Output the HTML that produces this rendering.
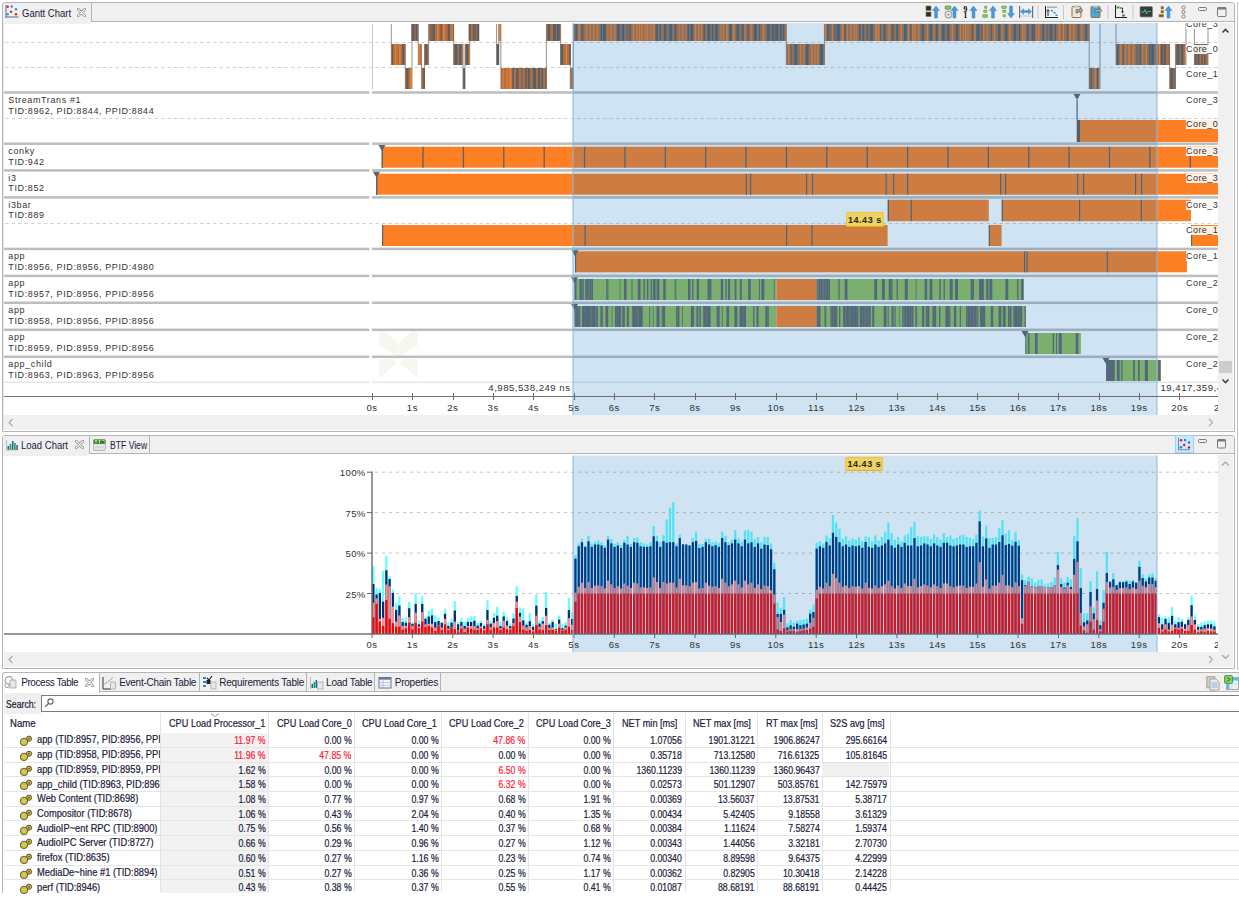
<!DOCTYPE html>
<html><head><meta charset="utf-8"><style>
html,body{margin:0;padding:0;}
body{width:1239px;height:898px;overflow:hidden;position:relative;background:#fff;font-family:"Liberation Sans", sans-serif;}
div{font-family:"Liberation Sans", sans-serif;}
</style></head><body>
<div style="position:absolute;left:2px;top:2px;width:1233px;height:430px;border:1px solid #b4b4b4;border-radius:3px 3px 0 0;background:#fff;box-sizing:border-box;"></div>
<div style="position:absolute;left:3px;top:3px;width:1231px;height:19px;background:#f0f0f0;border-radius:3px 3px 0 0;"></div>
<div style="position:absolute;left:91px;top:21px;width:1143px;height:1px;background:#b4b4b4;"></div>
<div style="position:absolute;left:91px;top:3px;width:1px;height:19px;background:#b4b4b4;"></div>
<svg style="position:absolute;left:5px;top:5px" width="14" height="14" viewBox="0 0 14 14"><rect x="0.5" y="0" width="1" height="12.5" fill="#4a6a9a"/><rect x="0.5" y="11.5" width="13" height="1" fill="#4a6a9a"/><circle cx="2.7" cy="1.8" r="1.2" fill="#e02020"/><circle cx="6.8" cy="1.5" r="1.2" fill="#3a8ad0"/><circle cx="11" cy="4.3" r="1.2" fill="#3a8ad0"/><circle cx="6.1" cy="6.8" r="1.2" fill="#e02020"/><circle cx="2.7" cy="9.2" r="1.2" fill="#3a8ad0"/><circle cx="11" cy="9.2" r="1.2" fill="#e02020"/></svg>
<div style="position:absolute;left:3px;top:21px;width:88px;height:2.5px;background:#f0f0f0;"></div>
<div style="position:absolute;top:9.14px;font-size:10px;line-height:10px;color:#20203a;white-space:nowrap;left:22px;"><span style="display:inline-block;transform:scaleX(0.95);transform-origin:left 50%;">Gantt Chart</span></div>
<svg style="position:absolute;left:77px;top:8px" width="9" height="9" viewBox="0 0 9 9"><path d="M1,1 L8,8 M8,1 L1,8" stroke="#8a8a8a" stroke-width="2.6" stroke-linecap="round"/><path d="M1,1 L8,8 M8,1 L1,8" stroke="#f8f8f8" stroke-width="1.1" stroke-linecap="round"/></svg>
<svg width="1239" height="30" style="position:absolute;left:0;top:0"><rect x="926" y="6" width="5" height="4.5" fill="#303030" stroke="#6a8a3a" stroke-width="0.6"/><rect x="926" y="12" width="5" height="4.5" fill="#303030" stroke="#6a8a3a" stroke-width="0.6"/><path d="M932.6,10.5 L936,6 L939.4,10.5 L937.4,10.5 L937.4,18 L934.6,18 L934.6,10.5 Z" fill="#4a9ad8" stroke="#2f7fc0" stroke-width="0.5"/><rect x="945" y="6" width="6" height="3.2" rx="1" fill="#8cc860" stroke="#3a7a2a" stroke-width="0.6"/><circle cx="948.5" cy="14.5" r="3.3" fill="none" stroke="#a0a0a0" stroke-width="1.2"/><circle cx="948.5" cy="14.5" r="1.2" fill="#a0a0a0"/><path d="M951.1,10.5 L954.5,6 L957.9,10.5 L955.9,10.5 L955.9,18 L953.1,18 L953.1,10.5 Z" fill="#4a9ad8" stroke="#2f7fc0" stroke-width="0.5"/><text x="963.5" y="11.5" font-family="Liberation Serif" font-weight="bold" font-size="7.5" fill="#000">9</text><text x="963.5" y="18" font-family="Liberation Serif" font-weight="bold" font-size="7.5" fill="#000">1</text><path d="M970.1,10.5 L973.5,6 L976.9,10.5 L974.9,10.5 L974.9,18 L972.1,18 L972.1,10.5 Z" fill="#4a9ad8" stroke="#2f7fc0" stroke-width="0.5"/><rect x="984.5" y="6" width="2.5" height="2.5" rx="1" fill="#8cc860" stroke="#5a9a3a" stroke-width="0.6"/><rect x="983.5" y="10" width="3.5" height="2.5" rx="1" fill="#8cc860" stroke="#5a9a3a" stroke-width="0.6"/><rect x="982.5" y="14.5" width="5" height="3" rx="1" fill="#8cc860" stroke="#5a9a3a" stroke-width="0.6"/><path d="M989.6,10.5 L993,6 L996.4,10.5 L994.4,10.5 L994.4,18 L991.6,18 L991.6,10.5 Z" fill="#4a9ad8" stroke="#2f7fc0" stroke-width="0.5"/><rect x="1001.5" y="6" width="5" height="2.5" rx="1" fill="#8cc860" stroke="#5a9a3a" stroke-width="0.6"/><rect x="1002.5" y="10" width="3.5" height="2.5" rx="1" fill="#8cc860" stroke="#5a9a3a" stroke-width="0.6"/><rect x="1003" y="14.5" width="2.5" height="2.5" rx="1" fill="#8cc860" stroke="#5a9a3a" stroke-width="0.6"/><path d="M1007.6,13.5 L1011,18 L1014.4,13.5 L1012.4,13.5 L1012.4,6 L1009.6,6 L1009.6,13.5 Z" fill="#4a9ad8" stroke="#2f7fc0" stroke-width="0.5"/><rect x="1019" y="6" width="1.2" height="12" fill="#707070"/><rect x="1032" y="6" width="1.2" height="12" fill="#707070"/><rect x="1020" y="15.5" width="12" height="1" fill="#c8c8c8"/><path d="M1020.5,11.5 L1023.5,8.5 L1023.5,10.5 L1028.5,10.5 L1028.5,8.5 L1031.5,11.5 L1028.5,14.5 L1028.5,12.5 L1023.5,12.5 L1023.5,14.5 Z" fill="#4a9ad8" stroke="#2f7fc0" stroke-width="0.4"/><rect x="1037.5" y="5" width="1" height="14" fill="#c8c8c8"/><rect x="1045" y="6" width="1" height="12" fill="#202020"/><rect x="1045" y="17" width="13" height="1" fill="#202020"/><rect x="1047" y="6.5" width="10" height="1.5" fill="#b0b0b0"/><path d="M1048,10 L1048,16" stroke="#202020" stroke-width="1"/><path d="M1046.5,11.5 L1048,9.5 L1049.5,11.5" fill="none" stroke="#202020" stroke-width="0.8"/><rect x="1051" y="10" width="2" height="1.5" fill="#3a8ac8"/><rect x="1053.5" y="12" width="2" height="1.5" fill="#3a8ac8"/><rect x="1055.5" y="14.5" width="2" height="1.5" fill="#3a8ac8"/><rect x="1063" y="5" width="1" height="14" fill="#c8c8c8"/><rect x="1072" y="6.5" width="9" height="11" rx="1" fill="#e8e8e0" stroke="#a06840" stroke-width="1"/><rect x="1074" y="5.5" width="5" height="2" fill="#c0c0c0"/><path d="M1076,13 L1076,9.5 L1080,9.5 L1080,8 L1083,10.5 L1080,13 L1080,11.5 L1078,11.5 L1078,13 Z" fill="#f0a040" stroke="#2a6aa0" stroke-width="0.7"/><rect x="1091" y="6.5" width="9" height="11" rx="1" fill="#3ab0e8" stroke="#a06840" stroke-width="1"/><rect x="1093" y="5.5" width="5" height="2" fill="#c0c0c0"/><path d="M1095,13 L1095,9.5 L1099,9.5 L1099,8 L1102,10.5 L1099,13 L1099,11.5 L1097,11.5 L1097,13 Z" fill="#f0a040" stroke="#2a6aa0" stroke-width="0.7"/><rect x="1107.5" y="5" width="1" height="14" fill="#c8c8c8"/><rect x="1115" y="5" width="1" height="13" fill="#202020"/><rect x="1115" y="17" width="12" height="1" fill="#202020"/><rect x="1116.5" y="6.5" width="3" height="2" fill="#3a9a2a"/><rect x="1122" y="14.5" width="3" height="2" fill="#3a9a2a"/><path d="M1120,8 L1122.5,8 L1122.5,13" fill="none" stroke="#202020" stroke-width="0.9"/><path d="M1121,11.5 L1122.5,13.5 L1124,11.5" fill="#202020"/><rect x="1132.5" y="5" width="1" height="14" fill="#c8c8c8"/><rect x="1140" y="6.5" width="12.5" height="10.5" rx="1" fill="#3a3a3a" stroke="#8a8a8a" stroke-width="0.8"/><path d="M1141.5,12 L1144,12 L1145,9.5 L1146.5,14 L1147.5,11.5 L1151,11.5" fill="none" stroke="#40d0a0" stroke-width="0.9"/><rect x="1161" y="6.5" width="2.5" height="2.5" fill="#d03020" stroke="#5ab040" stroke-width="0.6"/><rect x="1161" y="10.5" width="2.5" height="2.5" fill="#d03020" stroke="#5ab040" stroke-width="0.6"/><rect x="1159" y="14.5" width="4.5" height="2.5" fill="#d03020" stroke="#5ab040" stroke-width="0.6"/><path d="M1165.1,10.5 L1168.5,6 L1171.9,10.5 L1169.9,10.5 L1169.9,18 L1167.1,18 L1167.1,10.5 Z" fill="#4a9ad8" stroke="#2f7fc0" stroke-width="0.5"/><circle cx="1183.5" cy="7.5" r="1.6" fill="none" stroke="#7a7a7a" stroke-width="0.9"/><circle cx="1183.5" cy="12" r="1.6" fill="none" stroke="#7a7a7a" stroke-width="0.9"/><circle cx="1183.5" cy="16.5" r="1.6" fill="none" stroke="#7a7a7a" stroke-width="0.9"/><rect x="1198.5" y="7.5" width="8" height="3" rx="1" fill="none" stroke="#7a7a7a" stroke-width="1"/><rect x="1217.5" y="7.5" width="8.5" height="9" rx="1" fill="none" stroke="#7a7a7a" stroke-width="1"/><rect x="1217.5" y="7.5" width="8.5" height="2" fill="#7a7a7a"/></svg>
<div style="position:absolute;left:3px;top:23px;width:1px;height:407px;background:#e6e6e6;"></div>
<svg width="1239" height="898" style="position:absolute;left:0;top:0"><defs><clipPath id="gclip"><rect x="3" y="23" width="1215" height="392"/></clipPath><clipPath id="cclip"><rect x="372" y="23" width="846" height="392"/></clipPath></defs><g clip-path="url(#gclip)"><g fill="#f4f8ef"><path d="M379,331.5 L385,331.5 L398.2,343 L398.2,356.5 L379,345.5 Z"/><path d="M417.8,331.5 L411.8,331.5 L398.8,343 L398.8,356.5 L417.8,345.5 Z"/><path d="M379,359.5 L391.5,358.5 L397.5,363 L379,378 Z"/><path d="M417.8,359.5 L405.3,358.5 L399.3,363 L417.8,378 Z"/></g><rect x="4" y="91.25" width="365.3" height="2.5" fill="#bdbdbd"/><rect x="372" y="91.25" width="846" height="2.5" fill="#bdbdbd"/><rect x="4" y="142.45" width="365.3" height="2.5" fill="#bdbdbd"/><rect x="372" y="142.45" width="846" height="2.5" fill="#bdbdbd"/><rect x="4" y="169.15" width="365.3" height="2.5" fill="#bdbdbd"/><rect x="372" y="169.15" width="846" height="2.5" fill="#bdbdbd"/><rect x="4" y="196.15" width="365.3" height="2.5" fill="#bdbdbd"/><rect x="372" y="196.15" width="846" height="2.5" fill="#bdbdbd"/><rect x="4" y="247.65" width="365.3" height="2.5" fill="#bdbdbd"/><rect x="372" y="247.65" width="846" height="2.5" fill="#bdbdbd"/><rect x="4" y="274.65" width="365.3" height="2.5" fill="#bdbdbd"/><rect x="372" y="274.65" width="846" height="2.5" fill="#bdbdbd"/><rect x="4" y="301.55" width="365.3" height="2.5" fill="#bdbdbd"/><rect x="372" y="301.55" width="846" height="2.5" fill="#bdbdbd"/><rect x="4" y="328.55" width="365.3" height="2.5" fill="#bdbdbd"/><rect x="372" y="328.55" width="846" height="2.5" fill="#bdbdbd"/><rect x="4" y="355.55" width="365.3" height="2.5" fill="#bdbdbd"/><rect x="372" y="355.55" width="846" height="2.5" fill="#bdbdbd"/><rect x="4" y="381.6" width="365.3" height="1.2" fill="#e0e0e0"/><rect x="372" y="381.6" width="846" height="1.2" fill="#e0e0e0"/><line x1="5" y1="42.5" x2="1218" y2="42.5" stroke="#d2d2d2" stroke-width="1" stroke-dasharray="3.5,3"/><line x1="5" y1="67.5" x2="1218" y2="67.5" stroke="#d2d2d2" stroke-width="1" stroke-dasharray="3.5,3"/><line x1="5" y1="118.5" x2="1218" y2="118.5" stroke="#d2d2d2" stroke-width="1" stroke-dasharray="3.5,3"/><line x1="5" y1="223.5" x2="1218" y2="223.5" stroke="#d2d2d2" stroke-width="1" stroke-dasharray="3.5,3"/></g><g clip-path="url(#cclip)"><rect x="371.50" y="24" width="1" height="65" fill="#949494"/><rect x="390.80" y="24" width="1" height="41" fill="#949494"/><rect x="404.80" y="44" width="1" height="45" fill="#949494"/><rect x="411.50" y="24" width="1" height="65" fill="#949494"/><rect x="417.80" y="24" width="1" height="41" fill="#949494"/><rect x="421.00" y="44" width="1" height="45" fill="#949494"/><rect x="424.00" y="44" width="1" height="45" fill="#949494"/><rect x="428.10" y="24" width="1" height="41" fill="#949494"/><rect x="453.10" y="24" width="1" height="41" fill="#949494"/><rect x="462.50" y="44" width="1" height="45" fill="#949494"/><rect x="464.50" y="44" width="1" height="45" fill="#949494"/><rect x="469.30" y="24" width="1" height="41" fill="#949494"/><rect x="496.10" y="24" width="1" height="41" fill="#949494"/><rect x="498.30" y="24" width="1" height="41" fill="#949494"/><rect x="500.40" y="24" width="1" height="65" fill="#949494"/><rect x="545.90" y="24" width="1" height="65" fill="#949494"/><rect x="560.10" y="24" width="1" height="41" fill="#949494"/><rect x="569.80" y="44" width="1" height="45" fill="#949494"/><rect x="572.90" y="24" width="1" height="65" fill="#949494"/><rect x="785.80" y="24" width="1" height="41" fill="#949494"/><rect x="823.90" y="24" width="1" height="41" fill="#949494"/><rect x="1088.70" y="24" width="1" height="65" fill="#949494"/><rect x="1099.50" y="24" width="1" height="65" fill="#949494"/><rect x="1115.50" y="24" width="1" height="41" fill="#949494"/><rect x="1169.10" y="44" width="1" height="45" fill="#949494"/><rect x="1174.90" y="44" width="1" height="45" fill="#949494"/><rect x="1185.50" y="24" width="1" height="41" fill="#949494"/><rect x="1193.90" y="24" width="1" height="41" fill="#949494"/><rect x="1207.50" y="24" width="1" height="41" fill="#949494"/><rect x="411.50" y="24" width="6.80" height="17" fill="#b07044"/><rect x="411.77" y="24" width="2.66" height="17" fill="#56606a"/><rect x="415.64" y="24" width="1.93" height="17" fill="#56606a"/><rect x="428.60" y="24" width="25.20" height="17" fill="#b07044"/><rect x="430.51" y="24" width="1.03" height="17" fill="#56606a"/><rect x="432.35" y="24" width="2.59" height="17" fill="#56606a"/><rect x="437.15" y="24" width="1.28" height="17" fill="#fd8024"/><rect x="440.49" y="24" width="1.26" height="17" fill="#56606a"/><rect x="443.38" y="24" width="1.38" height="17" fill="#fd8024"/><rect x="447.75" y="24" width="2.15" height="17" fill="#56606a"/><rect x="451.57" y="24" width="0.83" height="17" fill="#fd8024"/><rect x="453.06" y="24" width="0.74" height="17" fill="#56606a"/><rect x="468.50" y="24" width="10.70" height="17" fill="#b07044"/><rect x="468.98" y="24" width="1.75" height="17" fill="#56606a"/><rect x="472.78" y="24" width="1.05" height="17" fill="#56606a"/><rect x="474.46" y="24" width="1.50" height="17" fill="#56606a"/><rect x="477.12" y="24" width="1.98" height="17" fill="#56606a"/><rect x="498.60" y="24" width="2.30" height="17" fill="#b07044"/><rect x="499.07" y="24" width="1.12" height="17" fill="#fd8024"/><rect x="546.20" y="24" width="14.70" height="17" fill="#b07044"/><rect x="547.45" y="24" width="2.73" height="17" fill="#56606a"/><rect x="553.04" y="24" width="3.02" height="17" fill="#56606a"/><rect x="556.73" y="24" width="3.07" height="17" fill="#56606a"/><rect x="573.70" y="24" width="212.60" height="17" fill="#b07044"/><rect x="575.29" y="24" width="2.02" height="17" fill="#56606a"/><rect x="578.53" y="24" width="1.33" height="17" fill="#fd8024"/><rect x="581.59" y="24" width="1.76" height="17" fill="#56606a"/><rect x="585.80" y="24" width="1.44" height="17" fill="#fd8024"/><rect x="589.59" y="24" width="1.23" height="17" fill="#fd8024"/><rect x="593.06" y="24" width="1.24" height="17" fill="#fd8024"/><rect x="596.83" y="24" width="1.44" height="17" fill="#fd8024"/><rect x="600.52" y="24" width="1.67" height="17" fill="#56606a"/><rect x="603.02" y="24" width="2.75" height="17" fill="#56606a"/><rect x="607.43" y="24" width="0.96" height="17" fill="#fd8024"/><rect x="610.52" y="24" width="1.56" height="17" fill="#fd8024"/><rect x="614.09" y="24" width="1.32" height="17" fill="#fd8024"/><rect x="616.88" y="24" width="2.99" height="17" fill="#56606a"/><rect x="621.71" y="24" width="2.51" height="17" fill="#56606a"/><rect x="626.74" y="24" width="0.97" height="17" fill="#56606a"/><rect x="629.18" y="24" width="1.60" height="17" fill="#56606a"/><rect x="632.79" y="24" width="1.50" height="17" fill="#fd8024"/><rect x="636.16" y="24" width="1.33" height="17" fill="#fd8024"/><rect x="638.84" y="24" width="1.19" height="17" fill="#fd8024"/><rect x="640.95" y="24" width="1.49" height="17" fill="#fd8024"/><rect x="644.72" y="24" width="1.42" height="17" fill="#fd8024"/><rect x="646.79" y="24" width="1.52" height="17" fill="#fd8024"/><rect x="650.40" y="24" width="1.10" height="17" fill="#fd8024"/><rect x="653.03" y="24" width="1.60" height="17" fill="#fd8024"/><rect x="655.36" y="24" width="2.62" height="17" fill="#56606a"/><rect x="659.53" y="24" width="1.46" height="17" fill="#56606a"/><rect x="663.95" y="24" width="2.44" height="17" fill="#56606a"/><rect x="669.12" y="24" width="2.81" height="17" fill="#56606a"/><rect x="674.45" y="24" width="1.98" height="17" fill="#56606a"/><rect x="678.72" y="24" width="0.87" height="17" fill="#fd8024"/><rect x="681.98" y="24" width="1.19" height="17" fill="#fd8024"/><rect x="685.66" y="24" width="0.82" height="17" fill="#fd8024"/><rect x="687.37" y="24" width="1.73" height="17" fill="#56606a"/><rect x="690.32" y="24" width="3.03" height="17" fill="#56606a"/><rect x="694.56" y="24" width="1.50" height="17" fill="#fd8024"/><rect x="698.13" y="24" width="1.18" height="17" fill="#fd8024"/><rect x="701.06" y="24" width="1.10" height="17" fill="#fd8024"/><rect x="703.50" y="24" width="1.64" height="17" fill="#56606a"/><rect x="707.32" y="24" width="3.02" height="17" fill="#56606a"/><rect x="711.85" y="24" width="1.64" height="17" fill="#56606a"/><rect x="715.04" y="24" width="2.72" height="17" fill="#56606a"/><rect x="720.61" y="24" width="0.80" height="17" fill="#fd8024"/><rect x="723.10" y="24" width="0.82" height="17" fill="#fd8024"/><rect x="726.38" y="24" width="1.37" height="17" fill="#fd8024"/><rect x="729.22" y="24" width="2.86" height="17" fill="#56606a"/><rect x="732.83" y="24" width="1.56" height="17" fill="#fd8024"/><rect x="736.46" y="24" width="2.70" height="17" fill="#56606a"/><rect x="741.72" y="24" width="1.98" height="17" fill="#56606a"/><rect x="744.53" y="24" width="0.92" height="17" fill="#fd8024"/><rect x="747.55" y="24" width="1.23" height="17" fill="#56606a"/><rect x="750.89" y="24" width="0.88" height="17" fill="#fd8024"/><rect x="753.92" y="24" width="2.97" height="17" fill="#56606a"/><rect x="759.00" y="24" width="1.19" height="17" fill="#56606a"/><rect x="762.79" y="24" width="1.29" height="17" fill="#fd8024"/><rect x="766.88" y="24" width="2.95" height="17" fill="#56606a"/><rect x="771.52" y="24" width="2.72" height="17" fill="#56606a"/><rect x="775.16" y="24" width="2.99" height="17" fill="#56606a"/><rect x="779.81" y="24" width="1.93" height="17" fill="#56606a"/><rect x="783.00" y="24" width="1.05" height="17" fill="#56606a"/><rect x="824.20" y="24" width="265.20" height="17" fill="#b07044"/><rect x="824.85" y="24" width="1.32" height="17" fill="#fd8024"/><rect x="826.94" y="24" width="1.74" height="17" fill="#56606a"/><rect x="829.42" y="24" width="0.99" height="17" fill="#56606a"/><rect x="832.05" y="24" width="0.87" height="17" fill="#fd8024"/><rect x="834.54" y="24" width="1.18" height="17" fill="#56606a"/><rect x="836.86" y="24" width="3.08" height="17" fill="#56606a"/><rect x="841.93" y="24" width="1.58" height="17" fill="#fd8024"/><rect x="844.22" y="24" width="1.57" height="17" fill="#56606a"/><rect x="846.73" y="24" width="1.05" height="17" fill="#fd8024"/><rect x="850.34" y="24" width="1.27" height="17" fill="#fd8024"/><rect x="853.74" y="24" width="1.24" height="17" fill="#fd8024"/><rect x="855.72" y="24" width="0.96" height="17" fill="#fd8024"/><rect x="858.92" y="24" width="1.62" height="17" fill="#56606a"/><rect x="862.55" y="24" width="1.59" height="17" fill="#56606a"/><rect x="866.65" y="24" width="1.46" height="17" fill="#56606a"/><rect x="870.09" y="24" width="2.91" height="17" fill="#56606a"/><rect x="875.35" y="24" width="1.58" height="17" fill="#fd8024"/><rect x="877.82" y="24" width="1.41" height="17" fill="#fd8024"/><rect x="880.19" y="24" width="0.99" height="17" fill="#56606a"/><rect x="883.38" y="24" width="2.22" height="17" fill="#56606a"/><rect x="888.30" y="24" width="1.36" height="17" fill="#fd8024"/><rect x="891.68" y="24" width="1.95" height="17" fill="#56606a"/><rect x="896.25" y="24" width="1.99" height="17" fill="#56606a"/><rect x="900.43" y="24" width="1.36" height="17" fill="#fd8024"/><rect x="903.95" y="24" width="2.79" height="17" fill="#56606a"/><rect x="908.02" y="24" width="1.33" height="17" fill="#fd8024"/><rect x="910.01" y="24" width="1.29" height="17" fill="#56606a"/><rect x="912.18" y="24" width="1.41" height="17" fill="#fd8024"/><rect x="914.50" y="24" width="1.11" height="17" fill="#fd8024"/><rect x="918.31" y="24" width="1.16" height="17" fill="#fd8024"/><rect x="921.38" y="24" width="2.78" height="17" fill="#56606a"/><rect x="926.84" y="24" width="1.13" height="17" fill="#fd8024"/><rect x="929.44" y="24" width="3.10" height="17" fill="#56606a"/><rect x="933.50" y="24" width="0.99" height="17" fill="#fd8024"/><rect x="935.65" y="24" width="2.25" height="17" fill="#56606a"/><rect x="939.13" y="24" width="1.14" height="17" fill="#fd8024"/><rect x="941.75" y="24" width="3.09" height="17" fill="#56606a"/><rect x="947.10" y="24" width="2.32" height="17" fill="#56606a"/><rect x="951.65" y="24" width="1.52" height="17" fill="#fd8024"/><rect x="955.64" y="24" width="2.74" height="17" fill="#56606a"/><rect x="959.91" y="24" width="0.88" height="17" fill="#fd8024"/><rect x="962.92" y="24" width="0.85" height="17" fill="#fd8024"/><rect x="964.87" y="24" width="1.07" height="17" fill="#fd8024"/><rect x="966.67" y="24" width="0.92" height="17" fill="#fd8024"/><rect x="968.44" y="24" width="0.82" height="17" fill="#fd8024"/><rect x="971.96" y="24" width="1.24" height="17" fill="#56606a"/><rect x="974.40" y="24" width="1.09" height="17" fill="#fd8024"/><rect x="976.39" y="24" width="3.18" height="17" fill="#56606a"/><rect x="981.29" y="24" width="1.10" height="17" fill="#56606a"/><rect x="983.23" y="24" width="1.01" height="17" fill="#fd8024"/><rect x="986.84" y="24" width="0.82" height="17" fill="#fd8024"/><rect x="990.54" y="24" width="1.24" height="17" fill="#56606a"/><rect x="993.68" y="24" width="1.22" height="17" fill="#fd8024"/><rect x="997.85" y="24" width="2.50" height="17" fill="#56606a"/><rect x="1001.58" y="24" width="0.93" height="17" fill="#fd8024"/><rect x="1004.96" y="24" width="2.69" height="17" fill="#56606a"/><rect x="1009.05" y="24" width="1.45" height="17" fill="#fd8024"/><rect x="1013.46" y="24" width="2.75" height="17" fill="#56606a"/><rect x="1018.78" y="24" width="1.42" height="17" fill="#56606a"/><rect x="1022.04" y="24" width="0.82" height="17" fill="#fd8024"/><rect x="1023.53" y="24" width="1.01" height="17" fill="#fd8024"/><rect x="1026.80" y="24" width="1.93" height="17" fill="#56606a"/><rect x="1031.58" y="24" width="3.10" height="17" fill="#56606a"/><rect x="1036.15" y="24" width="0.98" height="17" fill="#fd8024"/><rect x="1038.20" y="24" width="1.30" height="17" fill="#fd8024"/><rect x="1042.26" y="24" width="2.00" height="17" fill="#56606a"/><rect x="1046.43" y="24" width="1.09" height="17" fill="#56606a"/><rect x="1049.71" y="24" width="2.70" height="17" fill="#56606a"/><rect x="1054.81" y="24" width="1.31" height="17" fill="#56606a"/><rect x="1058.62" y="24" width="1.44" height="17" fill="#fd8024"/><rect x="1062.99" y="24" width="1.12" height="17" fill="#fd8024"/><rect x="1066.98" y="24" width="1.29" height="17" fill="#56606a"/><rect x="1069.18" y="24" width="1.52" height="17" fill="#fd8024"/><rect x="1073.24" y="24" width="1.46" height="17" fill="#fd8024"/><rect x="1077.65" y="24" width="1.71" height="17" fill="#56606a"/><rect x="1081.27" y="24" width="0.81" height="17" fill="#fd8024"/><rect x="1085.02" y="24" width="2.11" height="17" fill="#56606a"/><rect x="391.30" y="44" width="14.20" height="21" fill="#b07044"/><rect x="391.75" y="44" width="1.19" height="21" fill="#56606a"/><rect x="395.24" y="44" width="1.00" height="21" fill="#fd8024"/><rect x="399.23" y="44" width="1.31" height="21" fill="#fd8024"/><rect x="402.25" y="44" width="2.04" height="21" fill="#56606a"/><rect x="418.30" y="44" width="3.20" height="21" fill="#b07044"/><rect x="419.23" y="44" width="0.91" height="21" fill="#fd8024"/><rect x="424.10" y="44" width="4.50" height="21" fill="#b07044"/><rect x="425.24" y="44" width="2.23" height="21" fill="#56606a"/><rect x="453.50" y="44" width="9.20" height="21" fill="#b07044"/><rect x="454.40" y="44" width="3.03" height="21" fill="#56606a"/><rect x="459.15" y="44" width="2.25" height="21" fill="#56606a"/><rect x="462.44" y="44" width="0.26" height="21" fill="#56606a"/><rect x="465.00" y="44" width="4.80" height="21" fill="#b07044"/><rect x="465.95" y="44" width="2.43" height="21" fill="#56606a"/><rect x="469.32" y="44" width="0.48" height="21" fill="#fd8024"/><rect x="496.40" y="44" width="2.60" height="21" fill="#b07044"/><rect x="496.92" y="44" width="2.08" height="21" fill="#56606a"/><rect x="560.40" y="44" width="10.30" height="21" fill="#b07044"/><rect x="560.61" y="44" width="2.40" height="21" fill="#56606a"/><rect x="565.87" y="44" width="1.00" height="21" fill="#fd8024"/><rect x="569.24" y="44" width="1.46" height="21" fill="#56606a"/><rect x="786.30" y="44" width="38.40" height="21" fill="#b07044"/><rect x="788.23" y="44" width="1.39" height="21" fill="#fd8024"/><rect x="790.60" y="44" width="0.94" height="21" fill="#56606a"/><rect x="794.25" y="44" width="2.87" height="21" fill="#56606a"/><rect x="800.12" y="44" width="1.07" height="21" fill="#fd8024"/><rect x="803.49" y="44" width="1.01" height="21" fill="#fd8024"/><rect x="805.65" y="44" width="2.91" height="21" fill="#56606a"/><rect x="811.07" y="44" width="1.54" height="21" fill="#fd8024"/><rect x="814.44" y="44" width="1.16" height="21" fill="#fd8024"/><rect x="817.21" y="44" width="1.25" height="21" fill="#fd8024"/><rect x="819.93" y="44" width="3.04" height="21" fill="#56606a"/><rect x="1116.00" y="44" width="53.60" height="21" fill="#b07044"/><rect x="1116.72" y="44" width="1.86" height="21" fill="#56606a"/><rect x="1120.25" y="44" width="1.33" height="21" fill="#fd8024"/><rect x="1122.80" y="44" width="0.92" height="21" fill="#56606a"/><rect x="1125.05" y="44" width="0.91" height="21" fill="#fd8024"/><rect x="1128.35" y="44" width="1.43" height="21" fill="#fd8024"/><rect x="1132.67" y="44" width="1.51" height="21" fill="#fd8024"/><rect x="1136.73" y="44" width="0.96" height="21" fill="#56606a"/><rect x="1139.39" y="44" width="1.58" height="21" fill="#56606a"/><rect x="1142.11" y="44" width="1.01" height="21" fill="#fd8024"/><rect x="1145.60" y="44" width="1.14" height="21" fill="#fd8024"/><rect x="1148.89" y="44" width="1.57" height="21" fill="#56606a"/><rect x="1151.16" y="44" width="2.81" height="21" fill="#56606a"/><rect x="1156.48" y="44" width="1.44" height="21" fill="#56606a"/><rect x="1158.89" y="44" width="1.17" height="21" fill="#fd8024"/><rect x="1160.81" y="44" width="2.57" height="21" fill="#56606a"/><rect x="1164.02" y="44" width="2.03" height="21" fill="#56606a"/><rect x="1168.85" y="44" width="0.75" height="21" fill="#56606a"/><rect x="1175.40" y="44" width="10.10" height="21" fill="#b07044"/><rect x="1176.44" y="44" width="3.11" height="21" fill="#56606a"/><rect x="1180.85" y="44" width="2.52" height="21" fill="#56606a"/><rect x="1194.40" y="44" width="13.60" height="21" fill="#b07044"/><rect x="1194.76" y="44" width="1.67" height="21" fill="#56606a"/><rect x="1197.51" y="44" width="2.04" height="21" fill="#56606a"/><rect x="1201.29" y="44" width="1.51" height="21" fill="#56606a"/><rect x="1204.01" y="44" width="1.65" height="21" fill="#56606a"/><rect x="405.00" y="68" width="7.00" height="21" fill="#b07044"/><rect x="406.35" y="68" width="2.10" height="21" fill="#56606a"/><rect x="410.28" y="68" width="1.60" height="21" fill="#fd8024"/><rect x="421.50" y="68" width="3.40" height="21" fill="#b07044"/><rect x="423.31" y="68" width="1.59" height="21" fill="#56606a"/><rect x="463.00" y="68" width="2.00" height="21" fill="#b07044"/><rect x="463.33" y="68" width="1.67" height="21" fill="#56606a"/><rect x="500.90" y="68" width="45.60" height="21" fill="#b07044"/><rect x="502.82" y="68" width="0.82" height="21" fill="#fd8024"/><rect x="506.63" y="68" width="0.90" height="21" fill="#fd8024"/><rect x="509.69" y="68" width="1.51" height="21" fill="#fd8024"/><rect x="512.36" y="68" width="1.63" height="21" fill="#56606a"/><rect x="516.04" y="68" width="2.48" height="21" fill="#56606a"/><rect x="521.33" y="68" width="1.01" height="21" fill="#56606a"/><rect x="525.06" y="68" width="1.61" height="21" fill="#56606a"/><rect x="527.73" y="68" width="2.24" height="21" fill="#56606a"/><rect x="532.82" y="68" width="3.11" height="21" fill="#56606a"/><rect x="537.89" y="68" width="2.31" height="21" fill="#56606a"/><rect x="541.42" y="68" width="1.62" height="21" fill="#56606a"/><rect x="545.51" y="68" width="0.99" height="21" fill="#56606a"/><rect x="570.00" y="68" width="3.20" height="21" fill="#b07044"/><rect x="571.85" y="68" width="1.35" height="21" fill="#56606a"/><rect x="1089.00" y="68" width="10.50" height="21" fill="#b07044"/><rect x="1090.42" y="68" width="1.32" height="21" fill="#56606a"/><rect x="1094.74" y="68" width="1.34" height="21" fill="#fd8024"/><rect x="1096.90" y="68" width="1.25" height="21" fill="#56606a"/><rect x="1169.60" y="68" width="5.80" height="21" fill="#b07044"/><rect x="1170.35" y="68" width="2.84" height="21" fill="#56606a"/><rect x="1174.31" y="68" width="1.09" height="21" fill="#56606a"/><rect x="1076.5" y="100" width="1.2" height="20" fill="#5f6368"/><rect x="1076.5" y="120" width="142" height="22" fill="#fd8024"/><rect x="1077" y="120" width="3" height="22" fill="#56606a"/><rect x="382" y="146.7" width="836" height="21" fill="#fd8024"/><rect x="422.38" y="146.7" width="1.3" height="21" fill="#5f6368"/><rect x="462.76" y="146.7" width="1.3" height="21" fill="#5f6368"/><rect x="503.14" y="146.7" width="1.3" height="21" fill="#5f6368"/><rect x="543.52" y="146.7" width="1.3" height="21" fill="#5f6368"/><rect x="583.90" y="146.7" width="1.3" height="21" fill="#5f6368"/><rect x="624.28" y="146.7" width="1.3" height="21" fill="#5f6368"/><rect x="664.66" y="146.7" width="1.3" height="21" fill="#5f6368"/><rect x="705.04" y="146.7" width="1.3" height="21" fill="#5f6368"/><rect x="745.42" y="146.7" width="1.3" height="21" fill="#5f6368"/><rect x="785.80" y="146.7" width="1.3" height="21" fill="#5f6368"/><rect x="826.18" y="146.7" width="1.3" height="21" fill="#5f6368"/><rect x="866.56" y="146.7" width="1.3" height="21" fill="#5f6368"/><rect x="906.94" y="146.7" width="1.3" height="21" fill="#5f6368"/><rect x="947.32" y="146.7" width="1.3" height="21" fill="#5f6368"/><rect x="987.70" y="146.7" width="1.3" height="21" fill="#5f6368"/><rect x="1028.08" y="146.7" width="1.3" height="21" fill="#5f6368"/><rect x="1068.46" y="146.7" width="1.3" height="21" fill="#5f6368"/><rect x="1108.84" y="146.7" width="1.3" height="21" fill="#5f6368"/><rect x="1149.22" y="146.7" width="1.3" height="21" fill="#5f6368"/><rect x="1189.60" y="146.7" width="1.3" height="21" fill="#5f6368"/><rect x="381.5" y="146" width="1.5" height="22" fill="#5f6368"/><rect x="376.5" y="173.7" width="842" height="21" fill="#fd8024"/><rect x="376" y="173" width="1.5" height="22" fill="#5f6368"/><rect x="745.80" y="173.7" width="1.2" height="21" fill="#5f6368"/><rect x="750.00" y="173.7" width="1.2" height="21" fill="#5f6368"/><rect x="806.00" y="173.7" width="1.2" height="21" fill="#5f6368"/><rect x="812.00" y="173.7" width="1.2" height="21" fill="#5f6368"/><rect x="885.60" y="173.7" width="1.2" height="21" fill="#5f6368"/><rect x="893.00" y="173.7" width="1.2" height="21" fill="#5f6368"/><rect x="907.00" y="173.7" width="1.2" height="21" fill="#5f6368"/><rect x="1000.00" y="173.7" width="1.2" height="21" fill="#5f6368"/><rect x="1005.00" y="173.7" width="1.2" height="21" fill="#5f6368"/><rect x="1077.00" y="173.7" width="1.2" height="21" fill="#5f6368"/><rect x="1083.00" y="173.7" width="1.2" height="21" fill="#5f6368"/><rect x="1135.00" y="173.7" width="1.2" height="21" fill="#5f6368"/><rect x="1141.00" y="173.7" width="1.2" height="21" fill="#5f6368"/><rect x="887.6" y="199.7" width="101.2" height="21.5" fill="#fd8024"/><rect x="1001.6" y="199.7" width="189.4" height="21.5" fill="#fd8024"/><rect x="887.80" y="199.7" width="1.2" height="21.5" fill="#5f6368"/><rect x="910.70" y="199.7" width="1.2" height="21.5" fill="#5f6368"/><rect x="1001.80" y="199.7" width="1.2" height="21.5" fill="#5f6368"/><rect x="1079.00" y="199.7" width="1.2" height="21.5" fill="#5f6368"/><rect x="1140.70" y="199.7" width="1.2" height="21.5" fill="#5f6368"/><rect x="382" y="225" width="505.6" height="21" fill="#fd8024"/><rect x="988.8" y="225" width="12.8" height="21" fill="#fd8024"/><rect x="1191" y="225" width="27" height="21" fill="#fd8024"/><rect x="382.00" y="225" width="1.2" height="21" fill="#5f6368"/><rect x="584.50" y="225" width="1.2" height="21" fill="#5f6368"/><rect x="786.00" y="225" width="1.2" height="21" fill="#5f6368"/><rect x="811.50" y="225" width="1.2" height="21" fill="#5f6368"/><rect x="988.80" y="225" width="1.2" height="21" fill="#5f6368"/><rect x="1191.00" y="225" width="1.2" height="21" fill="#5f6368"/><rect x="575" y="251.3" width="612" height="21" fill="#fd8024"/><rect x="575.00" y="251.3" width="1.2" height="21" fill="#5f6368"/><rect x="1024.00" y="251.3" width="1.2" height="21" fill="#5f6368"/><rect x="1026.50" y="251.3" width="1.2" height="21" fill="#5f6368"/><rect x="1106.70" y="251.3" width="1.2" height="21" fill="#5f6368"/><rect x="574.50" y="279" width="18.50" height="21" fill="#95bf5c"/><rect x="574.50" y="279" width="2.04" height="21" fill="#66666c"/><rect x="579.46" y="279" width="1.77" height="21" fill="#66666c"/><rect x="581.23" y="279" width="1.19" height="21" fill="#66666c"/><rect x="582.42" y="279" width="1.36" height="21" fill="#66666c"/><rect x="584.98" y="279" width="0.86" height="21" fill="#66666c"/><rect x="585.84" y="279" width="0.90" height="21" fill="#66666c"/><rect x="586.74" y="279" width="1.54" height="21" fill="#66666c"/><rect x="588.29" y="279" width="1.45" height="21" fill="#66666c"/><rect x="589.74" y="279" width="1.63" height="21" fill="#66666c"/><rect x="591.36" y="279" width="1.64" height="21" fill="#66666c"/><rect x="593.00" y="279" width="183.40" height="21" fill="#95bf5c"/><rect x="606.27" y="279" width="1.05" height="21" fill="#66666c"/><rect x="607.32" y="279" width="1.12" height="21" fill="#66666c"/><rect x="619.61" y="279" width="0.71" height="21" fill="#66666c"/><rect x="623.98" y="279" width="2.63" height="21" fill="#66666c"/><rect x="631.49" y="279" width="1.02" height="21" fill="#66666c"/><rect x="637.79" y="279" width="2.75" height="21" fill="#66666c"/><rect x="643.43" y="279" width="1.48" height="21" fill="#66666c"/><rect x="646.87" y="279" width="1.51" height="21" fill="#66666c"/><rect x="650.63" y="279" width="1.28" height="21" fill="#66666c"/><rect x="652.86" y="279" width="2.77" height="21" fill="#66666c"/><rect x="656.55" y="279" width="2.74" height="21" fill="#66666c"/><rect x="663.21" y="279" width="2.55" height="21" fill="#66666c"/><rect x="674.64" y="279" width="0.82" height="21" fill="#66666c"/><rect x="675.47" y="279" width="0.85" height="21" fill="#66666c"/><rect x="688.01" y="279" width="2.39" height="21" fill="#66666c"/><rect x="692.10" y="279" width="1.38" height="21" fill="#66666c"/><rect x="696.70" y="279" width="2.23" height="21" fill="#66666c"/><rect x="707.54" y="279" width="1.74" height="21" fill="#66666c"/><rect x="709.28" y="279" width="2.12" height="21" fill="#66666c"/><rect x="720.79" y="279" width="2.38" height="21" fill="#66666c"/><rect x="725.51" y="279" width="1.31" height="21" fill="#66666c"/><rect x="728.02" y="279" width="0.92" height="21" fill="#66666c"/><rect x="728.94" y="279" width="1.14" height="21" fill="#66666c"/><rect x="734.69" y="279" width="1.73" height="21" fill="#66666c"/><rect x="739.91" y="279" width="1.88" height="21" fill="#66666c"/><rect x="748.09" y="279" width="1.81" height="21" fill="#66666c"/><rect x="749.90" y="279" width="0.95" height="21" fill="#66666c"/><rect x="758.93" y="279" width="1.01" height="21" fill="#66666c"/><rect x="761.30" y="279" width="2.97" height="21" fill="#66666c"/><rect x="773.82" y="279" width="0.77" height="21" fill="#66666c"/><rect x="816.40" y="279" width="13.60" height="21" fill="#95bf5c"/><rect x="816.40" y="279" width="1.04" height="21" fill="#66666c"/><rect x="817.44" y="279" width="1.09" height="21" fill="#66666c"/><rect x="818.53" y="279" width="2.10" height="21" fill="#66666c"/><rect x="820.63" y="279" width="2.12" height="21" fill="#66666c"/><rect x="822.75" y="279" width="0.80" height="21" fill="#66666c"/><rect x="823.55" y="279" width="2.13" height="21" fill="#66666c"/><rect x="825.67" y="279" width="2.72" height="21" fill="#66666c"/><rect x="828.40" y="279" width="1.57" height="21" fill="#66666c"/><rect x="829.96" y="279" width="0.04" height="21" fill="#66666c"/><rect x="830.00" y="279" width="193.60" height="21" fill="#95bf5c"/><rect x="838.40" y="279" width="1.27" height="21" fill="#66666c"/><rect x="844.69" y="279" width="2.79" height="21" fill="#66666c"/><rect x="874.21" y="279" width="2.87" height="21" fill="#66666c"/><rect x="881.96" y="279" width="2.86" height="21" fill="#66666c"/><rect x="888.79" y="279" width="1.23" height="21" fill="#66666c"/><rect x="890.02" y="279" width="1.60" height="21" fill="#66666c"/><rect x="891.61" y="279" width="0.97" height="21" fill="#66666c"/><rect x="896.62" y="279" width="1.26" height="21" fill="#66666c"/><rect x="904.75" y="279" width="2.18" height="21" fill="#66666c"/><rect x="906.92" y="279" width="0.91" height="21" fill="#66666c"/><rect x="915.80" y="279" width="0.72" height="21" fill="#66666c"/><rect x="924.52" y="279" width="2.62" height="21" fill="#66666c"/><rect x="929.64" y="279" width="2.69" height="21" fill="#66666c"/><rect x="939.30" y="279" width="1.49" height="21" fill="#66666c"/><rect x="943.58" y="279" width="1.27" height="21" fill="#66666c"/><rect x="949.75" y="279" width="2.89" height="21" fill="#66666c"/><rect x="955.09" y="279" width="2.91" height="21" fill="#66666c"/><rect x="970.71" y="279" width="2.19" height="21" fill="#66666c"/><rect x="972.90" y="279" width="1.05" height="21" fill="#66666c"/><rect x="979.08" y="279" width="2.92" height="21" fill="#66666c"/><rect x="982.00" y="279" width="1.81" height="21" fill="#66666c"/><rect x="986.24" y="279" width="2.29" height="21" fill="#66666c"/><rect x="989.36" y="279" width="2.99" height="21" fill="#66666c"/><rect x="1005.38" y="279" width="2.94" height="21" fill="#66666c"/><rect x="1017.09" y="279" width="1.35" height="21" fill="#66666c"/><rect x="1021.12" y="279" width="2.48" height="21" fill="#66666c"/><rect x="574.50" y="306" width="23.50" height="21" fill="#95bf5c"/><rect x="574.50" y="306" width="0.85" height="21" fill="#66666c"/><rect x="575.35" y="306" width="0.71" height="21" fill="#66666c"/><rect x="576.06" y="306" width="2.43" height="21" fill="#66666c"/><rect x="578.49" y="306" width="1.78" height="21" fill="#66666c"/><rect x="582.01" y="306" width="2.10" height="21" fill="#66666c"/><rect x="584.12" y="306" width="2.00" height="21" fill="#66666c"/><rect x="586.12" y="306" width="1.93" height="21" fill="#66666c"/><rect x="588.05" y="306" width="2.30" height="21" fill="#66666c"/><rect x="590.35" y="306" width="1.39" height="21" fill="#66666c"/><rect x="591.74" y="306" width="1.31" height="21" fill="#66666c"/><rect x="593.05" y="306" width="2.43" height="21" fill="#66666c"/><rect x="595.48" y="306" width="0.77" height="21" fill="#66666c"/><rect x="596.25" y="306" width="0.88" height="21" fill="#66666c"/><rect x="597.13" y="306" width="0.87" height="21" fill="#66666c"/><rect x="598.00" y="306" width="42.00" height="21" fill="#95bf5c"/><rect x="600.45" y="306" width="2.27" height="21" fill="#66666c"/><rect x="605.57" y="306" width="2.73" height="21" fill="#66666c"/><rect x="611.61" y="306" width="0.73" height="21" fill="#66666c"/><rect x="614.98" y="306" width="1.86" height="21" fill="#66666c"/><rect x="616.84" y="306" width="2.06" height="21" fill="#66666c"/><rect x="618.90" y="306" width="2.30" height="21" fill="#66666c"/><rect x="622.34" y="306" width="2.47" height="21" fill="#66666c"/><rect x="626.88" y="306" width="1.91" height="21" fill="#66666c"/><rect x="632.22" y="306" width="2.90" height="21" fill="#66666c"/><rect x="635.12" y="306" width="2.37" height="21" fill="#66666c"/><rect x="637.49" y="306" width="0.71" height="21" fill="#66666c"/><rect x="638.20" y="306" width="1.80" height="21" fill="#66666c"/><rect x="640.00" y="306" width="136.40" height="21" fill="#95bf5c"/><rect x="640.00" y="306" width="2.70" height="21" fill="#66666c"/><rect x="649.16" y="306" width="0.96" height="21" fill="#66666c"/><rect x="652.85" y="306" width="0.75" height="21" fill="#66666c"/><rect x="656.57" y="306" width="2.92" height="21" fill="#66666c"/><rect x="661.70" y="306" width="1.05" height="21" fill="#66666c"/><rect x="662.75" y="306" width="2.44" height="21" fill="#66666c"/><rect x="676.17" y="306" width="1.08" height="21" fill="#66666c"/><rect x="677.25" y="306" width="2.17" height="21" fill="#66666c"/><rect x="681.95" y="306" width="0.77" height="21" fill="#66666c"/><rect x="690.87" y="306" width="2.33" height="21" fill="#66666c"/><rect x="693.20" y="306" width="0.93" height="21" fill="#66666c"/><rect x="696.45" y="306" width="1.92" height="21" fill="#66666c"/><rect x="699.30" y="306" width="0.95" height="21" fill="#66666c"/><rect x="700.25" y="306" width="0.76" height="21" fill="#66666c"/><rect x="702.98" y="306" width="0.73" height="21" fill="#66666c"/><rect x="703.71" y="306" width="1.46" height="21" fill="#66666c"/><rect x="705.17" y="306" width="1.64" height="21" fill="#66666c"/><rect x="706.81" y="306" width="1.13" height="21" fill="#66666c"/><rect x="707.95" y="306" width="2.67" height="21" fill="#66666c"/><rect x="716.62" y="306" width="1.53" height="21" fill="#66666c"/><rect x="718.15" y="306" width="1.56" height="21" fill="#66666c"/><rect x="721.80" y="306" width="0.84" height="21" fill="#66666c"/><rect x="726.50" y="306" width="2.52" height="21" fill="#66666c"/><rect x="734.49" y="306" width="2.79" height="21" fill="#66666c"/><rect x="739.52" y="306" width="1.42" height="21" fill="#66666c"/><rect x="740.95" y="306" width="2.26" height="21" fill="#66666c"/><rect x="743.20" y="306" width="2.80" height="21" fill="#66666c"/><rect x="753.06" y="306" width="1.35" height="21" fill="#66666c"/><rect x="756.47" y="306" width="2.11" height="21" fill="#66666c"/><rect x="765.37" y="306" width="2.37" height="21" fill="#66666c"/><rect x="767.74" y="306" width="1.08" height="21" fill="#66666c"/><rect x="816.40" y="306" width="63.60" height="21" fill="#95bf5c"/><rect x="816.40" y="306" width="2.46" height="21" fill="#66666c"/><rect x="818.86" y="306" width="1.64" height="21" fill="#66666c"/><rect x="824.44" y="306" width="0.78" height="21" fill="#66666c"/><rect x="825.22" y="306" width="1.16" height="21" fill="#66666c"/><rect x="830.39" y="306" width="1.45" height="21" fill="#66666c"/><rect x="831.85" y="306" width="1.77" height="21" fill="#66666c"/><rect x="833.62" y="306" width="2.33" height="21" fill="#66666c"/><rect x="835.94" y="306" width="1.27" height="21" fill="#66666c"/><rect x="839.00" y="306" width="1.32" height="21" fill="#66666c"/><rect x="843.09" y="306" width="2.47" height="21" fill="#66666c"/><rect x="845.56" y="306" width="1.30" height="21" fill="#66666c"/><rect x="846.86" y="306" width="2.80" height="21" fill="#66666c"/><rect x="849.67" y="306" width="0.99" height="21" fill="#66666c"/><rect x="850.66" y="306" width="2.52" height="21" fill="#66666c"/><rect x="853.18" y="306" width="2.96" height="21" fill="#66666c"/><rect x="856.14" y="306" width="2.20" height="21" fill="#66666c"/><rect x="859.71" y="306" width="2.99" height="21" fill="#66666c"/><rect x="862.70" y="306" width="1.50" height="21" fill="#66666c"/><rect x="864.20" y="306" width="1.15" height="21" fill="#66666c"/><rect x="865.35" y="306" width="1.90" height="21" fill="#66666c"/><rect x="867.25" y="306" width="1.50" height="21" fill="#66666c"/><rect x="868.75" y="306" width="1.98" height="21" fill="#66666c"/><rect x="872.23" y="306" width="2.05" height="21" fill="#66666c"/><rect x="880.00" y="306" width="20.00" height="21" fill="#95bf5c"/><rect x="883.65" y="306" width="2.86" height="21" fill="#66666c"/><rect x="887.64" y="306" width="1.01" height="21" fill="#66666c"/><rect x="891.58" y="306" width="2.09" height="21" fill="#66666c"/><rect x="894.60" y="306" width="1.06" height="21" fill="#66666c"/><rect x="899.41" y="306" width="0.59" height="21" fill="#66666c"/><rect x="900.00" y="306" width="125.80" height="21" fill="#95bf5c"/><rect x="902.27" y="306" width="1.17" height="21" fill="#66666c"/><rect x="903.44" y="306" width="0.78" height="21" fill="#66666c"/><rect x="904.22" y="306" width="2.44" height="21" fill="#66666c"/><rect x="906.66" y="306" width="2.51" height="21" fill="#66666c"/><rect x="909.17" y="306" width="2.23" height="21" fill="#66666c"/><rect x="911.40" y="306" width="2.09" height="21" fill="#66666c"/><rect x="915.23" y="306" width="1.24" height="21" fill="#66666c"/><rect x="916.47" y="306" width="0.75" height="21" fill="#66666c"/><rect x="921.95" y="306" width="2.30" height="21" fill="#66666c"/><rect x="925.80" y="306" width="2.00" height="21" fill="#66666c"/><rect x="927.80" y="306" width="1.55" height="21" fill="#66666c"/><rect x="932.43" y="306" width="1.73" height="21" fill="#66666c"/><rect x="934.16" y="306" width="1.98" height="21" fill="#66666c"/><rect x="939.05" y="306" width="1.39" height="21" fill="#66666c"/><rect x="945.39" y="306" width="2.56" height="21" fill="#66666c"/><rect x="947.94" y="306" width="1.66" height="21" fill="#66666c"/><rect x="949.60" y="306" width="0.82" height="21" fill="#66666c"/><rect x="953.88" y="306" width="2.40" height="21" fill="#66666c"/><rect x="959.77" y="306" width="1.15" height="21" fill="#66666c"/><rect x="966.08" y="306" width="1.36" height="21" fill="#66666c"/><rect x="967.44" y="306" width="2.91" height="21" fill="#66666c"/><rect x="970.36" y="306" width="3.00" height="21" fill="#66666c"/><rect x="973.36" y="306" width="0.75" height="21" fill="#66666c"/><rect x="974.11" y="306" width="2.46" height="21" fill="#66666c"/><rect x="976.57" y="306" width="1.02" height="21" fill="#66666c"/><rect x="977.59" y="306" width="0.81" height="21" fill="#66666c"/><rect x="979.95" y="306" width="0.99" height="21" fill="#66666c"/><rect x="980.94" y="306" width="1.97" height="21" fill="#66666c"/><rect x="982.91" y="306" width="2.30" height="21" fill="#66666c"/><rect x="990.78" y="306" width="2.41" height="21" fill="#66666c"/><rect x="998.53" y="306" width="2.80" height="21" fill="#66666c"/><rect x="1002.82" y="306" width="2.83" height="21" fill="#66666c"/><rect x="1008.00" y="306" width="1.46" height="21" fill="#66666c"/><rect x="1009.46" y="306" width="2.13" height="21" fill="#66666c"/><rect x="1013.32" y="306" width="1.58" height="21" fill="#66666c"/><rect x="1014.90" y="306" width="2.92" height="21" fill="#66666c"/><rect x="1017.82" y="306" width="1.94" height="21" fill="#66666c"/><rect x="1019.76" y="306" width="2.42" height="21" fill="#66666c"/><rect x="1024.53" y="306" width="1.27" height="21" fill="#66666c"/><rect x="776.4" y="279" width="40" height="21" fill="#fd8024"/><rect x="776.4" y="306" width="40" height="21" fill="#fd8024"/><rect x="1025.3" y="333" width="55.6" height="21" fill="#95bf5c"/><rect x="1025.3" y="333" width="1.00" height="21" fill="#66666c"/><rect x="1027.9" y="333" width="1.60" height="21" fill="#66666c"/><rect x="1035" y="333" width="2.60" height="21" fill="#66666c"/><rect x="1052.7" y="333" width="1.30" height="21" fill="#66666c"/><rect x="1056" y="333" width="1.00" height="21" fill="#66666c"/><rect x="1058.7" y="333" width="3.10" height="21" fill="#66666c"/><rect x="1075.7" y="333" width="2.60" height="21" fill="#66666c"/><rect x="1106.1" y="360" width="54.6" height="21" fill="#95bf5c"/><rect x="1106.1" y="360" width="8.60" height="21" fill="#66666c"/><rect x="1117" y="360" width="2.70" height="21" fill="#66666c"/><rect x="1121.2" y="360" width="1.30" height="21" fill="#66666c"/><rect x="1133.2" y="360" width="1.70" height="21" fill="#66666c"/><rect x="1138" y="360" width="1.70" height="21" fill="#66666c"/><rect x="1144.8" y="360" width="3.20" height="21" fill="#66666c"/><rect x="1157.8" y="360" width="2.90" height="21" fill="#66666c"/><path d="M378.5,145 L385.5,145 L382.0,151 Z" fill="#5f6368"/><path d="M373.0,171.7 L380.0,171.7 L376.5,177.7 Z" fill="#5f6368"/><path d="M571.5,250.2 L578.5,250.2 L575.0,256.2 Z" fill="#5f6368"/><path d="M571.0,277.2 L578.0,277.2 L574.5,283.2 Z" fill="#5f6368"/><path d="M571.0,304.1 L578.0,304.1 L574.5,310.1 Z" fill="#5f6368"/><path d="M1021.5,331.1 L1028.5,331.1 L1025.0,337.1 Z" fill="#5f6368"/><path d="M1102.5,358.1 L1109.5,358.1 L1106.0,364.1 Z" fill="#5f6368"/><path d="M1073.5,94 L1080.5,94 L1077.0,100 Z" fill="#5f6368"/></g><rect x="573" y="23" width="584" height="392" fill="rgb(15,115,190)" fill-opacity="0.2"/><rect x="572.5" y="23" width="1" height="392" fill="#8ab8e0"/><rect x="1156.5" y="23" width="1" height="392" fill="#8ab8e0"/></svg>
<div style="position:absolute;top:96.08px;font-size:9px;line-height:9px;color:#333333;white-space:nowrap;letter-spacing:0.62px;left:8.3px;">StreamTrans #1</div>
<div style="position:absolute;top:106.58px;font-size:9px;line-height:9px;color:#333333;white-space:nowrap;letter-spacing:0.62px;left:8.3px;">TID:8962, PID:8844, PPID:8844</div>
<div style="position:absolute;top:147.28px;font-size:9px;line-height:9px;color:#333333;white-space:nowrap;letter-spacing:0.62px;left:8.3px;">conky</div>
<div style="position:absolute;top:157.78px;font-size:9px;line-height:9px;color:#333333;white-space:nowrap;letter-spacing:0.62px;left:8.3px;">TID:942</div>
<div style="position:absolute;top:173.98px;font-size:9px;line-height:9px;color:#333333;white-space:nowrap;letter-spacing:0.62px;left:8.3px;">i3</div>
<div style="position:absolute;top:184.48px;font-size:9px;line-height:9px;color:#333333;white-space:nowrap;letter-spacing:0.62px;left:8.3px;">TID:852</div>
<div style="position:absolute;top:200.98px;font-size:9px;line-height:9px;color:#333333;white-space:nowrap;letter-spacing:0.62px;left:8.3px;">i3bar</div>
<div style="position:absolute;top:211.48px;font-size:9px;line-height:9px;color:#333333;white-space:nowrap;letter-spacing:0.62px;left:8.3px;">TID:889</div>
<div style="position:absolute;top:252.48px;font-size:9px;line-height:9px;color:#333333;white-space:nowrap;letter-spacing:0.62px;left:8.3px;">app</div>
<div style="position:absolute;top:262.98px;font-size:9px;line-height:9px;color:#333333;white-space:nowrap;letter-spacing:0.62px;left:8.3px;">TID:8956, PID:8956, PPID:4980</div>
<div style="position:absolute;top:279.48px;font-size:9px;line-height:9px;color:#333333;white-space:nowrap;letter-spacing:0.62px;left:8.3px;">app</div>
<div style="position:absolute;top:289.98px;font-size:9px;line-height:9px;color:#333333;white-space:nowrap;letter-spacing:0.62px;left:8.3px;">TID:8957, PID:8956, PPID:8956</div>
<div style="position:absolute;top:306.38px;font-size:9px;line-height:9px;color:#333333;white-space:nowrap;letter-spacing:0.62px;left:8.3px;">app</div>
<div style="position:absolute;top:316.88px;font-size:9px;line-height:9px;color:#333333;white-space:nowrap;letter-spacing:0.62px;left:8.3px;">TID:8958, PID:8956, PPID:8956</div>
<div style="position:absolute;top:333.38px;font-size:9px;line-height:9px;color:#333333;white-space:nowrap;letter-spacing:0.62px;left:8.3px;">app</div>
<div style="position:absolute;top:343.88px;font-size:9px;line-height:9px;color:#333333;white-space:nowrap;letter-spacing:0.62px;left:8.3px;">TID:8959, PID:8959, PPID:8956</div>
<div style="position:absolute;top:360.38px;font-size:9px;line-height:9px;color:#333333;white-space:nowrap;letter-spacing:0.62px;left:8.3px;">app_child</div>
<div style="position:absolute;top:370.88px;font-size:9px;line-height:9px;color:#333333;white-space:nowrap;letter-spacing:0.62px;left:8.3px;">TID:8963, PID:8963, PPID:8956</div>
<div style="position:absolute;left:1185.7px;top:23px;width:32.4px;height:5.600000000000001px;background:rgba(255,255,255,0.88);overflow:hidden;"><div style="position:absolute;top:-3.32px;font-size:9px;line-height:9px;color:#333333;white-space:nowrap;letter-spacing:0.45px;left:0.3px;">Core_3</div></div>
<div style="position:absolute;left:1185.7px;top:44.8px;width:32.4px;height:9.0px;background:rgba(255,255,255,0.88);overflow:hidden;"><div style="position:absolute;top:0.08px;font-size:9px;line-height:9px;color:#333333;white-space:nowrap;letter-spacing:0.45px;left:0.3px;">Core_0</div></div>
<div style="position:absolute;left:1185.7px;top:69.6px;width:32.4px;height:9.0px;background:rgba(255,255,255,0.88);overflow:hidden;"><div style="position:absolute;top:0.08px;font-size:9px;line-height:9px;color:#333333;white-space:nowrap;letter-spacing:0.45px;left:0.3px;">Core_1</div></div>
<div style="position:absolute;left:1185.7px;top:96px;width:32.4px;height:9px;background:rgba(255,255,255,0.88);overflow:hidden;"><div style="position:absolute;top:0.08px;font-size:9px;line-height:9px;color:#333333;white-space:nowrap;letter-spacing:0.45px;left:0.3px;">Core_3</div></div>
<div style="position:absolute;left:1185.7px;top:120px;width:32.4px;height:9px;background:rgba(255,255,255,0.88);overflow:hidden;"><div style="position:absolute;top:0.08px;font-size:9px;line-height:9px;color:#333333;white-space:nowrap;letter-spacing:0.45px;left:0.3px;">Core_0</div></div>
<div style="position:absolute;left:1185.7px;top:147px;width:32.4px;height:9px;background:rgba(255,255,255,0.88);overflow:hidden;"><div style="position:absolute;top:0.08px;font-size:9px;line-height:9px;color:#333333;white-space:nowrap;letter-spacing:0.45px;left:0.3px;">Core_3</div></div>
<div style="position:absolute;left:1185.7px;top:173.7px;width:32.4px;height:9.0px;background:rgba(255,255,255,0.88);overflow:hidden;"><div style="position:absolute;top:0.08px;font-size:9px;line-height:9px;color:#333333;white-space:nowrap;letter-spacing:0.45px;left:0.3px;">Core_3</div></div>
<div style="position:absolute;left:1185.7px;top:200.7px;width:32.4px;height:9.0px;background:rgba(255,255,255,0.88);overflow:hidden;"><div style="position:absolute;top:0.08px;font-size:9px;line-height:9px;color:#333333;white-space:nowrap;letter-spacing:0.45px;left:0.3px;">Core_3</div></div>
<div style="position:absolute;left:1185.7px;top:225.8px;width:32.4px;height:9.0px;background:rgba(255,255,255,0.88);overflow:hidden;"><div style="position:absolute;top:0.08px;font-size:9px;line-height:9px;color:#333333;white-space:nowrap;letter-spacing:0.45px;left:0.3px;">Core_1</div></div>
<div style="position:absolute;left:1185.7px;top:252.2px;width:32.4px;height:9.0px;background:rgba(255,255,255,0.88);overflow:hidden;"><div style="position:absolute;top:0.08px;font-size:9px;line-height:9px;color:#333333;white-space:nowrap;letter-spacing:0.45px;left:0.3px;">Core_1</div></div>
<div style="position:absolute;left:1185.7px;top:279px;width:32.4px;height:9px;background:rgba(255,255,255,0.88);overflow:hidden;"><div style="position:absolute;top:0.08px;font-size:9px;line-height:9px;color:#333333;white-space:nowrap;letter-spacing:0.45px;left:0.3px;">Core_2</div></div>
<div style="position:absolute;left:1185.7px;top:306px;width:32.4px;height:9px;background:rgba(255,255,255,0.88);overflow:hidden;"><div style="position:absolute;top:0.08px;font-size:9px;line-height:9px;color:#333333;white-space:nowrap;letter-spacing:0.45px;left:0.3px;">Core_0</div></div>
<div style="position:absolute;left:1185.7px;top:333px;width:32.4px;height:9px;background:rgba(255,255,255,0.88);overflow:hidden;"><div style="position:absolute;top:0.08px;font-size:9px;line-height:9px;color:#333333;white-space:nowrap;letter-spacing:0.45px;left:0.3px;">Core_2</div></div>
<div style="position:absolute;left:1185.7px;top:360px;width:32.4px;height:9px;background:rgba(255,255,255,0.88);overflow:hidden;"><div style="position:absolute;top:0.08px;font-size:9px;line-height:9px;color:#333333;white-space:nowrap;letter-spacing:0.45px;left:0.3px;">Core_2</div></div>
<div style="position:absolute;top:383.47px;font-size:9.6px;line-height:9.6px;color:#333333;white-space:nowrap;letter-spacing:0.5px;left:170.5px;width:400px;text-align:right;">4,985,538,249 ns</div>
<div style="position:absolute;left:1159px;top:380px;width:59px;height:14px;overflow:hidden;"><div style="position:absolute;top:3.47px;font-size:9.6px;line-height:9.6px;color:#333333;white-space:nowrap;letter-spacing:0.5px;left:1.5px;">19,417,359,479 ns</div></div>
<div style="position:absolute;left:4px;top:396.2px;width:1214px;height:1.3px;background:#707070;"></div>
<div style="position:absolute;left:371.5px;top:393px;width:1px;height:7px;background:#6a6a6a;"></div>
<div style="position:absolute;top:403.07px;font-size:9.6px;line-height:9.6px;color:#333333;white-space:nowrap;letter-spacing:0.45px;left:172.0px;width:400px;text-align:center;">0s</div>
<div style="position:absolute;left:412.0px;top:393px;width:1px;height:7px;background:#6a6a6a;"></div>
<div style="position:absolute;top:403.07px;font-size:9.6px;line-height:9.6px;color:#333333;white-space:nowrap;letter-spacing:0.45px;left:212.38px;width:400px;text-align:center;">1s</div>
<div style="position:absolute;left:452.5px;top:393px;width:1px;height:7px;background:#6a6a6a;"></div>
<div style="position:absolute;top:403.07px;font-size:9.6px;line-height:9.6px;color:#333333;white-space:nowrap;letter-spacing:0.45px;left:252.76px;width:400px;text-align:center;">2s</div>
<div style="position:absolute;left:492.5px;top:393px;width:1px;height:7px;background:#6a6a6a;"></div>
<div style="position:absolute;top:403.07px;font-size:9.6px;line-height:9.6px;color:#333333;white-space:nowrap;letter-spacing:0.45px;left:293.14px;width:400px;text-align:center;">3s</div>
<div style="position:absolute;left:533.0px;top:393px;width:1px;height:7px;background:#6a6a6a;"></div>
<div style="position:absolute;top:403.07px;font-size:9.6px;line-height:9.6px;color:#333333;white-space:nowrap;letter-spacing:0.45px;left:333.52px;width:400px;text-align:center;">4s</div>
<div style="position:absolute;left:573.5px;top:393px;width:1px;height:7px;background:#6a6a6a;"></div>
<div style="position:absolute;top:403.07px;font-size:9.6px;line-height:9.6px;color:#333333;white-space:nowrap;letter-spacing:0.45px;left:373.9px;width:400px;text-align:center;">5s</div>
<div style="position:absolute;left:614.0px;top:393px;width:1px;height:7px;background:#6a6a6a;"></div>
<div style="position:absolute;top:403.07px;font-size:9.6px;line-height:9.6px;color:#333333;white-space:nowrap;letter-spacing:0.45px;left:414.28px;width:400px;text-align:center;">6s</div>
<div style="position:absolute;left:654.0px;top:393px;width:1px;height:7px;background:#6a6a6a;"></div>
<div style="position:absolute;top:403.07px;font-size:9.6px;line-height:9.6px;color:#333333;white-space:nowrap;letter-spacing:0.45px;left:454.6600000000001px;width:400px;text-align:center;">7s</div>
<div style="position:absolute;left:694.5px;top:393px;width:1px;height:7px;background:#6a6a6a;"></div>
<div style="position:absolute;top:403.07px;font-size:9.6px;line-height:9.6px;color:#333333;white-space:nowrap;letter-spacing:0.45px;left:495.03999999999996px;width:400px;text-align:center;">8s</div>
<div style="position:absolute;left:735.0px;top:393px;width:1px;height:7px;background:#6a6a6a;"></div>
<div style="position:absolute;top:403.07px;font-size:9.6px;line-height:9.6px;color:#333333;white-space:nowrap;letter-spacing:0.45px;left:535.4200000000001px;width:400px;text-align:center;">9s</div>
<div style="position:absolute;left:775.5px;top:393px;width:1px;height:7px;background:#6a6a6a;"></div>
<div style="position:absolute;top:403.07px;font-size:9.6px;line-height:9.6px;color:#333333;white-space:nowrap;letter-spacing:0.45px;left:575.8px;width:400px;text-align:center;">10s</div>
<div style="position:absolute;left:815.5px;top:393px;width:1px;height:7px;background:#6a6a6a;"></div>
<div style="position:absolute;top:403.07px;font-size:9.6px;line-height:9.6px;color:#333333;white-space:nowrap;letter-spacing:0.45px;left:616.1800000000001px;width:400px;text-align:center;">11s</div>
<div style="position:absolute;left:856.0px;top:393px;width:1px;height:7px;background:#6a6a6a;"></div>
<div style="position:absolute;top:403.07px;font-size:9.6px;line-height:9.6px;color:#333333;white-space:nowrap;letter-spacing:0.45px;left:656.5600000000001px;width:400px;text-align:center;">12s</div>
<div style="position:absolute;left:896.5px;top:393px;width:1px;height:7px;background:#6a6a6a;"></div>
<div style="position:absolute;top:403.07px;font-size:9.6px;line-height:9.6px;color:#333333;white-space:nowrap;letter-spacing:0.45px;left:696.94px;width:400px;text-align:center;">13s</div>
<div style="position:absolute;left:937.0px;top:393px;width:1px;height:7px;background:#6a6a6a;"></div>
<div style="position:absolute;top:403.07px;font-size:9.6px;line-height:9.6px;color:#333333;white-space:nowrap;letter-spacing:0.45px;left:737.32px;width:400px;text-align:center;">14s</div>
<div style="position:absolute;left:977.0px;top:393px;width:1px;height:7px;background:#6a6a6a;"></div>
<div style="position:absolute;top:403.07px;font-size:9.6px;line-height:9.6px;color:#333333;white-space:nowrap;letter-spacing:0.45px;left:777.7px;width:400px;text-align:center;">15s</div>
<div style="position:absolute;left:1017.5px;top:393px;width:1px;height:7px;background:#6a6a6a;"></div>
<div style="position:absolute;top:403.07px;font-size:9.6px;line-height:9.6px;color:#333333;white-space:nowrap;letter-spacing:0.45px;left:818.08px;width:400px;text-align:center;">16s</div>
<div style="position:absolute;left:1058.0px;top:393px;width:1px;height:7px;background:#6a6a6a;"></div>
<div style="position:absolute;top:403.07px;font-size:9.6px;line-height:9.6px;color:#333333;white-space:nowrap;letter-spacing:0.45px;left:858.46px;width:400px;text-align:center;">17s</div>
<div style="position:absolute;left:1098.5px;top:393px;width:1px;height:7px;background:#6a6a6a;"></div>
<div style="position:absolute;top:403.07px;font-size:9.6px;line-height:9.6px;color:#333333;white-space:nowrap;letter-spacing:0.45px;left:898.8400000000001px;width:400px;text-align:center;">18s</div>
<div style="position:absolute;left:1138.5px;top:393px;width:1px;height:7px;background:#6a6a6a;"></div>
<div style="position:absolute;top:403.07px;font-size:9.6px;line-height:9.6px;color:#333333;white-space:nowrap;letter-spacing:0.45px;left:939.22px;width:400px;text-align:center;">19s</div>
<div style="position:absolute;left:1179.0px;top:393px;width:1px;height:7px;background:#6a6a6a;"></div>
<div style="position:absolute;top:403.07px;font-size:9.6px;line-height:9.6px;color:#333333;white-space:nowrap;letter-spacing:0.45px;left:979.5999999999999px;width:400px;text-align:center;">20s</div>
<div style="position:absolute;left:1219.5px;top:393px;width:1px;height:7px;background:#6a6a6a;"></div>
<div style="position:absolute;left:1200px;top:400px;width:18px;height:14px;overflow:hidden;"><div style="position:absolute;top:3.07px;font-size:9.6px;line-height:9.6px;color:#333333;white-space:nowrap;letter-spacing:0.45px;left:14px;">21s</div></div>
<div style="position:absolute;left:4px;top:415px;width:1214px;height:15px;background:#f0f0f0;"></div>
<svg style="position:absolute;left:6px;top:417px" width="10" height="11" viewBox="0 0 10 11"><path d="M6.5,2 L3,5.5 L6.5,9" fill="none" stroke="#a8a8a8" stroke-width="1.1"/></svg>
<svg style="position:absolute;left:1206px;top:417px" width="10" height="11" viewBox="0 0 10 11"><path d="M3,2 L6.5,5.5 L3,9" fill="none" stroke="#a8a8a8" stroke-width="1.1"/></svg>
<div style="position:absolute;left:1218px;top:23px;width:15px;height:407px;background:#f0f0f0;"></div>
<div style="position:absolute;left:1219px;top:361px;width:13px;height:12px;background:#cdcdcd;"></div>
<svg style="position:absolute;left:1219px;top:26px" width="13" height="10" viewBox="0 0 13 10"><path d="M3.5,6.5 L6.5,3.5 L9.5,6.5" fill="none" stroke="#404040" stroke-width="1.6"/></svg>
<svg style="position:absolute;left:1219px;top:376px" width="13" height="10" viewBox="0 0 13 10"><path d="M3.5,3.5 L6.5,6.5 L9.5,3.5" fill="none" stroke="#404040" stroke-width="1.6"/></svg>
<div style="position:absolute;left:2px;top:435px;width:1233px;height:234px;border:1px solid #b4b4b4;border-radius:3px 3px 0 0;background:#fff;box-sizing:border-box;"></div>
<div style="position:absolute;left:3px;top:436px;width:1231px;height:18px;background:#f0f0f0;border-radius:3px 3px 0 0;"></div>
<div style="position:absolute;left:149px;top:453px;width:1085px;height:1px;background:#b4b4b4;"></div>
<div style="position:absolute;left:89px;top:453px;width:60px;height:1px;background:#b4b4b4;"></div>
<div style="position:absolute;left:89px;top:436px;width:1px;height:18px;background:#b4b4b4;"></div>
<div style="position:absolute;left:149px;top:436px;width:1px;height:18px;background:#b4b4b4;"></div>
<div style="position:absolute;left:3px;top:453px;width:86px;height:2.5px;background:#f0f0f0;"></div>
<div style="position:absolute;top:440.94px;font-size:10px;line-height:10px;color:#20203a;white-space:nowrap;left:21.4px;"><span style="display:inline-block;transform:scaleX(0.95);transform-origin:left 50%;">Load Chart</span></div>
<div style="position:absolute;top:440.94px;font-size:10px;line-height:10px;color:#20203a;white-space:nowrap;left:109.7px;"><span style="display:inline-block;transform:scaleX(0.86);transform-origin:left 50%;">BTF View</span></div>
<svg width="1239" height="898" style="position:absolute;left:0;top:0"><line x1="375" y1="472.2" x2="1218" y2="472.2" stroke="#c4c4c4" stroke-width="1" stroke-dasharray="3,4"/><rect x="367" y="471.7" width="5" height="1" fill="#6a6a6a"/><line x1="375" y1="512.6" x2="1218" y2="512.6" stroke="#c4c4c4" stroke-width="1" stroke-dasharray="3,4"/><rect x="367" y="512.1" width="5" height="1" fill="#6a6a6a"/><line x1="375" y1="553.1" x2="1218" y2="553.1" stroke="#c4c4c4" stroke-width="1" stroke-dasharray="3,4"/><rect x="367" y="552.6" width="5" height="1" fill="#6a6a6a"/><line x1="375" y1="593.5" x2="1218" y2="593.5" stroke="#c4c4c4" stroke-width="1" stroke-dasharray="3,4"/><rect x="367" y="593.0" width="5" height="1" fill="#6a6a6a"/><rect x="372.20" y="566.37" width="2.26" height="67.63" fill="#62ffff"/><rect x="372.20" y="584.00" width="2.26" height="50.00" fill="#002c78"/><rect x="372.20" y="602.77" width="2.26" height="31.23" fill="#ff8a8a"/><rect x="372.20" y="617.17" width="2.26" height="16.83" fill="#ff0000"/><rect x="375.46" y="587.89" width="2.26" height="46.11" fill="#62ffff"/><rect x="375.46" y="594.52" width="2.26" height="39.48" fill="#002c78"/><rect x="375.46" y="598.40" width="2.26" height="35.60" fill="#ff8a8a"/><rect x="375.46" y="603.91" width="2.26" height="30.09" fill="#ff0000"/><rect x="378.72" y="589.02" width="2.26" height="44.98" fill="#62ffff"/><rect x="378.72" y="592.90" width="2.26" height="41.10" fill="#002c78"/><rect x="378.72" y="618.79" width="2.26" height="15.21" fill="#ff8a8a"/><rect x="378.72" y="621.54" width="2.26" height="12.46" fill="#ff0000"/><rect x="381.98" y="571.06" width="2.26" height="62.94" fill="#62ffff"/><rect x="381.98" y="601.64" width="2.26" height="32.36" fill="#002c78"/><rect x="381.98" y="617.82" width="2.26" height="16.18" fill="#ff8a8a"/><rect x="381.98" y="625.91" width="2.26" height="8.09" fill="#ff0000"/><rect x="385.24" y="555.85" width="2.26" height="78.15" fill="#62ffff"/><rect x="385.24" y="570.25" width="2.26" height="63.75" fill="#002c78"/><rect x="385.24" y="584.49" width="2.26" height="49.51" fill="#ff8a8a"/><rect x="385.24" y="600.02" width="2.26" height="33.98" fill="#ff0000"/><rect x="388.50" y="576.24" width="2.26" height="57.76" fill="#62ffff"/><rect x="388.50" y="578.99" width="2.26" height="55.01" fill="#002c78"/><rect x="388.50" y="586.27" width="2.26" height="47.73" fill="#ff8a8a"/><rect x="388.50" y="618.79" width="2.26" height="15.21" fill="#ff0000"/><rect x="391.76" y="589.50" width="2.26" height="44.50" fill="#62ffff"/><rect x="391.76" y="592.90" width="2.26" height="41.10" fill="#002c78"/><rect x="391.76" y="606.66" width="2.26" height="27.34" fill="#ff8a8a"/><rect x="391.76" y="623.16" width="2.26" height="10.84" fill="#ff0000"/><rect x="395.02" y="602.77" width="2.26" height="31.23" fill="#62ffff"/><rect x="395.02" y="609.89" width="2.26" height="24.11" fill="#002c78"/><rect x="395.02" y="621.54" width="2.26" height="12.46" fill="#ff8a8a"/><rect x="395.02" y="626.56" width="2.26" height="7.44" fill="#ff0000"/><rect x="398.28" y="596.14" width="2.26" height="37.86" fill="#62ffff"/><rect x="398.28" y="605.52" width="2.26" height="28.48" fill="#002c78"/><rect x="398.28" y="615.39" width="2.26" height="18.61" fill="#ff8a8a"/><rect x="398.28" y="626.56" width="2.26" height="7.44" fill="#ff0000"/><rect x="401.54" y="617.66" width="2.26" height="16.34" fill="#62ffff"/><rect x="401.54" y="622.03" width="2.26" height="11.97" fill="#002c78"/><rect x="401.54" y="625.91" width="2.26" height="8.09" fill="#ff8a8a"/><rect x="401.54" y="629.79" width="2.26" height="4.21" fill="#ff0000"/><rect x="404.80" y="617.66" width="2.26" height="16.34" fill="#62ffff"/><rect x="404.80" y="622.67" width="2.26" height="11.33" fill="#002c78"/><rect x="404.80" y="625.91" width="2.26" height="8.09" fill="#ff8a8a"/><rect x="404.80" y="628.18" width="2.26" height="5.82" fill="#ff0000"/><rect x="408.06" y="601.64" width="2.26" height="32.36" fill="#62ffff"/><rect x="408.06" y="608.27" width="2.26" height="25.73" fill="#002c78"/><rect x="408.06" y="617.17" width="2.26" height="16.83" fill="#ff8a8a"/><rect x="408.06" y="622.67" width="2.26" height="11.33" fill="#ff0000"/><rect x="411.32" y="622.03" width="2.26" height="11.97" fill="#62ffff"/><rect x="411.32" y="623.81" width="2.26" height="10.19" fill="#002c78"/><rect x="411.32" y="625.91" width="2.26" height="8.09" fill="#ff8a8a"/><rect x="411.32" y="629.31" width="2.26" height="4.69" fill="#ff0000"/><rect x="414.58" y="593.39" width="2.26" height="40.61" fill="#62ffff"/><rect x="414.58" y="603.91" width="2.26" height="30.09" fill="#002c78"/><rect x="414.58" y="612.64" width="2.26" height="21.36" fill="#ff8a8a"/><rect x="414.58" y="622.67" width="2.26" height="11.33" fill="#ff0000"/><rect x="417.84" y="620.41" width="2.26" height="13.59" fill="#62ffff"/><rect x="417.84" y="624.29" width="2.26" height="9.71" fill="#002c78"/><rect x="417.84" y="626.56" width="2.26" height="7.44" fill="#ff8a8a"/><rect x="417.84" y="628.18" width="2.26" height="5.82" fill="#ff0000"/><rect x="421.10" y="596.14" width="2.26" height="37.86" fill="#62ffff"/><rect x="421.10" y="603.91" width="2.26" height="30.09" fill="#002c78"/><rect x="421.10" y="612.16" width="2.26" height="21.84" fill="#ff8a8a"/><rect x="421.10" y="621.54" width="2.26" height="12.46" fill="#ff0000"/><rect x="424.36" y="616.53" width="2.26" height="17.47" fill="#62ffff"/><rect x="424.36" y="618.79" width="2.26" height="15.21" fill="#002c78"/><rect x="424.36" y="624.29" width="2.26" height="9.71" fill="#ff8a8a"/><rect x="424.36" y="627.04" width="2.26" height="6.96" fill="#ff0000"/><rect x="427.62" y="610.54" width="2.26" height="23.46" fill="#62ffff"/><rect x="427.62" y="616.53" width="2.26" height="17.47" fill="#002c78"/><rect x="427.62" y="623.81" width="2.26" height="10.19" fill="#ff8a8a"/><rect x="427.62" y="625.91" width="2.26" height="8.09" fill="#ff0000"/><rect x="430.88" y="608.76" width="2.26" height="25.24" fill="#62ffff"/><rect x="430.88" y="615.39" width="2.26" height="18.61" fill="#002c78"/><rect x="430.88" y="623.81" width="2.26" height="10.19" fill="#ff8a8a"/><rect x="430.88" y="627.53" width="2.26" height="6.47" fill="#ff0000"/><rect x="434.14" y="615.39" width="2.26" height="18.61" fill="#62ffff"/><rect x="434.14" y="622.03" width="2.26" height="11.97" fill="#002c78"/><rect x="434.14" y="627.53" width="2.26" height="6.47" fill="#ff8a8a"/><rect x="434.14" y="630.93" width="2.26" height="3.07" fill="#ff0000"/><rect x="437.40" y="617.17" width="2.26" height="16.83" fill="#62ffff"/><rect x="437.40" y="621.06" width="2.26" height="12.94" fill="#002c78"/><rect x="437.40" y="625.42" width="2.26" height="8.58" fill="#ff8a8a"/><rect x="437.40" y="625.91" width="2.26" height="8.09" fill="#ff0000"/><rect x="440.66" y="622.67" width="2.26" height="11.33" fill="#62ffff"/><rect x="440.66" y="622.67" width="2.26" height="11.33" fill="#002c78"/><rect x="440.66" y="627.53" width="2.26" height="6.47" fill="#ff8a8a"/><rect x="440.66" y="629.79" width="2.26" height="4.21" fill="#ff0000"/><rect x="443.92" y="608.76" width="2.26" height="25.24" fill="#62ffff"/><rect x="443.92" y="613.77" width="2.26" height="20.23" fill="#002c78"/><rect x="443.92" y="618.79" width="2.26" height="15.21" fill="#ff8a8a"/><rect x="443.92" y="624.29" width="2.26" height="9.71" fill="#ff0000"/><rect x="447.18" y="622.03" width="2.26" height="11.97" fill="#62ffff"/><rect x="447.18" y="625.91" width="2.26" height="8.09" fill="#002c78"/><rect x="447.18" y="628.66" width="2.26" height="5.34" fill="#ff8a8a"/><rect x="447.18" y="630.28" width="2.26" height="3.72" fill="#ff0000"/><rect x="450.44" y="618.79" width="2.26" height="15.21" fill="#62ffff"/><rect x="450.44" y="622.67" width="2.26" height="11.33" fill="#002c78"/><rect x="450.44" y="627.04" width="2.26" height="6.96" fill="#ff8a8a"/><rect x="450.44" y="627.53" width="2.26" height="6.47" fill="#ff0000"/><rect x="453.70" y="601.15" width="2.26" height="32.85" fill="#62ffff"/><rect x="453.70" y="610.54" width="2.26" height="23.46" fill="#002c78"/><rect x="453.70" y="621.54" width="2.26" height="12.46" fill="#ff8a8a"/><rect x="453.70" y="629.31" width="2.26" height="4.69" fill="#ff0000"/><rect x="456.96" y="622.03" width="2.26" height="11.97" fill="#62ffff"/><rect x="456.96" y="624.29" width="2.26" height="9.71" fill="#002c78"/><rect x="456.96" y="630.28" width="2.26" height="3.72" fill="#ff8a8a"/><rect x="456.96" y="631.41" width="2.26" height="2.59" fill="#ff0000"/><rect x="460.22" y="618.14" width="2.26" height="15.86" fill="#62ffff"/><rect x="460.22" y="622.03" width="2.26" height="11.97" fill="#002c78"/><rect x="460.22" y="625.91" width="2.26" height="8.09" fill="#ff8a8a"/><rect x="460.22" y="628.66" width="2.26" height="5.34" fill="#ff0000"/><rect x="463.48" y="621.54" width="2.26" height="12.46" fill="#62ffff"/><rect x="463.48" y="625.91" width="2.26" height="8.09" fill="#002c78"/><rect x="463.48" y="628.66" width="2.26" height="5.34" fill="#ff8a8a"/><rect x="463.48" y="632.06" width="2.26" height="1.94" fill="#ff0000"/><rect x="466.74" y="618.14" width="2.26" height="15.86" fill="#62ffff"/><rect x="466.74" y="622.03" width="2.26" height="11.97" fill="#002c78"/><rect x="466.74" y="625.91" width="2.26" height="8.09" fill="#ff8a8a"/><rect x="466.74" y="627.53" width="2.26" height="6.47" fill="#ff0000"/><rect x="470.00" y="616.36" width="2.26" height="17.64" fill="#62ffff"/><rect x="470.00" y="622.03" width="2.26" height="11.97" fill="#002c78"/><rect x="470.00" y="626.07" width="2.26" height="7.93" fill="#ff8a8a"/><rect x="470.00" y="628.66" width="2.26" height="5.34" fill="#ff0000"/><rect x="473.26" y="615.72" width="2.26" height="18.28" fill="#62ffff"/><rect x="473.26" y="620.73" width="2.26" height="13.27" fill="#002c78"/><rect x="473.26" y="626.07" width="2.26" height="7.93" fill="#ff8a8a"/><rect x="473.26" y="629.96" width="2.26" height="4.04" fill="#ff0000"/><rect x="476.52" y="623.00" width="2.26" height="11.00" fill="#62ffff"/><rect x="476.52" y="625.59" width="2.26" height="8.41" fill="#002c78"/><rect x="476.52" y="628.18" width="2.26" height="5.82" fill="#ff8a8a"/><rect x="476.52" y="629.96" width="2.26" height="4.04" fill="#ff0000"/><rect x="479.78" y="620.73" width="2.26" height="13.27" fill="#62ffff"/><rect x="479.78" y="623.00" width="2.26" height="11.00" fill="#002c78"/><rect x="479.78" y="626.40" width="2.26" height="7.60" fill="#ff8a8a"/><rect x="479.78" y="628.34" width="2.26" height="5.66" fill="#ff0000"/><rect x="483.04" y="623.64" width="2.26" height="10.36" fill="#62ffff"/><rect x="483.04" y="626.07" width="2.26" height="7.93" fill="#002c78"/><rect x="483.04" y="628.66" width="2.26" height="5.34" fill="#ff8a8a"/><rect x="483.04" y="630.44" width="2.26" height="3.56" fill="#ff0000"/><rect x="486.30" y="600.18" width="2.26" height="33.82" fill="#62ffff"/><rect x="486.30" y="610.05" width="2.26" height="23.95" fill="#002c78"/><rect x="486.30" y="619.76" width="2.26" height="14.24" fill="#ff8a8a"/><rect x="486.30" y="624.29" width="2.26" height="9.71" fill="#ff0000"/><rect x="489.56" y="620.73" width="2.26" height="13.27" fill="#62ffff"/><rect x="489.56" y="623.64" width="2.26" height="10.36" fill="#002c78"/><rect x="489.56" y="627.20" width="2.26" height="6.80" fill="#ff8a8a"/><rect x="489.56" y="629.96" width="2.26" height="4.04" fill="#ff0000"/><rect x="492.82" y="612.97" width="2.26" height="21.03" fill="#62ffff"/><rect x="492.82" y="617.82" width="2.26" height="16.18" fill="#002c78"/><rect x="492.82" y="623.00" width="2.26" height="11.00" fill="#ff8a8a"/><rect x="492.82" y="627.53" width="2.26" height="6.47" fill="#ff0000"/><rect x="496.08" y="606.82" width="2.26" height="27.18" fill="#62ffff"/><rect x="496.08" y="615.72" width="2.26" height="18.28" fill="#002c78"/><rect x="496.08" y="621.22" width="2.26" height="12.78" fill="#ff8a8a"/><rect x="496.08" y="627.53" width="2.26" height="6.47" fill="#ff0000"/><rect x="499.34" y="621.87" width="2.26" height="12.13" fill="#62ffff"/><rect x="499.34" y="626.07" width="2.26" height="7.93" fill="#002c78"/><rect x="499.34" y="628.18" width="2.26" height="5.82" fill="#ff8a8a"/><rect x="499.34" y="629.96" width="2.26" height="4.04" fill="#ff0000"/><rect x="502.60" y="611.51" width="2.26" height="22.49" fill="#62ffff"/><rect x="502.60" y="616.53" width="2.26" height="17.47" fill="#002c78"/><rect x="502.60" y="620.73" width="2.26" height="13.27" fill="#ff8a8a"/><rect x="502.60" y="627.53" width="2.26" height="6.47" fill="#ff0000"/><rect x="505.86" y="617.17" width="2.26" height="16.83" fill="#62ffff"/><rect x="505.86" y="621.06" width="2.26" height="12.94" fill="#002c78"/><rect x="505.86" y="625.59" width="2.26" height="8.41" fill="#ff8a8a"/><rect x="505.86" y="629.15" width="2.26" height="4.85" fill="#ff0000"/><rect x="509.12" y="623.00" width="2.26" height="11.00" fill="#62ffff"/><rect x="509.12" y="626.07" width="2.26" height="7.93" fill="#002c78"/><rect x="509.12" y="628.18" width="2.26" height="5.82" fill="#ff8a8a"/><rect x="509.12" y="629.63" width="2.26" height="4.37" fill="#ff0000"/><rect x="512.38" y="613.61" width="2.26" height="20.39" fill="#62ffff"/><rect x="512.38" y="618.63" width="2.26" height="15.37" fill="#002c78"/><rect x="512.38" y="623.00" width="2.26" height="11.00" fill="#ff8a8a"/><rect x="512.38" y="626.07" width="2.26" height="7.93" fill="#ff0000"/><rect x="515.64" y="586.27" width="2.26" height="47.73" fill="#62ffff"/><rect x="515.64" y="595.98" width="2.26" height="38.02" fill="#002c78"/><rect x="515.64" y="601.64" width="2.26" height="32.36" fill="#ff8a8a"/><rect x="515.64" y="607.95" width="2.26" height="26.05" fill="#ff0000"/><rect x="518.90" y="607.46" width="2.26" height="26.54" fill="#62ffff"/><rect x="518.90" y="612.97" width="2.26" height="21.03" fill="#002c78"/><rect x="518.90" y="616.69" width="2.26" height="17.31" fill="#ff8a8a"/><rect x="518.90" y="622.03" width="2.26" height="11.97" fill="#ff0000"/><rect x="522.16" y="608.27" width="2.26" height="25.73" fill="#62ffff"/><rect x="522.16" y="620.41" width="2.26" height="13.59" fill="#002c78"/><rect x="522.16" y="625.59" width="2.26" height="8.41" fill="#ff8a8a"/><rect x="522.16" y="629.63" width="2.26" height="4.37" fill="#ff0000"/><rect x="525.42" y="622.03" width="2.26" height="11.97" fill="#62ffff"/><rect x="525.42" y="624.78" width="2.26" height="9.22" fill="#002c78"/><rect x="525.42" y="627.37" width="2.26" height="6.63" fill="#ff8a8a"/><rect x="525.42" y="630.93" width="2.26" height="3.07" fill="#ff0000"/><rect x="528.68" y="613.13" width="2.26" height="20.87" fill="#62ffff"/><rect x="528.68" y="621.22" width="2.26" height="12.78" fill="#002c78"/><rect x="528.68" y="626.07" width="2.26" height="7.93" fill="#ff8a8a"/><rect x="528.68" y="629.96" width="2.26" height="4.04" fill="#ff0000"/><rect x="531.94" y="623.64" width="2.26" height="10.36" fill="#62ffff"/><rect x="531.94" y="626.88" width="2.26" height="7.12" fill="#002c78"/><rect x="531.94" y="629.96" width="2.26" height="4.04" fill="#ff8a8a"/><rect x="531.94" y="631.41" width="2.26" height="2.59" fill="#ff0000"/><rect x="535.20" y="594.68" width="2.26" height="39.32" fill="#62ffff"/><rect x="535.20" y="605.68" width="2.26" height="28.32" fill="#002c78"/><rect x="535.20" y="615.72" width="2.26" height="18.28" fill="#ff8a8a"/><rect x="535.20" y="625.10" width="2.26" height="8.90" fill="#ff0000"/><rect x="538.46" y="620.73" width="2.26" height="13.27" fill="#62ffff"/><rect x="538.46" y="623.64" width="2.26" height="10.36" fill="#002c78"/><rect x="538.46" y="626.88" width="2.26" height="7.12" fill="#ff8a8a"/><rect x="538.46" y="629.63" width="2.26" height="4.37" fill="#ff0000"/><rect x="541.72" y="617.17" width="2.26" height="16.83" fill="#62ffff"/><rect x="541.72" y="621.22" width="2.26" height="12.78" fill="#002c78"/><rect x="541.72" y="623.64" width="2.26" height="10.36" fill="#ff8a8a"/><rect x="541.72" y="629.96" width="2.26" height="4.04" fill="#ff0000"/><rect x="544.98" y="591.93" width="2.26" height="42.07" fill="#62ffff"/><rect x="544.98" y="607.95" width="2.26" height="26.05" fill="#002c78"/><rect x="544.98" y="615.72" width="2.26" height="18.28" fill="#ff8a8a"/><rect x="544.98" y="625.10" width="2.26" height="8.90" fill="#ff0000"/><rect x="548.24" y="623.00" width="2.26" height="11.00" fill="#62ffff"/><rect x="548.24" y="624.78" width="2.26" height="9.22" fill="#002c78"/><rect x="548.24" y="627.85" width="2.26" height="6.15" fill="#ff8a8a"/><rect x="548.24" y="629.96" width="2.26" height="4.04" fill="#ff0000"/><rect x="551.50" y="619.76" width="2.26" height="14.24" fill="#62ffff"/><rect x="551.50" y="622.03" width="2.26" height="11.97" fill="#002c78"/><rect x="551.50" y="627.37" width="2.26" height="6.63" fill="#ff8a8a"/><rect x="551.50" y="629.96" width="2.26" height="4.04" fill="#ff0000"/><rect x="554.76" y="623.64" width="2.26" height="10.36" fill="#62ffff"/><rect x="554.76" y="629.15" width="2.26" height="4.85" fill="#002c78"/><rect x="554.76" y="629.96" width="2.26" height="4.04" fill="#ff8a8a"/><rect x="554.76" y="630.93" width="2.26" height="3.07" fill="#ff0000"/><rect x="558.02" y="615.72" width="2.26" height="18.28" fill="#62ffff"/><rect x="558.02" y="619.60" width="2.26" height="14.40" fill="#002c78"/><rect x="558.02" y="623.64" width="2.26" height="10.36" fill="#ff8a8a"/><rect x="558.02" y="627.53" width="2.26" height="6.47" fill="#ff0000"/><rect x="561.28" y="623.64" width="2.26" height="10.36" fill="#62ffff"/><rect x="561.28" y="628.34" width="2.26" height="5.66" fill="#002c78"/><rect x="561.28" y="629.96" width="2.26" height="4.04" fill="#ff8a8a"/><rect x="561.28" y="630.93" width="2.26" height="3.07" fill="#ff0000"/><rect x="564.54" y="622.03" width="2.26" height="11.97" fill="#62ffff"/><rect x="564.54" y="625.59" width="2.26" height="8.41" fill="#002c78"/><rect x="564.54" y="627.20" width="2.26" height="6.80" fill="#ff8a8a"/><rect x="564.54" y="629.96" width="2.26" height="4.04" fill="#ff0000"/><rect x="567.80" y="597.92" width="2.26" height="36.08" fill="#62ffff"/><rect x="567.80" y="610.05" width="2.26" height="23.95" fill="#002c78"/><rect x="567.80" y="618.14" width="2.26" height="15.86" fill="#ff8a8a"/><rect x="567.80" y="626.72" width="2.26" height="7.28" fill="#ff0000"/><rect x="571.06" y="612.32" width="2.26" height="21.68" fill="#62ffff"/><rect x="571.06" y="618.95" width="2.26" height="15.05" fill="#002c78"/><rect x="571.06" y="624.78" width="2.26" height="9.22" fill="#ff8a8a"/><rect x="571.06" y="629.96" width="2.26" height="4.04" fill="#ff0000"/><rect x="574.32" y="555.09" width="2.26" height="78.91" fill="#62ffff"/><rect x="574.32" y="558.61" width="2.26" height="75.39" fill="#002c78"/><rect x="574.32" y="592.58" width="2.26" height="41.42" fill="#ff8a8a"/><rect x="574.32" y="601.64" width="2.26" height="32.36" fill="#ff0000"/><rect x="577.58" y="543.37" width="2.26" height="90.63" fill="#62ffff"/><rect x="577.58" y="546.30" width="2.26" height="87.70" fill="#002c78"/><rect x="577.58" y="586.75" width="2.26" height="47.25" fill="#ff8a8a"/><rect x="577.58" y="593.55" width="2.26" height="40.45" fill="#ff0000"/><rect x="580.84" y="538.91" width="2.26" height="95.09" fill="#62ffff"/><rect x="580.84" y="542.20" width="2.26" height="91.80" fill="#002c78"/><rect x="580.84" y="582.65" width="2.26" height="51.35" fill="#ff8a8a"/><rect x="580.84" y="593.55" width="2.26" height="40.45" fill="#ff0000"/><rect x="584.10" y="545.71" width="2.26" height="88.29" fill="#62ffff"/><rect x="584.10" y="546.89" width="2.26" height="87.11" fill="#002c78"/><rect x="584.10" y="587.92" width="2.26" height="46.08" fill="#ff8a8a"/><rect x="584.10" y="593.55" width="2.26" height="40.45" fill="#ff0000"/><rect x="587.36" y="535.75" width="2.26" height="98.25" fill="#62ffff"/><rect x="587.36" y="541.26" width="2.26" height="92.74" fill="#002c78"/><rect x="587.36" y="582.06" width="2.26" height="51.94" fill="#ff8a8a"/><rect x="587.36" y="593.55" width="2.26" height="40.45" fill="#ff0000"/><rect x="590.62" y="543.60" width="2.26" height="90.40" fill="#62ffff"/><rect x="590.62" y="546.89" width="2.26" height="87.11" fill="#002c78"/><rect x="590.62" y="587.92" width="2.26" height="46.08" fill="#ff8a8a"/><rect x="590.62" y="593.55" width="2.26" height="40.45" fill="#ff0000"/><rect x="593.88" y="541.61" width="2.26" height="92.39" fill="#62ffff"/><rect x="593.88" y="544.54" width="2.26" height="89.46" fill="#002c78"/><rect x="593.88" y="585.58" width="2.26" height="48.42" fill="#ff8a8a"/><rect x="593.88" y="593.55" width="2.26" height="40.45" fill="#ff0000"/><rect x="597.14" y="540.44" width="2.26" height="93.56" fill="#62ffff"/><rect x="597.14" y="544.54" width="2.26" height="89.46" fill="#002c78"/><rect x="597.14" y="585.58" width="2.26" height="48.42" fill="#ff8a8a"/><rect x="597.14" y="593.55" width="2.26" height="40.45" fill="#ff0000"/><rect x="600.40" y="542.20" width="2.26" height="91.80" fill="#62ffff"/><rect x="600.40" y="545.48" width="2.26" height="88.52" fill="#002c78"/><rect x="600.40" y="586.16" width="2.26" height="47.84" fill="#ff8a8a"/><rect x="600.40" y="593.55" width="2.26" height="40.45" fill="#ff0000"/><rect x="603.66" y="545.13" width="2.26" height="88.87" fill="#62ffff"/><rect x="603.66" y="547.82" width="2.26" height="86.18" fill="#002c78"/><rect x="603.66" y="588.51" width="2.26" height="45.49" fill="#ff8a8a"/><rect x="603.66" y="593.55" width="2.26" height="40.45" fill="#ff0000"/><rect x="606.92" y="535.75" width="2.26" height="98.25" fill="#62ffff"/><rect x="606.92" y="539.62" width="2.26" height="94.38" fill="#002c78"/><rect x="606.92" y="580.65" width="2.26" height="53.35" fill="#ff8a8a"/><rect x="606.92" y="593.55" width="2.26" height="40.45" fill="#ff0000"/><rect x="610.18" y="538.91" width="2.26" height="95.09" fill="#62ffff"/><rect x="610.18" y="543.37" width="2.26" height="90.63" fill="#002c78"/><rect x="610.18" y="584.40" width="2.26" height="49.60" fill="#ff8a8a"/><rect x="610.18" y="593.55" width="2.26" height="40.45" fill="#ff0000"/><rect x="613.44" y="543.95" width="2.26" height="90.05" fill="#62ffff"/><rect x="613.44" y="546.89" width="2.26" height="87.11" fill="#002c78"/><rect x="613.44" y="587.92" width="2.26" height="46.08" fill="#ff8a8a"/><rect x="613.44" y="593.55" width="2.26" height="40.45" fill="#ff0000"/><rect x="616.70" y="542.20" width="2.26" height="91.80" fill="#62ffff"/><rect x="616.70" y="545.48" width="2.26" height="88.52" fill="#002c78"/><rect x="616.70" y="586.16" width="2.26" height="47.84" fill="#ff8a8a"/><rect x="616.70" y="593.55" width="2.26" height="40.45" fill="#ff0000"/><rect x="619.96" y="545.13" width="2.26" height="88.87" fill="#62ffff"/><rect x="619.96" y="548.06" width="2.26" height="85.94" fill="#002c78"/><rect x="619.96" y="588.51" width="2.26" height="45.49" fill="#ff8a8a"/><rect x="619.96" y="593.55" width="2.26" height="40.45" fill="#ff0000"/><rect x="623.22" y="539.85" width="2.26" height="94.15" fill="#62ffff"/><rect x="623.22" y="542.78" width="2.26" height="91.22" fill="#002c78"/><rect x="623.22" y="583.47" width="2.26" height="50.53" fill="#ff8a8a"/><rect x="623.22" y="593.55" width="2.26" height="40.45" fill="#ff0000"/><rect x="626.48" y="535.75" width="2.26" height="98.25" fill="#62ffff"/><rect x="626.48" y="544.54" width="2.26" height="89.46" fill="#002c78"/><rect x="626.48" y="585.58" width="2.26" height="48.42" fill="#ff8a8a"/><rect x="626.48" y="593.55" width="2.26" height="40.45" fill="#ff0000"/><rect x="629.74" y="543.95" width="2.26" height="90.05" fill="#62ffff"/><rect x="629.74" y="546.89" width="2.26" height="87.11" fill="#002c78"/><rect x="629.74" y="587.92" width="2.26" height="46.08" fill="#ff8a8a"/><rect x="629.74" y="593.55" width="2.26" height="40.45" fill="#ff0000"/><rect x="633.00" y="538.09" width="2.26" height="95.91" fill="#62ffff"/><rect x="633.00" y="542.20" width="2.26" height="91.80" fill="#002c78"/><rect x="633.00" y="582.65" width="2.26" height="51.35" fill="#ff8a8a"/><rect x="633.00" y="593.55" width="2.26" height="40.45" fill="#ff0000"/><rect x="636.26" y="537.51" width="2.26" height="96.49" fill="#62ffff"/><rect x="636.26" y="542.78" width="2.26" height="91.22" fill="#002c78"/><rect x="636.26" y="583.47" width="2.26" height="50.53" fill="#ff8a8a"/><rect x="636.26" y="593.55" width="2.26" height="40.45" fill="#ff0000"/><rect x="639.52" y="542.20" width="2.26" height="91.80" fill="#62ffff"/><rect x="639.52" y="546.30" width="2.26" height="87.70" fill="#002c78"/><rect x="639.52" y="587.34" width="2.26" height="46.66" fill="#ff8a8a"/><rect x="639.52" y="593.55" width="2.26" height="40.45" fill="#ff0000"/><rect x="642.78" y="543.37" width="2.26" height="90.63" fill="#62ffff"/><rect x="642.78" y="546.89" width="2.26" height="87.11" fill="#002c78"/><rect x="642.78" y="587.34" width="2.26" height="46.66" fill="#ff8a8a"/><rect x="642.78" y="593.55" width="2.26" height="40.45" fill="#ff0000"/><rect x="646.04" y="544.54" width="2.26" height="89.46" fill="#62ffff"/><rect x="646.04" y="546.89" width="2.26" height="87.11" fill="#002c78"/><rect x="646.04" y="587.92" width="2.26" height="46.08" fill="#ff8a8a"/><rect x="646.04" y="593.55" width="2.26" height="40.45" fill="#ff0000"/><rect x="649.30" y="542.20" width="2.26" height="91.80" fill="#62ffff"/><rect x="649.30" y="546.30" width="2.26" height="87.70" fill="#002c78"/><rect x="649.30" y="587.34" width="2.26" height="46.66" fill="#ff8a8a"/><rect x="649.30" y="593.55" width="2.26" height="40.45" fill="#ff0000"/><rect x="652.56" y="526.02" width="2.26" height="107.98" fill="#62ffff"/><rect x="652.56" y="536.33" width="2.26" height="97.67" fill="#002c78"/><rect x="652.56" y="577.37" width="2.26" height="56.63" fill="#ff8a8a"/><rect x="652.56" y="593.55" width="2.26" height="40.45" fill="#ff0000"/><rect x="655.82" y="535.75" width="2.26" height="98.25" fill="#62ffff"/><rect x="655.82" y="541.26" width="2.26" height="92.74" fill="#002c78"/><rect x="655.82" y="582.06" width="2.26" height="51.94" fill="#ff8a8a"/><rect x="655.82" y="593.55" width="2.26" height="40.45" fill="#ff0000"/><rect x="659.08" y="542.20" width="2.26" height="91.80" fill="#62ffff"/><rect x="659.08" y="546.89" width="2.26" height="87.11" fill="#002c78"/><rect x="659.08" y="587.92" width="2.26" height="46.08" fill="#ff8a8a"/><rect x="659.08" y="593.55" width="2.26" height="40.45" fill="#ff0000"/><rect x="662.34" y="535.16" width="2.26" height="98.84" fill="#62ffff"/><rect x="662.34" y="541.26" width="2.26" height="92.74" fill="#002c78"/><rect x="662.34" y="582.06" width="2.26" height="51.94" fill="#ff8a8a"/><rect x="662.34" y="593.55" width="2.26" height="40.45" fill="#ff0000"/><rect x="665.60" y="519.33" width="2.26" height="114.67" fill="#62ffff"/><rect x="665.60" y="542.78" width="2.26" height="91.22" fill="#002c78"/><rect x="665.60" y="583.47" width="2.26" height="50.53" fill="#ff8a8a"/><rect x="665.60" y="593.55" width="2.26" height="40.45" fill="#ff0000"/><rect x="668.86" y="507.61" width="2.26" height="126.39" fill="#62ffff"/><rect x="668.86" y="542.20" width="2.26" height="91.80" fill="#002c78"/><rect x="668.86" y="582.65" width="2.26" height="51.35" fill="#ff8a8a"/><rect x="668.86" y="593.55" width="2.26" height="40.45" fill="#ff0000"/><rect x="672.12" y="502.10" width="2.26" height="131.90" fill="#62ffff"/><rect x="672.12" y="542.20" width="2.26" height="91.80" fill="#002c78"/><rect x="672.12" y="582.65" width="2.26" height="51.35" fill="#ff8a8a"/><rect x="672.12" y="593.55" width="2.26" height="40.45" fill="#ff0000"/><rect x="675.38" y="543.37" width="2.26" height="90.63" fill="#62ffff"/><rect x="675.38" y="546.30" width="2.26" height="87.70" fill="#002c78"/><rect x="675.38" y="587.34" width="2.26" height="46.66" fill="#ff8a8a"/><rect x="675.38" y="593.55" width="2.26" height="40.45" fill="#ff0000"/><rect x="678.64" y="534.58" width="2.26" height="99.42" fill="#62ffff"/><rect x="678.64" y="538.09" width="2.26" height="95.91" fill="#002c78"/><rect x="678.64" y="578.78" width="2.26" height="55.22" fill="#ff8a8a"/><rect x="678.64" y="593.55" width="2.26" height="40.45" fill="#ff0000"/><rect x="681.90" y="544.31" width="2.26" height="89.69" fill="#62ffff"/><rect x="681.90" y="544.31" width="2.26" height="89.69" fill="#002c78"/><rect x="681.90" y="585.34" width="2.26" height="48.66" fill="#ff8a8a"/><rect x="681.90" y="593.55" width="2.26" height="40.45" fill="#ff0000"/><rect x="685.16" y="544.31" width="2.26" height="89.69" fill="#62ffff"/><rect x="685.16" y="544.54" width="2.26" height="89.46" fill="#002c78"/><rect x="685.16" y="585.34" width="2.26" height="48.66" fill="#ff8a8a"/><rect x="685.16" y="593.55" width="2.26" height="40.45" fill="#ff0000"/><rect x="688.42" y="545.13" width="2.26" height="88.87" fill="#62ffff"/><rect x="688.42" y="545.48" width="2.26" height="88.52" fill="#002c78"/><rect x="688.42" y="586.16" width="2.26" height="47.84" fill="#ff8a8a"/><rect x="688.42" y="593.55" width="2.26" height="40.45" fill="#ff0000"/><rect x="691.68" y="538.09" width="2.26" height="95.91" fill="#62ffff"/><rect x="691.68" y="542.20" width="2.26" height="91.80" fill="#002c78"/><rect x="691.68" y="582.65" width="2.26" height="51.35" fill="#ff8a8a"/><rect x="691.68" y="593.55" width="2.26" height="40.45" fill="#ff0000"/><rect x="694.94" y="531.64" width="2.26" height="102.36" fill="#62ffff"/><rect x="694.94" y="541.02" width="2.26" height="92.98" fill="#002c78"/><rect x="694.94" y="582.06" width="2.26" height="51.94" fill="#ff8a8a"/><rect x="694.94" y="593.55" width="2.26" height="40.45" fill="#ff0000"/><rect x="698.20" y="543.95" width="2.26" height="90.05" fill="#62ffff"/><rect x="698.20" y="548.06" width="2.26" height="85.94" fill="#002c78"/><rect x="698.20" y="588.51" width="2.26" height="45.49" fill="#ff8a8a"/><rect x="698.20" y="593.55" width="2.26" height="40.45" fill="#ff0000"/><rect x="701.46" y="543.95" width="2.26" height="90.05" fill="#62ffff"/><rect x="701.46" y="546.89" width="2.26" height="87.11" fill="#002c78"/><rect x="701.46" y="587.92" width="2.26" height="46.08" fill="#ff8a8a"/><rect x="701.46" y="593.55" width="2.26" height="40.45" fill="#ff0000"/><rect x="704.72" y="538.68" width="2.26" height="95.32" fill="#62ffff"/><rect x="704.72" y="542.20" width="2.26" height="91.80" fill="#002c78"/><rect x="704.72" y="582.65" width="2.26" height="51.35" fill="#ff8a8a"/><rect x="704.72" y="593.55" width="2.26" height="40.45" fill="#ff0000"/><rect x="707.98" y="538.68" width="2.26" height="95.32" fill="#62ffff"/><rect x="707.98" y="544.54" width="2.26" height="89.46" fill="#002c78"/><rect x="707.98" y="585.58" width="2.26" height="48.42" fill="#ff8a8a"/><rect x="707.98" y="593.55" width="2.26" height="40.45" fill="#ff0000"/><rect x="711.24" y="542.20" width="2.26" height="91.80" fill="#62ffff"/><rect x="711.24" y="546.30" width="2.26" height="87.70" fill="#002c78"/><rect x="711.24" y="586.75" width="2.26" height="47.25" fill="#ff8a8a"/><rect x="711.24" y="593.55" width="2.26" height="40.45" fill="#ff0000"/><rect x="714.50" y="541.61" width="2.26" height="92.39" fill="#62ffff"/><rect x="714.50" y="545.13" width="2.26" height="88.87" fill="#002c78"/><rect x="714.50" y="586.16" width="2.26" height="47.84" fill="#ff8a8a"/><rect x="714.50" y="593.55" width="2.26" height="40.45" fill="#ff0000"/><rect x="717.76" y="542.78" width="2.26" height="91.22" fill="#62ffff"/><rect x="717.76" y="546.89" width="2.26" height="87.11" fill="#002c78"/><rect x="717.76" y="587.92" width="2.26" height="46.08" fill="#ff8a8a"/><rect x="717.76" y="593.55" width="2.26" height="40.45" fill="#ff0000"/><rect x="721.02" y="531.64" width="2.26" height="102.36" fill="#62ffff"/><rect x="721.02" y="538.09" width="2.26" height="95.91" fill="#002c78"/><rect x="721.02" y="578.78" width="2.26" height="55.22" fill="#ff8a8a"/><rect x="721.02" y="593.55" width="2.26" height="40.45" fill="#ff0000"/><rect x="724.28" y="535.75" width="2.26" height="98.25" fill="#62ffff"/><rect x="724.28" y="542.20" width="2.26" height="91.80" fill="#002c78"/><rect x="724.28" y="582.65" width="2.26" height="51.35" fill="#ff8a8a"/><rect x="724.28" y="593.55" width="2.26" height="40.45" fill="#ff0000"/><rect x="727.54" y="542.20" width="2.26" height="91.80" fill="#62ffff"/><rect x="727.54" y="545.13" width="2.26" height="88.87" fill="#002c78"/><rect x="727.54" y="586.16" width="2.26" height="47.84" fill="#ff8a8a"/><rect x="727.54" y="593.55" width="2.26" height="40.45" fill="#ff0000"/><rect x="730.80" y="539.85" width="2.26" height="94.15" fill="#62ffff"/><rect x="730.80" y="543.37" width="2.26" height="90.63" fill="#002c78"/><rect x="730.80" y="584.40" width="2.26" height="49.60" fill="#ff8a8a"/><rect x="730.80" y="593.55" width="2.26" height="40.45" fill="#ff0000"/><rect x="734.06" y="529.89" width="2.26" height="104.11" fill="#62ffff"/><rect x="734.06" y="539.62" width="2.26" height="94.38" fill="#002c78"/><rect x="734.06" y="580.65" width="2.26" height="53.35" fill="#ff8a8a"/><rect x="734.06" y="593.55" width="2.26" height="40.45" fill="#ff0000"/><rect x="737.32" y="538.09" width="2.26" height="95.91" fill="#62ffff"/><rect x="737.32" y="543.37" width="2.26" height="90.63" fill="#002c78"/><rect x="737.32" y="584.40" width="2.26" height="49.60" fill="#ff8a8a"/><rect x="737.32" y="593.55" width="2.26" height="40.45" fill="#ff0000"/><rect x="740.58" y="541.61" width="2.26" height="92.39" fill="#62ffff"/><rect x="740.58" y="546.30" width="2.26" height="87.70" fill="#002c78"/><rect x="740.58" y="587.34" width="2.26" height="46.66" fill="#ff8a8a"/><rect x="740.58" y="593.55" width="2.26" height="40.45" fill="#ff0000"/><rect x="743.84" y="530.47" width="2.26" height="103.53" fill="#62ffff"/><rect x="743.84" y="539.62" width="2.26" height="94.38" fill="#002c78"/><rect x="743.84" y="580.65" width="2.26" height="53.35" fill="#ff8a8a"/><rect x="743.84" y="593.55" width="2.26" height="40.45" fill="#ff0000"/><rect x="747.10" y="529.89" width="2.26" height="104.11" fill="#62ffff"/><rect x="747.10" y="543.37" width="2.26" height="90.63" fill="#002c78"/><rect x="747.10" y="584.40" width="2.26" height="49.60" fill="#ff8a8a"/><rect x="747.10" y="593.55" width="2.26" height="40.45" fill="#ff0000"/><rect x="750.36" y="531.64" width="2.26" height="102.36" fill="#62ffff"/><rect x="750.36" y="542.20" width="2.26" height="91.80" fill="#002c78"/><rect x="750.36" y="582.65" width="2.26" height="51.35" fill="#ff8a8a"/><rect x="750.36" y="593.55" width="2.26" height="40.45" fill="#ff0000"/><rect x="753.62" y="538.68" width="2.26" height="95.32" fill="#62ffff"/><rect x="753.62" y="546.89" width="2.26" height="87.11" fill="#002c78"/><rect x="753.62" y="587.92" width="2.26" height="46.08" fill="#ff8a8a"/><rect x="753.62" y="593.55" width="2.26" height="40.45" fill="#ff0000"/><rect x="756.88" y="536.92" width="2.26" height="97.08" fill="#62ffff"/><rect x="756.88" y="543.37" width="2.26" height="90.63" fill="#002c78"/><rect x="756.88" y="584.40" width="2.26" height="49.60" fill="#ff8a8a"/><rect x="756.88" y="593.55" width="2.26" height="40.45" fill="#ff0000"/><rect x="760.14" y="542.20" width="2.26" height="91.80" fill="#62ffff"/><rect x="760.14" y="548.64" width="2.26" height="85.36" fill="#002c78"/><rect x="760.14" y="589.09" width="2.26" height="44.91" fill="#ff8a8a"/><rect x="760.14" y="593.55" width="2.26" height="40.45" fill="#ff0000"/><rect x="763.40" y="536.92" width="2.26" height="97.08" fill="#62ffff"/><rect x="763.40" y="544.54" width="2.26" height="89.46" fill="#002c78"/><rect x="763.40" y="585.58" width="2.26" height="48.42" fill="#ff8a8a"/><rect x="763.40" y="593.55" width="2.26" height="40.45" fill="#ff0000"/><rect x="766.66" y="536.92" width="2.26" height="97.08" fill="#62ffff"/><rect x="766.66" y="545.13" width="2.26" height="88.87" fill="#002c78"/><rect x="766.66" y="586.16" width="2.26" height="47.84" fill="#ff8a8a"/><rect x="766.66" y="593.55" width="2.26" height="40.45" fill="#ff0000"/><rect x="769.92" y="543.37" width="2.26" height="90.63" fill="#62ffff"/><rect x="769.92" y="549.23" width="2.26" height="84.77" fill="#002c78"/><rect x="769.92" y="590.27" width="2.26" height="43.73" fill="#ff8a8a"/><rect x="769.92" y="593.55" width="2.26" height="40.45" fill="#ff0000"/><rect x="773.18" y="562.81" width="2.26" height="71.19" fill="#62ffff"/><rect x="773.18" y="569.28" width="2.26" height="64.72" fill="#002c78"/><rect x="773.18" y="594.52" width="2.26" height="39.48" fill="#ff8a8a"/><rect x="773.18" y="603.58" width="2.26" height="30.42" fill="#ff0000"/><rect x="776.44" y="602.77" width="2.26" height="31.23" fill="#62ffff"/><rect x="776.44" y="613.94" width="2.26" height="20.06" fill="#002c78"/><rect x="776.44" y="617.01" width="2.26" height="16.99" fill="#ff8a8a"/><rect x="776.44" y="629.47" width="2.26" height="4.53" fill="#ff0000"/><rect x="779.70" y="607.79" width="2.26" height="26.21" fill="#62ffff"/><rect x="779.70" y="613.94" width="2.26" height="20.06" fill="#002c78"/><rect x="779.70" y="622.03" width="2.26" height="11.97" fill="#ff8a8a"/><rect x="779.70" y="631.09" width="2.26" height="2.91" fill="#ff0000"/><rect x="782.96" y="597.27" width="2.26" height="36.73" fill="#62ffff"/><rect x="782.96" y="609.89" width="2.26" height="24.11" fill="#002c78"/><rect x="782.96" y="614.58" width="2.26" height="19.42" fill="#ff8a8a"/><rect x="782.96" y="628.34" width="2.26" height="5.66" fill="#ff0000"/><rect x="786.22" y="623.32" width="2.26" height="10.68" fill="#62ffff"/><rect x="786.22" y="627.37" width="2.26" height="6.63" fill="#002c78"/><rect x="786.22" y="630.28" width="2.26" height="3.72" fill="#ff8a8a"/><rect x="786.22" y="631.73" width="2.26" height="2.27" fill="#ff0000"/><rect x="789.48" y="619.92" width="2.26" height="14.08" fill="#62ffff"/><rect x="789.48" y="625.26" width="2.26" height="8.74" fill="#002c78"/><rect x="789.48" y="629.15" width="2.26" height="4.85" fill="#ff8a8a"/><rect x="789.48" y="631.09" width="2.26" height="2.91" fill="#ff0000"/><rect x="792.74" y="622.35" width="2.26" height="11.65" fill="#62ffff"/><rect x="792.74" y="626.72" width="2.26" height="7.28" fill="#002c78"/><rect x="792.74" y="629.15" width="2.26" height="4.85" fill="#ff8a8a"/><rect x="792.74" y="630.76" width="2.26" height="3.24" fill="#ff0000"/><rect x="796.00" y="620.73" width="2.26" height="13.27" fill="#62ffff"/><rect x="796.00" y="623.64" width="2.26" height="10.36" fill="#002c78"/><rect x="796.00" y="629.15" width="2.26" height="4.85" fill="#ff8a8a"/><rect x="796.00" y="631.73" width="2.26" height="2.27" fill="#ff0000"/><rect x="799.26" y="619.92" width="2.26" height="14.08" fill="#62ffff"/><rect x="799.26" y="625.26" width="2.26" height="8.74" fill="#002c78"/><rect x="799.26" y="628.82" width="2.26" height="5.18" fill="#ff8a8a"/><rect x="799.26" y="631.09" width="2.26" height="2.91" fill="#ff0000"/><rect x="802.52" y="619.44" width="2.26" height="14.56" fill="#62ffff"/><rect x="802.52" y="624.45" width="2.26" height="9.55" fill="#002c78"/><rect x="802.52" y="628.66" width="2.26" height="5.34" fill="#ff8a8a"/><rect x="802.52" y="630.28" width="2.26" height="3.72" fill="#ff0000"/><rect x="805.78" y="618.63" width="2.26" height="15.37" fill="#62ffff"/><rect x="805.78" y="623.64" width="2.26" height="10.36" fill="#002c78"/><rect x="805.78" y="627.37" width="2.26" height="6.63" fill="#ff8a8a"/><rect x="805.78" y="629.96" width="2.26" height="4.04" fill="#ff0000"/><rect x="809.04" y="609.57" width="2.26" height="24.43" fill="#62ffff"/><rect x="809.04" y="613.61" width="2.26" height="20.39" fill="#002c78"/><rect x="809.04" y="622.84" width="2.26" height="11.16" fill="#ff8a8a"/><rect x="809.04" y="628.66" width="2.26" height="5.34" fill="#ff0000"/><rect x="812.30" y="604.55" width="2.26" height="29.45" fill="#62ffff"/><rect x="812.30" y="612.00" width="2.26" height="22.00" fill="#002c78"/><rect x="812.30" y="617.82" width="2.26" height="16.18" fill="#ff8a8a"/><rect x="812.30" y="626.88" width="2.26" height="7.12" fill="#ff0000"/><rect x="815.56" y="542.74" width="2.26" height="91.26" fill="#62ffff"/><rect x="815.56" y="548.57" width="2.26" height="85.43" fill="#002c78"/><rect x="815.56" y="589.67" width="2.26" height="44.33" fill="#ff8a8a"/><rect x="815.56" y="598.57" width="2.26" height="35.43" fill="#ff0000"/><rect x="818.82" y="541.26" width="2.26" height="92.74" fill="#62ffff"/><rect x="818.82" y="546.30" width="2.26" height="87.70" fill="#002c78"/><rect x="818.82" y="586.75" width="2.26" height="47.25" fill="#ff8a8a"/><rect x="818.82" y="593.55" width="2.26" height="40.45" fill="#ff0000"/><rect x="822.08" y="543.37" width="2.26" height="90.63" fill="#62ffff"/><rect x="822.08" y="547.82" width="2.26" height="86.18" fill="#002c78"/><rect x="822.08" y="588.51" width="2.26" height="45.49" fill="#ff8a8a"/><rect x="822.08" y="593.55" width="2.26" height="40.45" fill="#ff0000"/><rect x="825.34" y="535.40" width="2.26" height="98.60" fill="#62ffff"/><rect x="825.34" y="541.96" width="2.26" height="92.04" fill="#002c78"/><rect x="825.34" y="582.65" width="2.26" height="51.35" fill="#ff8a8a"/><rect x="825.34" y="593.55" width="2.26" height="40.45" fill="#ff0000"/><rect x="828.60" y="538.09" width="2.26" height="95.91" fill="#62ffff"/><rect x="828.60" y="545.48" width="2.26" height="88.52" fill="#002c78"/><rect x="828.60" y="586.16" width="2.26" height="47.84" fill="#ff8a8a"/><rect x="828.60" y="593.55" width="2.26" height="40.45" fill="#ff0000"/><rect x="831.86" y="514.99" width="2.26" height="119.01" fill="#62ffff"/><rect x="831.86" y="532.82" width="2.26" height="101.18" fill="#002c78"/><rect x="831.86" y="573.85" width="2.26" height="60.15" fill="#ff8a8a"/><rect x="831.86" y="593.55" width="2.26" height="40.45" fill="#ff0000"/><rect x="835.12" y="522.26" width="2.26" height="111.74" fill="#62ffff"/><rect x="835.12" y="536.92" width="2.26" height="97.08" fill="#002c78"/><rect x="835.12" y="577.96" width="2.26" height="56.04" fill="#ff8a8a"/><rect x="835.12" y="593.55" width="2.26" height="40.45" fill="#ff0000"/><rect x="838.38" y="528.71" width="2.26" height="105.29" fill="#62ffff"/><rect x="838.38" y="542.20" width="2.26" height="91.80" fill="#002c78"/><rect x="838.38" y="582.65" width="2.26" height="51.35" fill="#ff8a8a"/><rect x="838.38" y="593.55" width="2.26" height="40.45" fill="#ff0000"/><rect x="841.64" y="538.68" width="2.26" height="95.32" fill="#62ffff"/><rect x="841.64" y="546.30" width="2.26" height="87.70" fill="#002c78"/><rect x="841.64" y="586.75" width="2.26" height="47.25" fill="#ff8a8a"/><rect x="841.64" y="593.55" width="2.26" height="40.45" fill="#ff0000"/><rect x="844.90" y="536.33" width="2.26" height="97.67" fill="#62ffff"/><rect x="844.90" y="544.54" width="2.26" height="89.46" fill="#002c78"/><rect x="844.90" y="585.58" width="2.26" height="48.42" fill="#ff8a8a"/><rect x="844.90" y="593.55" width="2.26" height="40.45" fill="#ff0000"/><rect x="848.16" y="540.44" width="2.26" height="93.56" fill="#62ffff"/><rect x="848.16" y="546.89" width="2.26" height="87.11" fill="#002c78"/><rect x="848.16" y="587.92" width="2.26" height="46.08" fill="#ff8a8a"/><rect x="848.16" y="593.55" width="2.26" height="40.45" fill="#ff0000"/><rect x="851.42" y="538.68" width="2.26" height="95.32" fill="#62ffff"/><rect x="851.42" y="545.48" width="2.26" height="88.52" fill="#002c78"/><rect x="851.42" y="586.16" width="2.26" height="47.84" fill="#ff8a8a"/><rect x="851.42" y="593.55" width="2.26" height="40.45" fill="#ff0000"/><rect x="854.68" y="539.62" width="2.26" height="94.38" fill="#62ffff"/><rect x="854.68" y="546.30" width="2.26" height="87.70" fill="#002c78"/><rect x="854.68" y="586.75" width="2.26" height="47.25" fill="#ff8a8a"/><rect x="854.68" y="593.55" width="2.26" height="40.45" fill="#ff0000"/><rect x="857.94" y="536.92" width="2.26" height="97.08" fill="#62ffff"/><rect x="857.94" y="545.48" width="2.26" height="88.52" fill="#002c78"/><rect x="857.94" y="586.16" width="2.26" height="47.84" fill="#ff8a8a"/><rect x="857.94" y="593.55" width="2.26" height="40.45" fill="#ff0000"/><rect x="861.20" y="541.26" width="2.26" height="92.74" fill="#62ffff"/><rect x="861.20" y="547.82" width="2.26" height="86.18" fill="#002c78"/><rect x="861.20" y="588.51" width="2.26" height="45.49" fill="#ff8a8a"/><rect x="861.20" y="593.55" width="2.26" height="40.45" fill="#ff0000"/><rect x="864.46" y="536.33" width="2.26" height="97.67" fill="#62ffff"/><rect x="864.46" y="541.96" width="2.26" height="92.04" fill="#002c78"/><rect x="864.46" y="582.65" width="2.26" height="51.35" fill="#ff8a8a"/><rect x="864.46" y="593.55" width="2.26" height="40.45" fill="#ff0000"/><rect x="867.72" y="536.92" width="2.26" height="97.08" fill="#62ffff"/><rect x="867.72" y="546.89" width="2.26" height="87.11" fill="#002c78"/><rect x="867.72" y="587.92" width="2.26" height="46.08" fill="#ff8a8a"/><rect x="867.72" y="593.55" width="2.26" height="40.45" fill="#ff0000"/><rect x="870.98" y="541.26" width="2.26" height="92.74" fill="#62ffff"/><rect x="870.98" y="547.82" width="2.26" height="86.18" fill="#002c78"/><rect x="870.98" y="588.51" width="2.26" height="45.49" fill="#ff8a8a"/><rect x="870.98" y="593.55" width="2.26" height="40.45" fill="#ff0000"/><rect x="874.24" y="535.40" width="2.26" height="98.60" fill="#62ffff"/><rect x="874.24" y="544.54" width="2.26" height="89.46" fill="#002c78"/><rect x="874.24" y="585.58" width="2.26" height="48.42" fill="#ff8a8a"/><rect x="874.24" y="593.55" width="2.26" height="40.45" fill="#ff0000"/><rect x="877.50" y="540.44" width="2.26" height="93.56" fill="#62ffff"/><rect x="877.50" y="546.89" width="2.26" height="87.11" fill="#002c78"/><rect x="877.50" y="587.92" width="2.26" height="46.08" fill="#ff8a8a"/><rect x="877.50" y="593.55" width="2.26" height="40.45" fill="#ff0000"/><rect x="880.76" y="536.92" width="2.26" height="97.08" fill="#62ffff"/><rect x="880.76" y="545.48" width="2.26" height="88.52" fill="#002c78"/><rect x="880.76" y="586.16" width="2.26" height="47.84" fill="#ff8a8a"/><rect x="880.76" y="593.55" width="2.26" height="40.45" fill="#ff0000"/><rect x="884.02" y="531.64" width="2.26" height="102.36" fill="#62ffff"/><rect x="884.02" y="543.37" width="2.26" height="90.63" fill="#002c78"/><rect x="884.02" y="584.40" width="2.26" height="49.60" fill="#ff8a8a"/><rect x="884.02" y="593.55" width="2.26" height="40.45" fill="#ff0000"/><rect x="887.28" y="522.50" width="2.26" height="111.50" fill="#62ffff"/><rect x="887.28" y="539.62" width="2.26" height="94.38" fill="#002c78"/><rect x="887.28" y="580.65" width="2.26" height="53.35" fill="#ff8a8a"/><rect x="887.28" y="593.55" width="2.26" height="40.45" fill="#ff0000"/><rect x="890.54" y="533.05" width="2.26" height="100.95" fill="#62ffff"/><rect x="890.54" y="545.48" width="2.26" height="88.52" fill="#002c78"/><rect x="890.54" y="586.16" width="2.26" height="47.84" fill="#ff8a8a"/><rect x="890.54" y="593.55" width="2.26" height="40.45" fill="#ff0000"/><rect x="893.80" y="539.62" width="2.26" height="94.38" fill="#62ffff"/><rect x="893.80" y="547.82" width="2.26" height="86.18" fill="#002c78"/><rect x="893.80" y="588.51" width="2.26" height="45.49" fill="#ff8a8a"/><rect x="893.80" y="593.55" width="2.26" height="40.45" fill="#ff0000"/><rect x="897.06" y="536.92" width="2.26" height="97.08" fill="#62ffff"/><rect x="897.06" y="544.54" width="2.26" height="89.46" fill="#002c78"/><rect x="897.06" y="585.58" width="2.26" height="48.42" fill="#ff8a8a"/><rect x="897.06" y="593.55" width="2.26" height="40.45" fill="#ff0000"/><rect x="900.32" y="541.26" width="2.26" height="92.74" fill="#62ffff"/><rect x="900.32" y="546.89" width="2.26" height="87.11" fill="#002c78"/><rect x="900.32" y="587.92" width="2.26" height="46.08" fill="#ff8a8a"/><rect x="900.32" y="593.55" width="2.26" height="40.45" fill="#ff0000"/><rect x="903.58" y="535.40" width="2.26" height="98.60" fill="#62ffff"/><rect x="903.58" y="542.78" width="2.26" height="91.22" fill="#002c78"/><rect x="903.58" y="583.47" width="2.26" height="50.53" fill="#ff8a8a"/><rect x="903.58" y="593.55" width="2.26" height="40.45" fill="#ff0000"/><rect x="906.84" y="533.75" width="2.26" height="100.25" fill="#62ffff"/><rect x="906.84" y="545.48" width="2.26" height="88.52" fill="#002c78"/><rect x="906.84" y="586.16" width="2.26" height="47.84" fill="#ff8a8a"/><rect x="906.84" y="593.55" width="2.26" height="40.45" fill="#ff0000"/><rect x="910.10" y="527.19" width="2.26" height="106.81" fill="#62ffff"/><rect x="910.10" y="545.48" width="2.26" height="88.52" fill="#002c78"/><rect x="910.10" y="586.16" width="2.26" height="47.84" fill="#ff8a8a"/><rect x="910.10" y="593.55" width="2.26" height="40.45" fill="#ff0000"/><rect x="913.36" y="521.68" width="2.26" height="112.32" fill="#62ffff"/><rect x="913.36" y="538.09" width="2.26" height="95.91" fill="#002c78"/><rect x="913.36" y="578.78" width="2.26" height="55.22" fill="#ff8a8a"/><rect x="913.36" y="593.55" width="2.26" height="40.45" fill="#ff0000"/><rect x="916.62" y="535.75" width="2.26" height="98.25" fill="#62ffff"/><rect x="916.62" y="546.30" width="2.26" height="87.70" fill="#002c78"/><rect x="916.62" y="587.34" width="2.26" height="46.66" fill="#ff8a8a"/><rect x="916.62" y="593.55" width="2.26" height="40.45" fill="#ff0000"/><rect x="919.88" y="536.92" width="2.26" height="97.08" fill="#62ffff"/><rect x="919.88" y="545.48" width="2.26" height="88.52" fill="#002c78"/><rect x="919.88" y="586.16" width="2.26" height="47.84" fill="#ff8a8a"/><rect x="919.88" y="593.55" width="2.26" height="40.45" fill="#ff0000"/><rect x="923.14" y="536.33" width="2.26" height="97.67" fill="#62ffff"/><rect x="923.14" y="543.37" width="2.26" height="90.63" fill="#002c78"/><rect x="923.14" y="584.40" width="2.26" height="49.60" fill="#ff8a8a"/><rect x="923.14" y="593.55" width="2.26" height="40.45" fill="#ff0000"/><rect x="926.40" y="536.33" width="2.26" height="97.67" fill="#62ffff"/><rect x="926.40" y="544.54" width="2.26" height="89.46" fill="#002c78"/><rect x="926.40" y="585.58" width="2.26" height="48.42" fill="#ff8a8a"/><rect x="926.40" y="593.55" width="2.26" height="40.45" fill="#ff0000"/><rect x="929.66" y="538.91" width="2.26" height="95.09" fill="#62ffff"/><rect x="929.66" y="546.30" width="2.26" height="87.70" fill="#002c78"/><rect x="929.66" y="587.34" width="2.26" height="46.66" fill="#ff8a8a"/><rect x="929.66" y="593.55" width="2.26" height="40.45" fill="#ff0000"/><rect x="932.92" y="534.58" width="2.26" height="99.42" fill="#62ffff"/><rect x="932.92" y="543.37" width="2.26" height="90.63" fill="#002c78"/><rect x="932.92" y="584.40" width="2.26" height="49.60" fill="#ff8a8a"/><rect x="932.92" y="593.55" width="2.26" height="40.45" fill="#ff0000"/><rect x="936.18" y="536.92" width="2.26" height="97.08" fill="#62ffff"/><rect x="936.18" y="545.48" width="2.26" height="88.52" fill="#002c78"/><rect x="936.18" y="586.16" width="2.26" height="47.84" fill="#ff8a8a"/><rect x="936.18" y="593.55" width="2.26" height="40.45" fill="#ff0000"/><rect x="939.44" y="539.62" width="2.26" height="94.38" fill="#62ffff"/><rect x="939.44" y="546.89" width="2.26" height="87.11" fill="#002c78"/><rect x="939.44" y="587.92" width="2.26" height="46.08" fill="#ff8a8a"/><rect x="939.44" y="593.55" width="2.26" height="40.45" fill="#ff0000"/><rect x="942.70" y="533.05" width="2.26" height="100.95" fill="#62ffff"/><rect x="942.70" y="542.78" width="2.26" height="91.22" fill="#002c78"/><rect x="942.70" y="583.47" width="2.26" height="50.53" fill="#ff8a8a"/><rect x="942.70" y="593.55" width="2.26" height="40.45" fill="#ff0000"/><rect x="945.96" y="536.92" width="2.26" height="97.08" fill="#62ffff"/><rect x="945.96" y="542.78" width="2.26" height="91.22" fill="#002c78"/><rect x="945.96" y="583.47" width="2.26" height="50.53" fill="#ff8a8a"/><rect x="945.96" y="593.55" width="2.26" height="40.45" fill="#ff0000"/><rect x="949.22" y="535.40" width="2.26" height="98.60" fill="#62ffff"/><rect x="949.22" y="545.48" width="2.26" height="88.52" fill="#002c78"/><rect x="949.22" y="586.16" width="2.26" height="47.84" fill="#ff8a8a"/><rect x="949.22" y="593.55" width="2.26" height="40.45" fill="#ff0000"/><rect x="952.48" y="538.91" width="2.26" height="95.09" fill="#62ffff"/><rect x="952.48" y="546.30" width="2.26" height="87.70" fill="#002c78"/><rect x="952.48" y="587.34" width="2.26" height="46.66" fill="#ff8a8a"/><rect x="952.48" y="593.55" width="2.26" height="40.45" fill="#ff0000"/><rect x="955.74" y="537.74" width="2.26" height="96.26" fill="#62ffff"/><rect x="955.74" y="545.48" width="2.26" height="88.52" fill="#002c78"/><rect x="955.74" y="586.16" width="2.26" height="47.84" fill="#ff8a8a"/><rect x="955.74" y="593.55" width="2.26" height="40.45" fill="#ff0000"/><rect x="959.00" y="535.40" width="2.26" height="98.60" fill="#62ffff"/><rect x="959.00" y="544.54" width="2.26" height="89.46" fill="#002c78"/><rect x="959.00" y="585.58" width="2.26" height="48.42" fill="#ff8a8a"/><rect x="959.00" y="593.55" width="2.26" height="40.45" fill="#ff0000"/><rect x="962.26" y="534.58" width="2.26" height="99.42" fill="#62ffff"/><rect x="962.26" y="544.54" width="2.26" height="89.46" fill="#002c78"/><rect x="962.26" y="585.58" width="2.26" height="48.42" fill="#ff8a8a"/><rect x="962.26" y="593.55" width="2.26" height="40.45" fill="#ff0000"/><rect x="965.52" y="536.92" width="2.26" height="97.08" fill="#62ffff"/><rect x="965.52" y="546.89" width="2.26" height="87.11" fill="#002c78"/><rect x="965.52" y="587.92" width="2.26" height="46.08" fill="#ff8a8a"/><rect x="965.52" y="593.55" width="2.26" height="40.45" fill="#ff0000"/><rect x="968.78" y="537.74" width="2.26" height="96.26" fill="#62ffff"/><rect x="968.78" y="546.30" width="2.26" height="87.70" fill="#002c78"/><rect x="968.78" y="586.75" width="2.26" height="47.25" fill="#ff8a8a"/><rect x="968.78" y="593.55" width="2.26" height="40.45" fill="#ff0000"/><rect x="972.04" y="538.91" width="2.26" height="95.09" fill="#62ffff"/><rect x="972.04" y="546.30" width="2.26" height="87.70" fill="#002c78"/><rect x="972.04" y="586.75" width="2.26" height="47.25" fill="#ff8a8a"/><rect x="972.04" y="593.55" width="2.26" height="40.45" fill="#ff0000"/><rect x="975.30" y="534.58" width="2.26" height="99.42" fill="#62ffff"/><rect x="975.30" y="542.78" width="2.26" height="91.22" fill="#002c78"/><rect x="975.30" y="583.47" width="2.26" height="50.53" fill="#ff8a8a"/><rect x="975.30" y="593.55" width="2.26" height="40.45" fill="#ff0000"/><rect x="978.56" y="510.54" width="2.26" height="123.46" fill="#62ffff"/><rect x="978.56" y="521.33" width="2.26" height="112.67" fill="#002c78"/><rect x="978.56" y="562.36" width="2.26" height="71.64" fill="#ff8a8a"/><rect x="978.56" y="593.55" width="2.26" height="40.45" fill="#ff0000"/><rect x="981.82" y="536.33" width="2.26" height="97.67" fill="#62ffff"/><rect x="981.82" y="546.30" width="2.26" height="87.70" fill="#002c78"/><rect x="981.82" y="586.75" width="2.26" height="47.25" fill="#ff8a8a"/><rect x="981.82" y="593.55" width="2.26" height="40.45" fill="#ff0000"/><rect x="985.08" y="525.55" width="2.26" height="108.45" fill="#62ffff"/><rect x="985.08" y="538.44" width="2.26" height="95.56" fill="#002c78"/><rect x="985.08" y="579.48" width="2.26" height="54.52" fill="#ff8a8a"/><rect x="985.08" y="593.55" width="2.26" height="40.45" fill="#ff0000"/><rect x="988.34" y="538.09" width="2.26" height="95.91" fill="#62ffff"/><rect x="988.34" y="547.82" width="2.26" height="86.18" fill="#002c78"/><rect x="988.34" y="588.51" width="2.26" height="45.49" fill="#ff8a8a"/><rect x="988.34" y="593.55" width="2.26" height="40.45" fill="#ff0000"/><rect x="991.60" y="538.09" width="2.26" height="95.91" fill="#62ffff"/><rect x="991.60" y="544.54" width="2.26" height="89.46" fill="#002c78"/><rect x="991.60" y="585.58" width="2.26" height="48.42" fill="#ff8a8a"/><rect x="991.60" y="593.55" width="2.26" height="40.45" fill="#ff0000"/><rect x="994.86" y="536.92" width="2.26" height="97.08" fill="#62ffff"/><rect x="994.86" y="544.54" width="2.26" height="89.46" fill="#002c78"/><rect x="994.86" y="585.58" width="2.26" height="48.42" fill="#ff8a8a"/><rect x="994.86" y="593.55" width="2.26" height="40.45" fill="#ff0000"/><rect x="998.12" y="528.13" width="2.26" height="105.87" fill="#62ffff"/><rect x="998.12" y="541.96" width="2.26" height="92.04" fill="#002c78"/><rect x="998.12" y="582.65" width="2.26" height="51.35" fill="#ff8a8a"/><rect x="998.12" y="593.55" width="2.26" height="40.45" fill="#ff0000"/><rect x="1001.38" y="520.09" width="2.26" height="113.91" fill="#62ffff"/><rect x="1001.38" y="535.30" width="2.26" height="98.70" fill="#002c78"/><rect x="1001.38" y="574.78" width="2.26" height="59.22" fill="#ff8a8a"/><rect x="1001.38" y="593.55" width="2.26" height="40.45" fill="#ff0000"/><rect x="1004.64" y="533.68" width="2.26" height="100.32" fill="#62ffff"/><rect x="1004.64" y="545.01" width="2.26" height="88.99" fill="#002c78"/><rect x="1004.64" y="585.46" width="2.26" height="48.54" fill="#ff8a8a"/><rect x="1004.64" y="593.55" width="2.26" height="40.45" fill="#ff0000"/><rect x="1007.90" y="530.45" width="2.26" height="103.55" fill="#62ffff"/><rect x="1007.90" y="543.88" width="2.26" height="90.12" fill="#002c78"/><rect x="1007.90" y="585.46" width="2.26" height="48.54" fill="#ff8a8a"/><rect x="1007.90" y="593.55" width="2.26" height="40.45" fill="#ff0000"/><rect x="1011.16" y="540.16" width="2.26" height="93.84" fill="#62ffff"/><rect x="1011.16" y="545.66" width="2.26" height="88.34" fill="#002c78"/><rect x="1011.16" y="587.08" width="2.26" height="46.92" fill="#ff8a8a"/><rect x="1011.16" y="593.55" width="2.26" height="40.45" fill="#ff0000"/><rect x="1014.42" y="532.07" width="2.26" height="101.93" fill="#62ffff"/><rect x="1014.42" y="541.77" width="2.26" height="92.23" fill="#002c78"/><rect x="1014.42" y="582.22" width="2.26" height="51.78" fill="#ff8a8a"/><rect x="1014.42" y="593.55" width="2.26" height="40.45" fill="#ff0000"/><rect x="1017.68" y="540.16" width="2.26" height="93.84" fill="#62ffff"/><rect x="1017.68" y="545.66" width="2.26" height="88.34" fill="#002c78"/><rect x="1017.68" y="586.27" width="2.26" height="47.73" fill="#ff8a8a"/><rect x="1017.68" y="593.55" width="2.26" height="40.45" fill="#ff0000"/><rect x="1020.94" y="574.46" width="2.26" height="59.54" fill="#62ffff"/><rect x="1020.94" y="580.12" width="2.26" height="53.88" fill="#002c78"/><rect x="1020.94" y="618.14" width="2.26" height="15.86" fill="#ff8a8a"/><rect x="1020.94" y="623.81" width="2.26" height="10.19" fill="#ff0000"/><rect x="1024.20" y="580.12" width="2.26" height="53.88" fill="#62ffff"/><rect x="1024.20" y="585.14" width="2.26" height="48.86" fill="#002c78"/><rect x="1024.20" y="585.95" width="2.26" height="48.05" fill="#ff8a8a"/><rect x="1024.20" y="593.55" width="2.26" height="40.45" fill="#ff0000"/><rect x="1027.46" y="576.56" width="2.26" height="57.44" fill="#62ffff"/><rect x="1027.46" y="581.90" width="2.26" height="52.10" fill="#002c78"/><rect x="1027.46" y="582.22" width="2.26" height="51.78" fill="#ff8a8a"/><rect x="1027.46" y="593.55" width="2.26" height="40.45" fill="#ff0000"/><rect x="1030.72" y="578.34" width="2.26" height="55.66" fill="#62ffff"/><rect x="1030.72" y="586.43" width="2.26" height="47.57" fill="#002c78"/><rect x="1030.72" y="586.92" width="2.26" height="47.08" fill="#ff8a8a"/><rect x="1030.72" y="593.55" width="2.26" height="40.45" fill="#ff0000"/><rect x="1033.98" y="582.71" width="2.26" height="51.29" fill="#62ffff"/><rect x="1033.98" y="587.24" width="2.26" height="46.76" fill="#002c78"/><rect x="1033.98" y="587.56" width="2.26" height="46.44" fill="#ff8a8a"/><rect x="1033.98" y="593.55" width="2.26" height="40.45" fill="#ff0000"/><rect x="1037.24" y="580.12" width="2.26" height="53.88" fill="#62ffff"/><rect x="1037.24" y="586.27" width="2.26" height="47.73" fill="#002c78"/><rect x="1037.24" y="586.27" width="2.26" height="47.73" fill="#ff8a8a"/><rect x="1037.24" y="593.55" width="2.26" height="40.45" fill="#ff0000"/><rect x="1040.50" y="579.31" width="2.26" height="54.69" fill="#62ffff"/><rect x="1040.50" y="586.27" width="2.26" height="47.73" fill="#002c78"/><rect x="1040.50" y="586.27" width="2.26" height="47.73" fill="#ff8a8a"/><rect x="1040.50" y="593.55" width="2.26" height="40.45" fill="#ff0000"/><rect x="1043.76" y="584.49" width="2.26" height="49.51" fill="#62ffff"/><rect x="1043.76" y="587.24" width="2.26" height="46.76" fill="#002c78"/><rect x="1043.76" y="587.24" width="2.26" height="46.76" fill="#ff8a8a"/><rect x="1043.76" y="593.55" width="2.26" height="40.45" fill="#ff0000"/><rect x="1047.02" y="583.36" width="2.26" height="50.64" fill="#62ffff"/><rect x="1047.02" y="587.24" width="2.26" height="46.76" fill="#002c78"/><rect x="1047.02" y="587.24" width="2.26" height="46.76" fill="#ff8a8a"/><rect x="1047.02" y="593.55" width="2.26" height="40.45" fill="#ff0000"/><rect x="1050.28" y="581.90" width="2.26" height="52.10" fill="#62ffff"/><rect x="1050.28" y="587.24" width="2.26" height="46.76" fill="#002c78"/><rect x="1050.28" y="587.24" width="2.26" height="46.76" fill="#ff8a8a"/><rect x="1050.28" y="593.55" width="2.26" height="40.45" fill="#ff0000"/><rect x="1053.54" y="577.53" width="2.26" height="56.47" fill="#62ffff"/><rect x="1053.54" y="585.14" width="2.26" height="48.86" fill="#002c78"/><rect x="1053.54" y="585.14" width="2.26" height="48.86" fill="#ff8a8a"/><rect x="1053.54" y="593.55" width="2.26" height="40.45" fill="#ff0000"/><rect x="1056.80" y="551.81" width="2.26" height="82.19" fill="#62ffff"/><rect x="1056.80" y="565.07" width="2.26" height="68.93" fill="#002c78"/><rect x="1056.80" y="569.60" width="2.26" height="64.40" fill="#ff8a8a"/><rect x="1056.80" y="593.55" width="2.26" height="40.45" fill="#ff0000"/><rect x="1060.06" y="578.34" width="2.26" height="55.66" fill="#62ffff"/><rect x="1060.06" y="584.00" width="2.26" height="50.00" fill="#002c78"/><rect x="1060.06" y="586.92" width="2.26" height="47.08" fill="#ff8a8a"/><rect x="1060.06" y="593.55" width="2.26" height="40.45" fill="#ff0000"/><rect x="1063.32" y="582.22" width="2.26" height="51.78" fill="#62ffff"/><rect x="1063.32" y="587.56" width="2.26" height="46.44" fill="#002c78"/><rect x="1063.32" y="588.70" width="2.26" height="45.30" fill="#ff8a8a"/><rect x="1063.32" y="593.55" width="2.26" height="40.45" fill="#ff0000"/><rect x="1066.58" y="576.88" width="2.26" height="57.12" fill="#62ffff"/><rect x="1066.58" y="582.71" width="2.26" height="51.29" fill="#002c78"/><rect x="1066.58" y="585.14" width="2.26" height="48.86" fill="#ff8a8a"/><rect x="1066.58" y="593.55" width="2.26" height="40.45" fill="#ff0000"/><rect x="1069.84" y="579.31" width="2.26" height="54.69" fill="#62ffff"/><rect x="1069.84" y="586.92" width="2.26" height="47.08" fill="#002c78"/><rect x="1069.84" y="589.02" width="2.26" height="44.98" fill="#ff8a8a"/><rect x="1069.84" y="593.55" width="2.26" height="40.45" fill="#ff0000"/><rect x="1073.10" y="535.95" width="2.26" height="98.05" fill="#62ffff"/><rect x="1073.10" y="558.92" width="2.26" height="75.08" fill="#002c78"/><rect x="1073.10" y="574.78" width="2.26" height="59.22" fill="#ff8a8a"/><rect x="1073.10" y="593.55" width="2.26" height="40.45" fill="#ff0000"/><rect x="1076.36" y="518.31" width="2.26" height="115.69" fill="#62ffff"/><rect x="1076.36" y="541.29" width="2.26" height="92.71" fill="#002c78"/><rect x="1076.36" y="562.16" width="2.26" height="71.84" fill="#ff8a8a"/><rect x="1076.36" y="593.55" width="2.26" height="40.45" fill="#ff0000"/><rect x="1079.62" y="567.82" width="2.26" height="66.18" fill="#62ffff"/><rect x="1079.62" y="588.05" width="2.26" height="45.95" fill="#002c78"/><rect x="1079.62" y="612.80" width="2.26" height="21.20" fill="#ff8a8a"/><rect x="1079.62" y="625.59" width="2.26" height="8.41" fill="#ff0000"/><rect x="1082.88" y="613.61" width="2.26" height="20.39" fill="#62ffff"/><rect x="1082.88" y="622.19" width="2.26" height="11.81" fill="#002c78"/><rect x="1082.88" y="626.40" width="2.26" height="7.60" fill="#ff8a8a"/><rect x="1082.88" y="630.44" width="2.26" height="3.56" fill="#ff0000"/><rect x="1086.14" y="613.29" width="2.26" height="20.71" fill="#62ffff"/><rect x="1086.14" y="620.41" width="2.26" height="13.59" fill="#002c78"/><rect x="1086.14" y="624.29" width="2.26" height="9.71" fill="#ff8a8a"/><rect x="1086.14" y="632.71" width="2.26" height="1.29" fill="#ff0000"/><rect x="1089.40" y="580.93" width="2.26" height="53.07" fill="#62ffff"/><rect x="1089.40" y="592.09" width="2.26" height="41.91" fill="#002c78"/><rect x="1089.40" y="606.33" width="2.26" height="27.67" fill="#ff8a8a"/><rect x="1089.40" y="621.70" width="2.26" height="12.30" fill="#ff0000"/><rect x="1092.66" y="607.46" width="2.26" height="26.54" fill="#62ffff"/><rect x="1092.66" y="613.29" width="2.26" height="20.71" fill="#002c78"/><rect x="1092.66" y="618.95" width="2.26" height="15.05" fill="#ff8a8a"/><rect x="1092.66" y="629.63" width="2.26" height="4.37" fill="#ff0000"/><rect x="1095.92" y="571.22" width="2.26" height="62.78" fill="#62ffff"/><rect x="1095.92" y="589.02" width="2.26" height="44.98" fill="#002c78"/><rect x="1095.92" y="600.51" width="2.26" height="33.49" fill="#ff8a8a"/><rect x="1095.92" y="619.92" width="2.26" height="14.08" fill="#ff0000"/><rect x="1099.18" y="620.73" width="2.26" height="13.27" fill="#62ffff"/><rect x="1099.18" y="625.10" width="2.26" height="8.90" fill="#002c78"/><rect x="1099.18" y="629.15" width="2.26" height="4.85" fill="#ff8a8a"/><rect x="1099.18" y="631.41" width="2.26" height="2.59" fill="#ff0000"/><rect x="1102.44" y="589.83" width="2.26" height="44.17" fill="#62ffff"/><rect x="1102.44" y="602.77" width="2.26" height="31.23" fill="#002c78"/><rect x="1102.44" y="608.76" width="2.26" height="25.24" fill="#ff8a8a"/><rect x="1102.44" y="621.70" width="2.26" height="12.30" fill="#ff0000"/><rect x="1105.70" y="551.81" width="2.26" height="82.19" fill="#62ffff"/><rect x="1105.70" y="573.00" width="2.26" height="61.00" fill="#002c78"/><rect x="1105.70" y="581.90" width="2.26" height="52.10" fill="#ff8a8a"/><rect x="1105.70" y="593.55" width="2.26" height="40.45" fill="#ff0000"/><rect x="1108.96" y="580.93" width="2.26" height="53.07" fill="#62ffff"/><rect x="1108.96" y="581.90" width="2.26" height="52.10" fill="#002c78"/><rect x="1108.96" y="587.56" width="2.26" height="46.44" fill="#ff8a8a"/><rect x="1108.96" y="593.55" width="2.26" height="40.45" fill="#ff0000"/><rect x="1112.22" y="573.00" width="2.26" height="61.00" fill="#62ffff"/><rect x="1112.22" y="579.31" width="2.26" height="54.69" fill="#002c78"/><rect x="1112.22" y="586.92" width="2.26" height="47.08" fill="#ff8a8a"/><rect x="1112.22" y="593.55" width="2.26" height="40.45" fill="#ff0000"/><rect x="1115.48" y="584.49" width="2.26" height="49.51" fill="#62ffff"/><rect x="1115.48" y="585.14" width="2.26" height="48.86" fill="#002c78"/><rect x="1115.48" y="589.83" width="2.26" height="44.17" fill="#ff8a8a"/><rect x="1115.48" y="593.55" width="2.26" height="40.45" fill="#ff0000"/><rect x="1118.74" y="580.93" width="2.26" height="53.07" fill="#62ffff"/><rect x="1118.74" y="582.22" width="2.26" height="51.78" fill="#002c78"/><rect x="1118.74" y="588.05" width="2.26" height="45.95" fill="#ff8a8a"/><rect x="1118.74" y="593.55" width="2.26" height="40.45" fill="#ff0000"/><rect x="1122.00" y="580.93" width="2.26" height="53.07" fill="#62ffff"/><rect x="1122.00" y="582.22" width="2.26" height="51.78" fill="#002c78"/><rect x="1122.00" y="588.05" width="2.26" height="45.95" fill="#ff8a8a"/><rect x="1122.00" y="593.55" width="2.26" height="40.45" fill="#ff0000"/><rect x="1125.26" y="579.80" width="2.26" height="54.20" fill="#62ffff"/><rect x="1125.26" y="581.58" width="2.26" height="52.42" fill="#002c78"/><rect x="1125.26" y="587.24" width="2.26" height="46.76" fill="#ff8a8a"/><rect x="1125.26" y="593.55" width="2.26" height="40.45" fill="#ff0000"/><rect x="1128.52" y="580.93" width="2.26" height="53.07" fill="#62ffff"/><rect x="1128.52" y="584.00" width="2.26" height="50.00" fill="#002c78"/><rect x="1128.52" y="589.02" width="2.26" height="44.98" fill="#ff8a8a"/><rect x="1128.52" y="593.55" width="2.26" height="40.45" fill="#ff0000"/><rect x="1131.78" y="579.80" width="2.26" height="54.20" fill="#62ffff"/><rect x="1131.78" y="581.58" width="2.26" height="52.42" fill="#002c78"/><rect x="1131.78" y="587.56" width="2.26" height="46.44" fill="#ff8a8a"/><rect x="1131.78" y="593.55" width="2.26" height="40.45" fill="#ff0000"/><rect x="1135.04" y="582.22" width="2.26" height="51.78" fill="#62ffff"/><rect x="1135.04" y="582.71" width="2.26" height="51.29" fill="#002c78"/><rect x="1135.04" y="589.02" width="2.26" height="44.98" fill="#ff8a8a"/><rect x="1135.04" y="593.55" width="2.26" height="40.45" fill="#ff0000"/><rect x="1138.30" y="560.70" width="2.26" height="73.30" fill="#62ffff"/><rect x="1138.30" y="566.85" width="2.26" height="67.15" fill="#002c78"/><rect x="1138.30" y="580.93" width="2.26" height="53.07" fill="#ff8a8a"/><rect x="1138.30" y="593.55" width="2.26" height="40.45" fill="#ff0000"/><rect x="1141.56" y="574.46" width="2.26" height="59.54" fill="#62ffff"/><rect x="1141.56" y="578.02" width="2.26" height="55.98" fill="#002c78"/><rect x="1141.56" y="585.78" width="2.26" height="48.22" fill="#ff8a8a"/><rect x="1141.56" y="593.55" width="2.26" height="40.45" fill="#ff0000"/><rect x="1144.82" y="578.34" width="2.26" height="55.66" fill="#62ffff"/><rect x="1144.82" y="581.58" width="2.26" height="52.42" fill="#002c78"/><rect x="1144.82" y="587.24" width="2.26" height="46.76" fill="#ff8a8a"/><rect x="1144.82" y="593.55" width="2.26" height="40.45" fill="#ff0000"/><rect x="1148.08" y="574.46" width="2.26" height="59.54" fill="#62ffff"/><rect x="1148.08" y="577.53" width="2.26" height="56.47" fill="#002c78"/><rect x="1148.08" y="584.00" width="2.26" height="50.00" fill="#ff8a8a"/><rect x="1148.08" y="593.55" width="2.26" height="40.45" fill="#ff0000"/><rect x="1151.34" y="573.33" width="2.26" height="60.67" fill="#62ffff"/><rect x="1151.34" y="577.53" width="2.26" height="56.47" fill="#002c78"/><rect x="1151.34" y="584.00" width="2.26" height="50.00" fill="#ff8a8a"/><rect x="1151.34" y="593.55" width="2.26" height="40.45" fill="#ff0000"/><rect x="1154.60" y="578.34" width="2.26" height="55.66" fill="#62ffff"/><rect x="1154.60" y="580.93" width="2.26" height="53.07" fill="#002c78"/><rect x="1154.60" y="587.08" width="2.26" height="46.92" fill="#ff8a8a"/><rect x="1154.60" y="593.55" width="2.26" height="40.45" fill="#ff0000"/><rect x="1157.86" y="614.10" width="2.26" height="19.90" fill="#62ffff"/><rect x="1157.86" y="617.17" width="2.26" height="16.83" fill="#002c78"/><rect x="1157.86" y="623.32" width="2.26" height="10.68" fill="#ff8a8a"/><rect x="1157.86" y="627.85" width="2.26" height="6.15" fill="#ff0000"/><rect x="1161.12" y="618.14" width="2.26" height="15.86" fill="#62ffff"/><rect x="1161.12" y="624.29" width="2.26" height="9.71" fill="#002c78"/><rect x="1161.12" y="629.63" width="2.26" height="4.37" fill="#ff8a8a"/><rect x="1161.12" y="631.41" width="2.26" height="2.59" fill="#ff0000"/><rect x="1164.38" y="616.36" width="2.26" height="17.64" fill="#62ffff"/><rect x="1164.38" y="618.95" width="2.26" height="15.05" fill="#002c78"/><rect x="1164.38" y="624.29" width="2.26" height="9.71" fill="#ff8a8a"/><rect x="1164.38" y="629.63" width="2.26" height="4.37" fill="#ff0000"/><rect x="1167.64" y="617.17" width="2.26" height="16.83" fill="#62ffff"/><rect x="1167.64" y="622.84" width="2.26" height="11.16" fill="#002c78"/><rect x="1167.64" y="629.63" width="2.26" height="4.37" fill="#ff8a8a"/><rect x="1167.64" y="631.41" width="2.26" height="2.59" fill="#ff0000"/><rect x="1170.90" y="606.98" width="2.26" height="27.02" fill="#62ffff"/><rect x="1170.90" y="615.88" width="2.26" height="18.12" fill="#002c78"/><rect x="1170.90" y="624.62" width="2.26" height="9.38" fill="#ff8a8a"/><rect x="1170.90" y="630.93" width="2.26" height="3.07" fill="#ff0000"/><rect x="1174.16" y="620.73" width="2.26" height="13.27" fill="#62ffff"/><rect x="1174.16" y="624.29" width="2.26" height="9.71" fill="#002c78"/><rect x="1174.16" y="627.53" width="2.26" height="6.47" fill="#ff8a8a"/><rect x="1174.16" y="628.66" width="2.26" height="5.34" fill="#ff0000"/><rect x="1177.42" y="617.17" width="2.26" height="16.83" fill="#62ffff"/><rect x="1177.42" y="622.19" width="2.26" height="11.81" fill="#002c78"/><rect x="1177.42" y="627.85" width="2.26" height="6.15" fill="#ff8a8a"/><rect x="1177.42" y="629.63" width="2.26" height="4.37" fill="#ff0000"/><rect x="1180.68" y="618.95" width="2.26" height="15.05" fill="#62ffff"/><rect x="1180.68" y="621.70" width="2.26" height="12.30" fill="#002c78"/><rect x="1180.68" y="626.88" width="2.26" height="7.12" fill="#ff8a8a"/><rect x="1180.68" y="628.66" width="2.26" height="5.34" fill="#ff0000"/><rect x="1183.94" y="623.32" width="2.26" height="10.68" fill="#62ffff"/><rect x="1183.94" y="624.29" width="2.26" height="9.71" fill="#002c78"/><rect x="1183.94" y="628.66" width="2.26" height="5.34" fill="#ff8a8a"/><rect x="1183.94" y="630.93" width="2.26" height="3.07" fill="#ff0000"/><rect x="1187.20" y="617.17" width="2.26" height="16.83" fill="#62ffff"/><rect x="1187.20" y="619.92" width="2.26" height="14.08" fill="#002c78"/><rect x="1187.20" y="625.10" width="2.26" height="8.90" fill="#ff8a8a"/><rect x="1187.20" y="630.93" width="2.26" height="3.07" fill="#ff0000"/><rect x="1190.46" y="595.65" width="2.26" height="38.35" fill="#62ffff"/><rect x="1190.46" y="605.20" width="2.26" height="28.80" fill="#002c78"/><rect x="1190.46" y="616.36" width="2.26" height="17.64" fill="#ff8a8a"/><rect x="1190.46" y="625.10" width="2.26" height="8.90" fill="#ff0000"/><rect x="1193.72" y="615.39" width="2.26" height="18.61" fill="#62ffff"/><rect x="1193.72" y="619.92" width="2.26" height="14.08" fill="#002c78"/><rect x="1193.72" y="624.29" width="2.26" height="9.71" fill="#ff8a8a"/><rect x="1193.72" y="629.63" width="2.26" height="4.37" fill="#ff0000"/><rect x="1196.98" y="624.29" width="2.26" height="9.71" fill="#62ffff"/><rect x="1196.98" y="626.88" width="2.26" height="7.12" fill="#002c78"/><rect x="1196.98" y="629.63" width="2.26" height="4.37" fill="#ff8a8a"/><rect x="1196.98" y="632.22" width="2.26" height="1.78" fill="#ff0000"/><rect x="1200.24" y="622.51" width="2.26" height="11.49" fill="#62ffff"/><rect x="1200.24" y="626.88" width="2.26" height="7.12" fill="#002c78"/><rect x="1200.24" y="629.31" width="2.26" height="4.69" fill="#ff8a8a"/><rect x="1200.24" y="631.41" width="2.26" height="2.59" fill="#ff0000"/><rect x="1203.50" y="621.70" width="2.26" height="12.30" fill="#62ffff"/><rect x="1203.50" y="625.10" width="2.26" height="8.90" fill="#002c78"/><rect x="1203.50" y="628.66" width="2.26" height="5.34" fill="#ff8a8a"/><rect x="1203.50" y="632.22" width="2.26" height="1.78" fill="#ff0000"/><rect x="1206.76" y="620.73" width="2.26" height="13.27" fill="#62ffff"/><rect x="1206.76" y="624.29" width="2.26" height="9.71" fill="#002c78"/><rect x="1206.76" y="628.18" width="2.26" height="5.82" fill="#ff8a8a"/><rect x="1206.76" y="630.93" width="2.26" height="3.07" fill="#ff0000"/><rect x="1210.02" y="620.73" width="2.26" height="13.27" fill="#62ffff"/><rect x="1210.02" y="624.29" width="2.26" height="9.71" fill="#002c78"/><rect x="1210.02" y="628.66" width="2.26" height="5.34" fill="#ff8a8a"/><rect x="1210.02" y="631.41" width="2.26" height="2.59" fill="#ff0000"/><rect x="1213.28" y="621.70" width="2.26" height="12.30" fill="#62ffff"/><rect x="1213.28" y="626.40" width="2.26" height="7.60" fill="#002c78"/><rect x="1213.28" y="629.63" width="2.26" height="4.37" fill="#ff8a8a"/><rect x="1213.28" y="631.73" width="2.26" height="2.27" fill="#ff0000"/><rect x="371.3" y="471.5" width="1.4" height="163" fill="#6a6a6a"/><rect x="4" y="633.3" width="1214" height="1.4" fill="#6a6a6a"/><rect x="371.50" y="634" width="1" height="4" fill="#6a6a6a"/><rect x="411.88" y="634" width="1" height="4" fill="#6a6a6a"/><rect x="452.26" y="634" width="1" height="4" fill="#6a6a6a"/><rect x="492.64" y="634" width="1" height="4" fill="#6a6a6a"/><rect x="533.02" y="634" width="1" height="4" fill="#6a6a6a"/><rect x="573.40" y="634" width="1" height="4" fill="#6a6a6a"/><rect x="613.78" y="634" width="1" height="4" fill="#6a6a6a"/><rect x="654.16" y="634" width="1" height="4" fill="#6a6a6a"/><rect x="694.54" y="634" width="1" height="4" fill="#6a6a6a"/><rect x="734.92" y="634" width="1" height="4" fill="#6a6a6a"/><rect x="775.30" y="634" width="1" height="4" fill="#6a6a6a"/><rect x="815.68" y="634" width="1" height="4" fill="#6a6a6a"/><rect x="856.06" y="634" width="1" height="4" fill="#6a6a6a"/><rect x="896.44" y="634" width="1" height="4" fill="#6a6a6a"/><rect x="936.82" y="634" width="1" height="4" fill="#6a6a6a"/><rect x="977.20" y="634" width="1" height="4" fill="#6a6a6a"/><rect x="1017.58" y="634" width="1" height="4" fill="#6a6a6a"/><rect x="1057.96" y="634" width="1" height="4" fill="#6a6a6a"/><rect x="1098.34" y="634" width="1" height="4" fill="#6a6a6a"/><rect x="1138.72" y="634" width="1" height="4" fill="#6a6a6a"/><rect x="1179.10" y="634" width="1" height="4" fill="#6a6a6a"/><rect x="1219.48" y="634" width="1" height="4" fill="#6a6a6a"/><rect x="573" y="455.5" width="584" height="196.5" fill="rgb(15,115,190)" fill-opacity="0.2"/><rect x="572.5" y="455.5" width="1" height="196.5" fill="#8ab8e0"/><rect x="1156.5" y="455.5" width="1" height="196.5" fill="#8ab8e0"/></svg>
<svg style="position:absolute;left:6px;top:440px" width="13" height="11" viewBox="0 0 13 11"><rect x="0" y="0" width="0.8" height="10" fill="#b0b0b0"/><rect x="1.5" y="6" width="1.6" height="4" fill="#1a6ab0"/><rect x="3.7" y="4" width="1.6" height="6" fill="#2a9a4a"/><rect x="5.9" y="1" width="1.6" height="9" fill="#1a6ab0"/><rect x="8.100000000000001" y="3" width="1.6" height="7" fill="#2a9a4a"/><rect x="10.3" y="5" width="1.6" height="5" fill="#1a6ab0"/><rect x="0" y="9.6" width="12" height="0.8" fill="#b0b0b0"/></svg>
<svg style="position:absolute;left:75px;top:440px" width="9" height="9" viewBox="0 0 9 9"><path d="M1,1 L8,8 M8,1 L1,8" stroke="#8a8a8a" stroke-width="2.6" stroke-linecap="round"/><path d="M1,1 L8,8 M8,1 L1,8" stroke="#f8f8f8" stroke-width="1.1" stroke-linecap="round"/></svg>
<svg style="position:absolute;left:93px;top:438.5px" width="13" height="12" viewBox="0 0 13 12"><rect x="0.5" y="0.5" width="12" height="11" rx="1.5" fill="#e4e4e4" stroke="#a8a8a8" stroke-width="0.8"/><rect x="0.5" y="0.5" width="12" height="4.5" rx="1" fill="#3a8a2a"/><path d="M2,1.5 h2 M3,1.5 v3 M5.5,1.5 h2 M6.5,1.5 v3 M9,1.5 h2 v3" stroke="#e8ffe0" stroke-width="0.7"/><path d="M2,8 h9" stroke="#c8c8c8" stroke-width="0.8"/></svg>
<svg width="1239" height="898" style="position:absolute;left:0;top:0"><rect x="1175.5" y="435.5" width="18" height="17" fill="#cce8ff" stroke="#99d1ff" stroke-width="1"/><rect x="1178" y="438" width="0.9" height="12" fill="#6080a0"/><rect x="1178" y="449.3" width="12" height="0.9" fill="#6080a0"/><circle cx="1181" cy="440.3" r="1.2" fill="#e81010"/><circle cx="1185" cy="440" r="1.2" fill="#2a7ac8"/><circle cx="1189" cy="442.5" r="1.2" fill="#2a7ac8"/><circle cx="1184.2" cy="445" r="1.2" fill="#e81010"/><circle cx="1181" cy="447.3" r="1.2" fill="#2a7ac8"/><circle cx="1189" cy="447.5" r="1.2" fill="#e81010"/><rect x="1198.5" y="439.5" width="8" height="3" rx="1" fill="none" stroke="#7a7a7a" stroke-width="1"/><rect x="1217.5" y="439.5" width="8" height="8.5" rx="1" fill="none" stroke="#7a7a7a" stroke-width="1"/><rect x="1217.5" y="439.5" width="8" height="2" fill="#7a7a7a"/></svg>
<div style="position:absolute;top:468.47px;font-size:9.6px;line-height:9.6px;color:#333333;white-space:nowrap;letter-spacing:0.3px;left:-34.39999999999998px;width:400px;text-align:right;">100%</div>
<div style="position:absolute;top:508.92px;font-size:9.6px;line-height:9.6px;color:#333333;white-space:nowrap;letter-spacing:0.3px;left:-34.39999999999998px;width:400px;text-align:right;">75%</div>
<div style="position:absolute;top:549.37px;font-size:9.6px;line-height:9.6px;color:#333333;white-space:nowrap;letter-spacing:0.3px;left:-34.39999999999998px;width:400px;text-align:right;">50%</div>
<div style="position:absolute;top:589.82px;font-size:9.6px;line-height:9.6px;color:#333333;white-space:nowrap;letter-spacing:0.3px;left:-34.39999999999998px;width:400px;text-align:right;">25%</div>
<div style="position:absolute;top:639.77px;font-size:9.6px;line-height:9.6px;color:#333333;white-space:nowrap;letter-spacing:0.45px;left:172.0px;width:400px;text-align:center;">0s</div>
<div style="position:absolute;top:639.77px;font-size:9.6px;line-height:9.6px;color:#333333;white-space:nowrap;letter-spacing:0.45px;left:212.38px;width:400px;text-align:center;">1s</div>
<div style="position:absolute;top:639.77px;font-size:9.6px;line-height:9.6px;color:#333333;white-space:nowrap;letter-spacing:0.45px;left:252.76px;width:400px;text-align:center;">2s</div>
<div style="position:absolute;top:639.77px;font-size:9.6px;line-height:9.6px;color:#333333;white-space:nowrap;letter-spacing:0.45px;left:293.14px;width:400px;text-align:center;">3s</div>
<div style="position:absolute;top:639.77px;font-size:9.6px;line-height:9.6px;color:#333333;white-space:nowrap;letter-spacing:0.45px;left:333.52px;width:400px;text-align:center;">4s</div>
<div style="position:absolute;top:639.77px;font-size:9.6px;line-height:9.6px;color:#333333;white-space:nowrap;letter-spacing:0.45px;left:373.9px;width:400px;text-align:center;">5s</div>
<div style="position:absolute;top:639.77px;font-size:9.6px;line-height:9.6px;color:#333333;white-space:nowrap;letter-spacing:0.45px;left:414.28px;width:400px;text-align:center;">6s</div>
<div style="position:absolute;top:639.77px;font-size:9.6px;line-height:9.6px;color:#333333;white-space:nowrap;letter-spacing:0.45px;left:454.6600000000001px;width:400px;text-align:center;">7s</div>
<div style="position:absolute;top:639.77px;font-size:9.6px;line-height:9.6px;color:#333333;white-space:nowrap;letter-spacing:0.45px;left:495.03999999999996px;width:400px;text-align:center;">8s</div>
<div style="position:absolute;top:639.77px;font-size:9.6px;line-height:9.6px;color:#333333;white-space:nowrap;letter-spacing:0.45px;left:535.4200000000001px;width:400px;text-align:center;">9s</div>
<div style="position:absolute;top:639.77px;font-size:9.6px;line-height:9.6px;color:#333333;white-space:nowrap;letter-spacing:0.45px;left:575.8px;width:400px;text-align:center;">10s</div>
<div style="position:absolute;top:639.77px;font-size:9.6px;line-height:9.6px;color:#333333;white-space:nowrap;letter-spacing:0.45px;left:616.1800000000001px;width:400px;text-align:center;">11s</div>
<div style="position:absolute;top:639.77px;font-size:9.6px;line-height:9.6px;color:#333333;white-space:nowrap;letter-spacing:0.45px;left:656.5600000000001px;width:400px;text-align:center;">12s</div>
<div style="position:absolute;top:639.77px;font-size:9.6px;line-height:9.6px;color:#333333;white-space:nowrap;letter-spacing:0.45px;left:696.94px;width:400px;text-align:center;">13s</div>
<div style="position:absolute;top:639.77px;font-size:9.6px;line-height:9.6px;color:#333333;white-space:nowrap;letter-spacing:0.45px;left:737.32px;width:400px;text-align:center;">14s</div>
<div style="position:absolute;top:639.77px;font-size:9.6px;line-height:9.6px;color:#333333;white-space:nowrap;letter-spacing:0.45px;left:777.7px;width:400px;text-align:center;">15s</div>
<div style="position:absolute;top:639.77px;font-size:9.6px;line-height:9.6px;color:#333333;white-space:nowrap;letter-spacing:0.45px;left:818.08px;width:400px;text-align:center;">16s</div>
<div style="position:absolute;top:639.77px;font-size:9.6px;line-height:9.6px;color:#333333;white-space:nowrap;letter-spacing:0.45px;left:858.46px;width:400px;text-align:center;">17s</div>
<div style="position:absolute;top:639.77px;font-size:9.6px;line-height:9.6px;color:#333333;white-space:nowrap;letter-spacing:0.45px;left:898.8400000000001px;width:400px;text-align:center;">18s</div>
<div style="position:absolute;top:639.77px;font-size:9.6px;line-height:9.6px;color:#333333;white-space:nowrap;letter-spacing:0.45px;left:939.22px;width:400px;text-align:center;">19s</div>
<div style="position:absolute;top:639.77px;font-size:9.6px;line-height:9.6px;color:#333333;white-space:nowrap;letter-spacing:0.45px;left:979.5999999999999px;width:400px;text-align:center;">20s</div>
<div style="position:absolute;left:1200px;top:630px;width:18px;height:20px;overflow:hidden;"><div style="position:absolute;top:9.77px;font-size:9.6px;line-height:9.6px;color:#333333;white-space:nowrap;letter-spacing:0.45px;left:14px;">21s</div></div>
<div style="position:absolute;left:4px;top:652px;width:1214px;height:15px;background:#f0f0f0;"></div>
<div style="position:absolute;left:1218px;top:455px;width:15px;height:212px;background:#f0f0f0;"></div>
<svg style="position:absolute;left:6px;top:654px" width="10" height="11" viewBox="0 0 10 11"><path d="M6.5,2 L3,5.5 L6.5,9" fill="none" stroke="#a8a8a8" stroke-width="1.1"/></svg>
<svg style="position:absolute;left:1206px;top:654px" width="10" height="11" viewBox="0 0 10 11"><path d="M3,2 L6.5,5.5 L3,9" fill="none" stroke="#a8a8a8" stroke-width="1.1"/></svg>
<svg style="position:absolute;left:1219px;top:459px" width="13" height="10" viewBox="0 0 13 10"><path d="M3,6.5 L6.5,3 L10,6.5" fill="none" stroke="#a0a0a0" stroke-width="1.1"/></svg>
<svg style="position:absolute;left:1219px;top:652px" width="13" height="10" viewBox="0 0 13 10"><path d="M3,3 L6.5,6.5 L10,3" fill="none" stroke="#a0a0a0" stroke-width="1.1"/></svg>
<div style="position:absolute;left:845.8px;top:212.4px;width:38.2px;height:14.8px;background:#eed262;border:1px solid #f4c232;border-bottom:1.5px solid #f0a818;border-radius:2px;box-sizing:border-box;"></div>
<div style="position:absolute;top:215.88px;font-size:9px;line-height:9px;color:#262614;white-space:nowrap;font-weight:bold;letter-spacing:0.55px;left:664.9px;width:400px;text-align:center;">14.43 s</div>
<div style="position:absolute;left:845.3px;top:456.6px;width:38.2px;height:14.8px;background:#eed262;border:1px solid #f4c232;border-bottom:1.5px solid #f0a818;border-radius:2px;box-sizing:border-box;"></div>
<div style="position:absolute;top:460.08px;font-size:9px;line-height:9px;color:#262614;white-space:nowrap;font-weight:bold;letter-spacing:0.55px;left:664.4px;width:400px;text-align:center;">14.43 s</div>
<div style="position:absolute;left:1237px;top:2px;width:1.2px;height:668px;background:#c4c4c4;"></div>
<div style="position:absolute;left:2px;top:672px;width:1240px;height:221px;border:1px solid #b4b4b4;border-bottom:none;border-radius:3px 0 0 0;background:#fff;box-sizing:border-box;"></div>
<div style="position:absolute;left:99px;top:673px;width:1140px;height:18px;background:#f0f0f0;"></div>
<div style="position:absolute;left:99px;top:690.5px;width:1140px;height:1px;background:#b4b4b4;"></div>
<div style="position:absolute;left:199.0px;top:673px;width:1px;height:18px;background:#b4b4b4;"></div>
<div style="position:absolute;left:305.5px;top:673px;width:1px;height:18px;background:#b4b4b4;"></div>
<div style="position:absolute;left:374.0px;top:673px;width:1px;height:18px;background:#b4b4b4;"></div>
<div style="position:absolute;left:439.5px;top:673px;width:1px;height:18px;background:#b4b4b4;"></div>
<div style="position:absolute;left:98.5px;top:673px;width:1px;height:20px;background:#b4b4b4;"></div>
<div style="position:absolute;top:678.03px;font-size:10px;line-height:10px;color:#20203a;white-space:nowrap;letter-spacing:-0.43px;left:21.2px;">Process Table</div>
<div style="position:absolute;top:678.03px;font-size:10px;line-height:10px;color:#20203a;white-space:nowrap;letter-spacing:-0.27px;left:119.2px;">Event-Chain Table</div>
<div style="position:absolute;top:678.03px;font-size:10px;line-height:10px;color:#20203a;white-space:nowrap;letter-spacing:-0.21px;left:219.2px;">Requirements Table</div>
<div style="position:absolute;top:678.03px;font-size:10px;line-height:10px;color:#20203a;white-space:nowrap;letter-spacing:-0.24px;left:326.1px;">Load Table</div>
<div style="position:absolute;top:678.03px;font-size:10px;line-height:10px;color:#20203a;white-space:nowrap;letter-spacing:-0.23px;left:394.7px;">Properties</div>
<svg style="position:absolute;left:84.5px;top:677.5px" width="9" height="9" viewBox="0 0 9 9"><path d="M1,1 L8,8 M8,1 L1,8" stroke="#8a8a8a" stroke-width="2.6" stroke-linecap="round"/><path d="M1,1 L8,8 M8,1 L1,8" stroke="#f8f8f8" stroke-width="1.1" stroke-linecap="round"/></svg>
<svg width="1239" height="898" style="position:absolute;left:0;top:0"><circle cx="9" cy="680.5" r="3.8" fill="none" stroke="#9a9a9a" stroke-width="1.2"/><rect x="10" y="680" width="6" height="8" fill="#e8e8e8" stroke="#a0a0a0" stroke-width="0.8"/><circle cx="7" cy="685.5" r="2.2" fill="#f0f0f0" stroke="#909090" stroke-width="0.8"/><path d="M103,677 V689 H111" fill="none" stroke="#303030" stroke-width="1"/><path d="M104.5,684 L107,682.5 L110,680 L113,677.5" fill="none" stroke="#2a8a6a" stroke-width="0.9" stroke-dasharray="1.2,0.8"/><rect x="110.5" y="682" width="5" height="7" fill="#e8e8e8" stroke="#a0a0a0" stroke-width="0.7"/><rect x="203" y="677" width="3" height="2" fill="#2a8ac8"/><rect x="203" y="681" width="3" height="2" fill="#2a8ac8"/><rect x="203" y="685" width="3" height="2" fill="#2a8ac8"/><rect x="206.5" y="680" width="4" height="4" fill="#202020"/><path d="M207,678 L209,680 L212,676" fill="none" stroke="#202020" stroke-width="1.1"/><rect x="211" y="682" width="5" height="7" fill="#e8e8e8" stroke="#a0a0a0" stroke-width="0.7"/><rect x="310" y="677" width="0.8" height="12" fill="#b0b0b0"/><rect x="311.5" y="684" width="1.5" height="4" fill="#1a6ab0"/><rect x="313.5" y="682" width="1.5" height="6" fill="#2a9a4a"/><rect x="315.5" y="680" width="1.5" height="8" fill="#1a6ab0"/><rect x="317.5" y="682" width="5.5" height="7" fill="#e8e8e8" stroke="#a0a0a0" stroke-width="0.7"/><rect x="379" y="677.5" width="12" height="10.5" fill="#f4f6fa" stroke="#5a6a8a" stroke-width="0.9"/><rect x="379" y="677.5" width="12" height="2.2" fill="#6a7aa0"/><path d="M383,680 V688 M379,682.5 H391 M379,685.2 H391" stroke="#a0a8c0" stroke-width="0.6"/></svg>
<div style="position:absolute;left:4px;top:693px;width:37px;height:20.5px;background:#efefef;"></div>
<div style="position:absolute;top:699.74px;font-size:10px;line-height:10px;color:#20203a;white-space:nowrap;-webkit-text-stroke:0.2px currentColor;left:5.8px;"><span style="display:inline-block;transform:scaleX(0.87);transform-origin:left 50%;">Search:</span></div>
<div style="position:absolute;left:41px;top:695px;width:1198px;height:17px;border:1px solid #7a7a7a;border-right:none;box-sizing:border-box;background:#fff;"></div>
<svg style="position:absolute;left:44px;top:698px" width="10" height="11" viewBox="0 0 10 11"><circle cx="6.5" cy="3.5" r="2.6" fill="none" stroke="#606060" stroke-width="1.1"/><path d="M4.6,5.4 L1.2,8.8" stroke="#606060" stroke-width="1.3"/></svg>
<div style="position:absolute;left:160.5px;top:733px;width:108.2px;height:160px;background:#f2f2f2;"></div>
<div style="position:absolute;top:719.37px;font-size:10.2px;line-height:10.2px;color:#20203a;white-space:nowrap;-webkit-text-stroke:0.2px currentColor;left:9.5px;"><span style="display:inline-block;transform:scaleX(0.937);transform-origin:left 50%;">Name</span></div>
<div style="position:absolute;top:719.37px;font-size:10.2px;line-height:10.2px;color:#20203a;white-space:nowrap;-webkit-text-stroke:0.2px currentColor;left:168.5px;"><span style="display:inline-block;transform:scaleX(0.9);transform-origin:left 50%;">CPU Load Processor_1</span></div>
<div style="position:absolute;top:719.37px;font-size:10.2px;line-height:10.2px;color:#20203a;white-space:nowrap;-webkit-text-stroke:0.2px currentColor;left:276.7px;"><span style="display:inline-block;transform:scaleX(0.9);transform-origin:left 50%;">CPU Load Core_0</span></div>
<div style="position:absolute;top:719.37px;font-size:10.2px;line-height:10.2px;color:#20203a;white-space:nowrap;-webkit-text-stroke:0.2px currentColor;left:362.3px;"><span style="display:inline-block;transform:scaleX(0.9);transform-origin:left 50%;">CPU Load Core_1</span></div>
<div style="position:absolute;top:719.37px;font-size:10.2px;line-height:10.2px;color:#20203a;white-space:nowrap;-webkit-text-stroke:0.2px currentColor;left:449.4px;"><span style="display:inline-block;transform:scaleX(0.9);transform-origin:left 50%;">CPU Load Core_2</span></div>
<div style="position:absolute;top:719.37px;font-size:10.2px;line-height:10.2px;color:#20203a;white-space:nowrap;-webkit-text-stroke:0.2px currentColor;left:536.4px;"><span style="display:inline-block;transform:scaleX(0.9);transform-origin:left 50%;">CPU Load Core_3</span></div>
<div style="position:absolute;top:719.37px;font-size:10.2px;line-height:10.2px;color:#20203a;white-space:nowrap;-webkit-text-stroke:0.2px currentColor;left:621.8px;"><span style="display:inline-block;transform:scaleX(0.9);transform-origin:left 50%;">NET min [ms]</span></div>
<div style="position:absolute;top:719.37px;font-size:10.2px;line-height:10.2px;color:#20203a;white-space:nowrap;-webkit-text-stroke:0.2px currentColor;left:693px;"><span style="display:inline-block;transform:scaleX(0.9);transform-origin:left 50%;">NET max [ms]</span></div>
<div style="position:absolute;top:719.37px;font-size:10.2px;line-height:10.2px;color:#20203a;white-space:nowrap;-webkit-text-stroke:0.2px currentColor;left:765.5px;"><span style="display:inline-block;transform:scaleX(0.9);transform-origin:left 50%;">RT max [ms]</span></div>
<div style="position:absolute;top:719.37px;font-size:10.2px;line-height:10.2px;color:#20203a;white-space:nowrap;-webkit-text-stroke:0.2px currentColor;left:830.4px;"><span style="display:inline-block;transform:scaleX(0.9);transform-origin:left 50%;">S2S avg [ms]</span></div>
<svg style="position:absolute;left:210px;top:713px" width="10" height="5" viewBox="0 0 10 5"><path d="M1,0.5 L5,3.5 L9,0.5" fill="none" stroke="#8a8a8a" stroke-width="0.9"/></svg>
<div style="position:absolute;left:160.0px;top:713px;width:1px;height:179px;background:#e4e4e4;"></div>
<div style="position:absolute;left:268.2px;top:713px;width:1px;height:179px;background:#e4e4e4;"></div>
<div style="position:absolute;left:353.8px;top:713px;width:1px;height:179px;background:#e4e4e4;"></div>
<div style="position:absolute;left:440.9px;top:713px;width:1px;height:179px;background:#e4e4e4;"></div>
<div style="position:absolute;left:527.9px;top:713px;width:1px;height:179px;background:#e4e4e4;"></div>
<div style="position:absolute;left:613.3px;top:713px;width:1px;height:179px;background:#e4e4e4;"></div>
<div style="position:absolute;left:684.5px;top:713px;width:1px;height:179px;background:#e4e4e4;"></div>
<div style="position:absolute;left:757.0px;top:713px;width:1px;height:179px;background:#e4e4e4;"></div>
<div style="position:absolute;left:821.9px;top:713px;width:1px;height:179px;background:#e4e4e4;"></div>
<div style="position:absolute;left:889.5px;top:713px;width:1px;height:179px;background:#e4e4e4;"></div>
<div style="position:absolute;left:4px;top:746.8px;width:1235px;height:1px;background:#e6e6e6;"></div>
<div style="position:absolute;left:36.5px;top:733.3px;width:123.5px;height:14px;overflow:hidden;"><div style="position:absolute;top:2.07px;font-size:10.2px;line-height:10.2px;color:#20203a;white-space:nowrap;-webkit-text-stroke:0.2px currentColor;left:0px;"><span style="display:inline-block;transform:scaleX(0.915);transform-origin:left 50%;">app (TID:8957, PID:8956, PPID:8956)</span></div></div>
<svg style="position:absolute;left:19px;top:734.3px" width="14" height="13" viewBox="0 0 14 13"><circle cx="10" cy="4.7" r="2.6" fill="#d8c000" stroke="#44446a" stroke-width="0.9"/><circle cx="10" cy="4.7" r="0.9" fill="#5050a0"/><circle cx="5" cy="7.9" r="3.7" fill="#e4d000" stroke="#44446a" stroke-width="0.9"/><circle cx="5" cy="7.9" r="1.35" fill="#dcdcff" stroke="#8a8060" stroke-width="0.4"/></svg>
<div style="position:absolute;top:736.07px;font-size:10.2px;line-height:10.2px;color:#ff2035;white-space:nowrap;-webkit-text-stroke:0.2px currentColor;left:-134.10000000000002px;width:400px;text-align:right;"><span style="display:inline-block;transform:scaleX(0.86);transform-origin:right 50%;">11.97 %</span></div>
<div style="position:absolute;top:736.07px;font-size:10.2px;line-height:10.2px;color:#20203a;white-space:nowrap;-webkit-text-stroke:0.2px currentColor;left:-48.5px;width:400px;text-align:right;"><span style="display:inline-block;transform:scaleX(0.86);transform-origin:right 50%;">0.00 %</span></div>
<div style="position:absolute;top:736.07px;font-size:10.2px;line-height:10.2px;color:#20203a;white-space:nowrap;-webkit-text-stroke:0.2px currentColor;left:38.599999999999966px;width:400px;text-align:right;"><span style="display:inline-block;transform:scaleX(0.86);transform-origin:right 50%;">0.00 %</span></div>
<div style="position:absolute;top:736.07px;font-size:10.2px;line-height:10.2px;color:#ff2035;white-space:nowrap;-webkit-text-stroke:0.2px currentColor;left:125.60000000000002px;width:400px;text-align:right;"><span style="display:inline-block;transform:scaleX(0.86);transform-origin:right 50%;">47.86 %</span></div>
<div style="position:absolute;top:736.07px;font-size:10.2px;line-height:10.2px;color:#20203a;white-space:nowrap;-webkit-text-stroke:0.2px currentColor;left:211.0px;width:400px;text-align:right;"><span style="display:inline-block;transform:scaleX(0.86);transform-origin:right 50%;">0.00 %</span></div>
<div style="position:absolute;top:736.07px;font-size:10.2px;line-height:10.2px;color:#20203a;white-space:nowrap;-webkit-text-stroke:0.2px currentColor;left:282.20000000000005px;width:400px;text-align:right;"><span style="display:inline-block;transform:scaleX(0.86);transform-origin:right 50%;">1.07056</span></div>
<div style="position:absolute;top:736.07px;font-size:10.2px;line-height:10.2px;color:#20203a;white-space:nowrap;-webkit-text-stroke:0.2px currentColor;left:354.70000000000005px;width:400px;text-align:right;"><span style="display:inline-block;transform:scaleX(0.86);transform-origin:right 50%;">1901.31221</span></div>
<div style="position:absolute;top:736.07px;font-size:10.2px;line-height:10.2px;color:#20203a;white-space:nowrap;-webkit-text-stroke:0.2px currentColor;left:419.6px;width:400px;text-align:right;"><span style="display:inline-block;transform:scaleX(0.86);transform-origin:right 50%;">1906.86247</span></div>
<div style="position:absolute;top:736.07px;font-size:10.2px;line-height:10.2px;color:#20203a;white-space:nowrap;-webkit-text-stroke:0.2px currentColor;left:487.20000000000005px;width:400px;text-align:right;"><span style="display:inline-block;transform:scaleX(0.86);transform-origin:right 50%;">295.66164</span></div>
<div style="position:absolute;left:4px;top:761.52px;width:1235px;height:1px;background:#e6e6e6;"></div>
<div style="position:absolute;left:36.5px;top:748.02px;width:123.5px;height:14px;overflow:hidden;"><div style="position:absolute;top:2.07px;font-size:10.2px;line-height:10.2px;color:#20203a;white-space:nowrap;-webkit-text-stroke:0.2px currentColor;left:0px;"><span style="display:inline-block;transform:scaleX(0.915);transform-origin:left 50%;">app (TID:8958, PID:8956, PPID:8956)</span></div></div>
<svg style="position:absolute;left:19px;top:749.02px" width="14" height="13" viewBox="0 0 14 13"><circle cx="10" cy="4.7" r="2.6" fill="#d8c000" stroke="#44446a" stroke-width="0.9"/><circle cx="10" cy="4.7" r="0.9" fill="#5050a0"/><circle cx="5" cy="7.9" r="3.7" fill="#e4d000" stroke="#44446a" stroke-width="0.9"/><circle cx="5" cy="7.9" r="1.35" fill="#dcdcff" stroke="#8a8060" stroke-width="0.4"/></svg>
<div style="position:absolute;top:750.79px;font-size:10.2px;line-height:10.2px;color:#ff2035;white-space:nowrap;-webkit-text-stroke:0.2px currentColor;left:-134.10000000000002px;width:400px;text-align:right;"><span style="display:inline-block;transform:scaleX(0.86);transform-origin:right 50%;">11.96 %</span></div>
<div style="position:absolute;top:750.79px;font-size:10.2px;line-height:10.2px;color:#ff2035;white-space:nowrap;-webkit-text-stroke:0.2px currentColor;left:-48.5px;width:400px;text-align:right;"><span style="display:inline-block;transform:scaleX(0.86);transform-origin:right 50%;">47.85 %</span></div>
<div style="position:absolute;top:750.79px;font-size:10.2px;line-height:10.2px;color:#20203a;white-space:nowrap;-webkit-text-stroke:0.2px currentColor;left:38.599999999999966px;width:400px;text-align:right;"><span style="display:inline-block;transform:scaleX(0.86);transform-origin:right 50%;">0.00 %</span></div>
<div style="position:absolute;top:750.79px;font-size:10.2px;line-height:10.2px;color:#20203a;white-space:nowrap;-webkit-text-stroke:0.2px currentColor;left:125.60000000000002px;width:400px;text-align:right;"><span style="display:inline-block;transform:scaleX(0.86);transform-origin:right 50%;">0.00 %</span></div>
<div style="position:absolute;top:750.79px;font-size:10.2px;line-height:10.2px;color:#20203a;white-space:nowrap;-webkit-text-stroke:0.2px currentColor;left:211.0px;width:400px;text-align:right;"><span style="display:inline-block;transform:scaleX(0.86);transform-origin:right 50%;">0.00 %</span></div>
<div style="position:absolute;top:750.79px;font-size:10.2px;line-height:10.2px;color:#20203a;white-space:nowrap;-webkit-text-stroke:0.2px currentColor;left:282.20000000000005px;width:400px;text-align:right;"><span style="display:inline-block;transform:scaleX(0.86);transform-origin:right 50%;">0.35718</span></div>
<div style="position:absolute;top:750.79px;font-size:10.2px;line-height:10.2px;color:#20203a;white-space:nowrap;-webkit-text-stroke:0.2px currentColor;left:354.70000000000005px;width:400px;text-align:right;"><span style="display:inline-block;transform:scaleX(0.86);transform-origin:right 50%;">713.12580</span></div>
<div style="position:absolute;top:750.79px;font-size:10.2px;line-height:10.2px;color:#20203a;white-space:nowrap;-webkit-text-stroke:0.2px currentColor;left:419.6px;width:400px;text-align:right;"><span style="display:inline-block;transform:scaleX(0.86);transform-origin:right 50%;">716.61325</span></div>
<div style="position:absolute;top:750.79px;font-size:10.2px;line-height:10.2px;color:#20203a;white-space:nowrap;-webkit-text-stroke:0.2px currentColor;left:487.20000000000005px;width:400px;text-align:right;"><span style="display:inline-block;transform:scaleX(0.86);transform-origin:right 50%;">105.81645</span></div>
<div style="position:absolute;left:4px;top:776.24px;width:1235px;height:1px;background:#e6e6e6;"></div>
<div style="position:absolute;left:36.5px;top:762.74px;width:123.5px;height:14px;overflow:hidden;"><div style="position:absolute;top:2.07px;font-size:10.2px;line-height:10.2px;color:#20203a;white-space:nowrap;-webkit-text-stroke:0.2px currentColor;left:0px;"><span style="display:inline-block;transform:scaleX(0.915);transform-origin:left 50%;">app (TID:8959, PID:8959, PPID:8956)</span></div></div>
<svg style="position:absolute;left:19px;top:763.74px" width="14" height="13" viewBox="0 0 14 13"><circle cx="10" cy="4.7" r="2.6" fill="#d8c000" stroke="#44446a" stroke-width="0.9"/><circle cx="10" cy="4.7" r="0.9" fill="#5050a0"/><circle cx="5" cy="7.9" r="3.7" fill="#e4d000" stroke="#44446a" stroke-width="0.9"/><circle cx="5" cy="7.9" r="1.35" fill="#dcdcff" stroke="#8a8060" stroke-width="0.4"/></svg>
<div style="position:absolute;top:765.51px;font-size:10.2px;line-height:10.2px;color:#20203a;white-space:nowrap;-webkit-text-stroke:0.2px currentColor;left:-134.10000000000002px;width:400px;text-align:right;"><span style="display:inline-block;transform:scaleX(0.86);transform-origin:right 50%;">1.62 %</span></div>
<div style="position:absolute;top:765.51px;font-size:10.2px;line-height:10.2px;color:#20203a;white-space:nowrap;-webkit-text-stroke:0.2px currentColor;left:-48.5px;width:400px;text-align:right;"><span style="display:inline-block;transform:scaleX(0.86);transform-origin:right 50%;">0.00 %</span></div>
<div style="position:absolute;top:765.51px;font-size:10.2px;line-height:10.2px;color:#20203a;white-space:nowrap;-webkit-text-stroke:0.2px currentColor;left:38.599999999999966px;width:400px;text-align:right;"><span style="display:inline-block;transform:scaleX(0.86);transform-origin:right 50%;">0.00 %</span></div>
<div style="position:absolute;top:765.51px;font-size:10.2px;line-height:10.2px;color:#ff2035;white-space:nowrap;-webkit-text-stroke:0.2px currentColor;left:125.60000000000002px;width:400px;text-align:right;"><span style="display:inline-block;transform:scaleX(0.86);transform-origin:right 50%;">6.50 %</span></div>
<div style="position:absolute;top:765.51px;font-size:10.2px;line-height:10.2px;color:#20203a;white-space:nowrap;-webkit-text-stroke:0.2px currentColor;left:211.0px;width:400px;text-align:right;"><span style="display:inline-block;transform:scaleX(0.86);transform-origin:right 50%;">0.00 %</span></div>
<div style="position:absolute;top:765.51px;font-size:10.2px;line-height:10.2px;color:#20203a;white-space:nowrap;-webkit-text-stroke:0.2px currentColor;left:282.20000000000005px;width:400px;text-align:right;"><span style="display:inline-block;transform:scaleX(0.86);transform-origin:right 50%;">1360.11239</span></div>
<div style="position:absolute;top:765.51px;font-size:10.2px;line-height:10.2px;color:#20203a;white-space:nowrap;-webkit-text-stroke:0.2px currentColor;left:354.70000000000005px;width:400px;text-align:right;"><span style="display:inline-block;transform:scaleX(0.86);transform-origin:right 50%;">1360.11239</span></div>
<div style="position:absolute;top:765.51px;font-size:10.2px;line-height:10.2px;color:#20203a;white-space:nowrap;-webkit-text-stroke:0.2px currentColor;left:419.6px;width:400px;text-align:right;"><span style="display:inline-block;transform:scaleX(0.86);transform-origin:right 50%;">1360.96437</span></div>
<div style="position:absolute;left:4px;top:790.9599999999999px;width:1235px;height:1px;background:#e6e6e6;"></div>
<div style="position:absolute;left:36.5px;top:777.4599999999999px;width:123.5px;height:14px;overflow:hidden;"><div style="position:absolute;top:2.07px;font-size:10.2px;line-height:10.2px;color:#20203a;white-space:nowrap;-webkit-text-stroke:0.2px currentColor;left:0px;"><span style="display:inline-block;transform:scaleX(0.915);transform-origin:left 50%;">app_child (TID:8963, PID:8963, PPID:8956)</span></div></div>
<svg style="position:absolute;left:19px;top:778.4599999999999px" width="14" height="13" viewBox="0 0 14 13"><circle cx="10" cy="4.7" r="2.6" fill="#d8c000" stroke="#44446a" stroke-width="0.9"/><circle cx="10" cy="4.7" r="0.9" fill="#5050a0"/><circle cx="5" cy="7.9" r="3.7" fill="#e4d000" stroke="#44446a" stroke-width="0.9"/><circle cx="5" cy="7.9" r="1.35" fill="#dcdcff" stroke="#8a8060" stroke-width="0.4"/></svg>
<div style="position:absolute;top:780.23px;font-size:10.2px;line-height:10.2px;color:#20203a;white-space:nowrap;-webkit-text-stroke:0.2px currentColor;left:-134.10000000000002px;width:400px;text-align:right;"><span style="display:inline-block;transform:scaleX(0.86);transform-origin:right 50%;">1.58 %</span></div>
<div style="position:absolute;top:780.23px;font-size:10.2px;line-height:10.2px;color:#20203a;white-space:nowrap;-webkit-text-stroke:0.2px currentColor;left:-48.5px;width:400px;text-align:right;"><span style="display:inline-block;transform:scaleX(0.86);transform-origin:right 50%;">0.00 %</span></div>
<div style="position:absolute;top:780.23px;font-size:10.2px;line-height:10.2px;color:#20203a;white-space:nowrap;-webkit-text-stroke:0.2px currentColor;left:38.599999999999966px;width:400px;text-align:right;"><span style="display:inline-block;transform:scaleX(0.86);transform-origin:right 50%;">0.00 %</span></div>
<div style="position:absolute;top:780.23px;font-size:10.2px;line-height:10.2px;color:#ff2035;white-space:nowrap;-webkit-text-stroke:0.2px currentColor;left:125.60000000000002px;width:400px;text-align:right;"><span style="display:inline-block;transform:scaleX(0.86);transform-origin:right 50%;">6.32 %</span></div>
<div style="position:absolute;top:780.23px;font-size:10.2px;line-height:10.2px;color:#20203a;white-space:nowrap;-webkit-text-stroke:0.2px currentColor;left:211.0px;width:400px;text-align:right;"><span style="display:inline-block;transform:scaleX(0.86);transform-origin:right 50%;">0.00 %</span></div>
<div style="position:absolute;top:780.23px;font-size:10.2px;line-height:10.2px;color:#20203a;white-space:nowrap;-webkit-text-stroke:0.2px currentColor;left:282.20000000000005px;width:400px;text-align:right;"><span style="display:inline-block;transform:scaleX(0.86);transform-origin:right 50%;">0.02573</span></div>
<div style="position:absolute;top:780.23px;font-size:10.2px;line-height:10.2px;color:#20203a;white-space:nowrap;-webkit-text-stroke:0.2px currentColor;left:354.70000000000005px;width:400px;text-align:right;"><span style="display:inline-block;transform:scaleX(0.86);transform-origin:right 50%;">501.12907</span></div>
<div style="position:absolute;top:780.23px;font-size:10.2px;line-height:10.2px;color:#20203a;white-space:nowrap;-webkit-text-stroke:0.2px currentColor;left:419.6px;width:400px;text-align:right;"><span style="display:inline-block;transform:scaleX(0.86);transform-origin:right 50%;">503.85761</span></div>
<div style="position:absolute;top:780.23px;font-size:10.2px;line-height:10.2px;color:#20203a;white-space:nowrap;-webkit-text-stroke:0.2px currentColor;left:487.20000000000005px;width:400px;text-align:right;"><span style="display:inline-block;transform:scaleX(0.86);transform-origin:right 50%;">142.75979</span></div>
<div style="position:absolute;left:4px;top:805.68px;width:1235px;height:1px;background:#e6e6e6;"></div>
<div style="position:absolute;left:36.5px;top:792.18px;width:123.5px;height:14px;overflow:hidden;"><div style="position:absolute;top:2.07px;font-size:10.2px;line-height:10.2px;color:#20203a;white-space:nowrap;-webkit-text-stroke:0.2px currentColor;left:0px;"><span style="display:inline-block;transform:scaleX(0.915);transform-origin:left 50%;">Web Content (TID:8698)</span></div></div>
<svg style="position:absolute;left:19px;top:793.18px" width="14" height="13" viewBox="0 0 14 13"><circle cx="10" cy="4.7" r="2.6" fill="#d8c000" stroke="#44446a" stroke-width="0.9"/><circle cx="10" cy="4.7" r="0.9" fill="#5050a0"/><circle cx="5" cy="7.9" r="3.7" fill="#e4d000" stroke="#44446a" stroke-width="0.9"/><circle cx="5" cy="7.9" r="1.35" fill="#dcdcff" stroke="#8a8060" stroke-width="0.4"/></svg>
<div style="position:absolute;top:794.95px;font-size:10.2px;line-height:10.2px;color:#20203a;white-space:nowrap;-webkit-text-stroke:0.2px currentColor;left:-134.10000000000002px;width:400px;text-align:right;"><span style="display:inline-block;transform:scaleX(0.86);transform-origin:right 50%;">1.08 %</span></div>
<div style="position:absolute;top:794.95px;font-size:10.2px;line-height:10.2px;color:#20203a;white-space:nowrap;-webkit-text-stroke:0.2px currentColor;left:-48.5px;width:400px;text-align:right;"><span style="display:inline-block;transform:scaleX(0.86);transform-origin:right 50%;">0.77 %</span></div>
<div style="position:absolute;top:794.95px;font-size:10.2px;line-height:10.2px;color:#20203a;white-space:nowrap;-webkit-text-stroke:0.2px currentColor;left:38.599999999999966px;width:400px;text-align:right;"><span style="display:inline-block;transform:scaleX(0.86);transform-origin:right 50%;">0.97 %</span></div>
<div style="position:absolute;top:794.95px;font-size:10.2px;line-height:10.2px;color:#20203a;white-space:nowrap;-webkit-text-stroke:0.2px currentColor;left:125.60000000000002px;width:400px;text-align:right;"><span style="display:inline-block;transform:scaleX(0.86);transform-origin:right 50%;">0.68 %</span></div>
<div style="position:absolute;top:794.95px;font-size:10.2px;line-height:10.2px;color:#20203a;white-space:nowrap;-webkit-text-stroke:0.2px currentColor;left:211.0px;width:400px;text-align:right;"><span style="display:inline-block;transform:scaleX(0.86);transform-origin:right 50%;">1.91 %</span></div>
<div style="position:absolute;top:794.95px;font-size:10.2px;line-height:10.2px;color:#20203a;white-space:nowrap;-webkit-text-stroke:0.2px currentColor;left:282.20000000000005px;width:400px;text-align:right;"><span style="display:inline-block;transform:scaleX(0.86);transform-origin:right 50%;">0.00369</span></div>
<div style="position:absolute;top:794.95px;font-size:10.2px;line-height:10.2px;color:#20203a;white-space:nowrap;-webkit-text-stroke:0.2px currentColor;left:354.70000000000005px;width:400px;text-align:right;"><span style="display:inline-block;transform:scaleX(0.86);transform-origin:right 50%;">13.56037</span></div>
<div style="position:absolute;top:794.95px;font-size:10.2px;line-height:10.2px;color:#20203a;white-space:nowrap;-webkit-text-stroke:0.2px currentColor;left:419.6px;width:400px;text-align:right;"><span style="display:inline-block;transform:scaleX(0.86);transform-origin:right 50%;">13.87531</span></div>
<div style="position:absolute;top:794.95px;font-size:10.2px;line-height:10.2px;color:#20203a;white-space:nowrap;-webkit-text-stroke:0.2px currentColor;left:487.20000000000005px;width:400px;text-align:right;"><span style="display:inline-block;transform:scaleX(0.86);transform-origin:right 50%;">5.38717</span></div>
<div style="position:absolute;left:4px;top:820.4px;width:1235px;height:1px;background:#e6e6e6;"></div>
<div style="position:absolute;left:36.5px;top:806.9px;width:123.5px;height:14px;overflow:hidden;"><div style="position:absolute;top:2.07px;font-size:10.2px;line-height:10.2px;color:#20203a;white-space:nowrap;-webkit-text-stroke:0.2px currentColor;left:0px;"><span style="display:inline-block;transform:scaleX(0.915);transform-origin:left 50%;">Compositor (TID:8678)</span></div></div>
<svg style="position:absolute;left:19px;top:807.9px" width="14" height="13" viewBox="0 0 14 13"><circle cx="10" cy="4.7" r="2.6" fill="#d8c000" stroke="#44446a" stroke-width="0.9"/><circle cx="10" cy="4.7" r="0.9" fill="#5050a0"/><circle cx="5" cy="7.9" r="3.7" fill="#e4d000" stroke="#44446a" stroke-width="0.9"/><circle cx="5" cy="7.9" r="1.35" fill="#dcdcff" stroke="#8a8060" stroke-width="0.4"/></svg>
<div style="position:absolute;top:809.67px;font-size:10.2px;line-height:10.2px;color:#20203a;white-space:nowrap;-webkit-text-stroke:0.2px currentColor;left:-134.10000000000002px;width:400px;text-align:right;"><span style="display:inline-block;transform:scaleX(0.86);transform-origin:right 50%;">1.06 %</span></div>
<div style="position:absolute;top:809.67px;font-size:10.2px;line-height:10.2px;color:#20203a;white-space:nowrap;-webkit-text-stroke:0.2px currentColor;left:-48.5px;width:400px;text-align:right;"><span style="display:inline-block;transform:scaleX(0.86);transform-origin:right 50%;">0.43 %</span></div>
<div style="position:absolute;top:809.67px;font-size:10.2px;line-height:10.2px;color:#20203a;white-space:nowrap;-webkit-text-stroke:0.2px currentColor;left:38.599999999999966px;width:400px;text-align:right;"><span style="display:inline-block;transform:scaleX(0.86);transform-origin:right 50%;">2.04 %</span></div>
<div style="position:absolute;top:809.67px;font-size:10.2px;line-height:10.2px;color:#20203a;white-space:nowrap;-webkit-text-stroke:0.2px currentColor;left:125.60000000000002px;width:400px;text-align:right;"><span style="display:inline-block;transform:scaleX(0.86);transform-origin:right 50%;">0.40 %</span></div>
<div style="position:absolute;top:809.67px;font-size:10.2px;line-height:10.2px;color:#20203a;white-space:nowrap;-webkit-text-stroke:0.2px currentColor;left:211.0px;width:400px;text-align:right;"><span style="display:inline-block;transform:scaleX(0.86);transform-origin:right 50%;">1.35 %</span></div>
<div style="position:absolute;top:809.67px;font-size:10.2px;line-height:10.2px;color:#20203a;white-space:nowrap;-webkit-text-stroke:0.2px currentColor;left:282.20000000000005px;width:400px;text-align:right;"><span style="display:inline-block;transform:scaleX(0.86);transform-origin:right 50%;">0.00434</span></div>
<div style="position:absolute;top:809.67px;font-size:10.2px;line-height:10.2px;color:#20203a;white-space:nowrap;-webkit-text-stroke:0.2px currentColor;left:354.70000000000005px;width:400px;text-align:right;"><span style="display:inline-block;transform:scaleX(0.86);transform-origin:right 50%;">5.42405</span></div>
<div style="position:absolute;top:809.67px;font-size:10.2px;line-height:10.2px;color:#20203a;white-space:nowrap;-webkit-text-stroke:0.2px currentColor;left:419.6px;width:400px;text-align:right;"><span style="display:inline-block;transform:scaleX(0.86);transform-origin:right 50%;">9.18558</span></div>
<div style="position:absolute;top:809.67px;font-size:10.2px;line-height:10.2px;color:#20203a;white-space:nowrap;-webkit-text-stroke:0.2px currentColor;left:487.20000000000005px;width:400px;text-align:right;"><span style="display:inline-block;transform:scaleX(0.86);transform-origin:right 50%;">3.61329</span></div>
<div style="position:absolute;left:4px;top:835.12px;width:1235px;height:1px;background:#e6e6e6;"></div>
<div style="position:absolute;left:36.5px;top:821.62px;width:123.5px;height:14px;overflow:hidden;"><div style="position:absolute;top:2.07px;font-size:10.2px;line-height:10.2px;color:#20203a;white-space:nowrap;-webkit-text-stroke:0.2px currentColor;left:0px;"><span style="display:inline-block;transform:scaleX(0.915);transform-origin:left 50%;">AudioIP~ent RPC (TID:8900)</span></div></div>
<svg style="position:absolute;left:19px;top:822.62px" width="14" height="13" viewBox="0 0 14 13"><circle cx="10" cy="4.7" r="2.6" fill="#d8c000" stroke="#44446a" stroke-width="0.9"/><circle cx="10" cy="4.7" r="0.9" fill="#5050a0"/><circle cx="5" cy="7.9" r="3.7" fill="#e4d000" stroke="#44446a" stroke-width="0.9"/><circle cx="5" cy="7.9" r="1.35" fill="#dcdcff" stroke="#8a8060" stroke-width="0.4"/></svg>
<div style="position:absolute;top:824.39px;font-size:10.2px;line-height:10.2px;color:#20203a;white-space:nowrap;-webkit-text-stroke:0.2px currentColor;left:-134.10000000000002px;width:400px;text-align:right;"><span style="display:inline-block;transform:scaleX(0.86);transform-origin:right 50%;">0.75 %</span></div>
<div style="position:absolute;top:824.39px;font-size:10.2px;line-height:10.2px;color:#20203a;white-space:nowrap;-webkit-text-stroke:0.2px currentColor;left:-48.5px;width:400px;text-align:right;"><span style="display:inline-block;transform:scaleX(0.86);transform-origin:right 50%;">0.56 %</span></div>
<div style="position:absolute;top:824.39px;font-size:10.2px;line-height:10.2px;color:#20203a;white-space:nowrap;-webkit-text-stroke:0.2px currentColor;left:38.599999999999966px;width:400px;text-align:right;"><span style="display:inline-block;transform:scaleX(0.86);transform-origin:right 50%;">1.40 %</span></div>
<div style="position:absolute;top:824.39px;font-size:10.2px;line-height:10.2px;color:#20203a;white-space:nowrap;-webkit-text-stroke:0.2px currentColor;left:125.60000000000002px;width:400px;text-align:right;"><span style="display:inline-block;transform:scaleX(0.86);transform-origin:right 50%;">0.37 %</span></div>
<div style="position:absolute;top:824.39px;font-size:10.2px;line-height:10.2px;color:#20203a;white-space:nowrap;-webkit-text-stroke:0.2px currentColor;left:211.0px;width:400px;text-align:right;"><span style="display:inline-block;transform:scaleX(0.86);transform-origin:right 50%;">0.68 %</span></div>
<div style="position:absolute;top:824.39px;font-size:10.2px;line-height:10.2px;color:#20203a;white-space:nowrap;-webkit-text-stroke:0.2px currentColor;left:282.20000000000005px;width:400px;text-align:right;"><span style="display:inline-block;transform:scaleX(0.86);transform-origin:right 50%;">0.00384</span></div>
<div style="position:absolute;top:824.39px;font-size:10.2px;line-height:10.2px;color:#20203a;white-space:nowrap;-webkit-text-stroke:0.2px currentColor;left:354.70000000000005px;width:400px;text-align:right;"><span style="display:inline-block;transform:scaleX(0.86);transform-origin:right 50%;">1.11624</span></div>
<div style="position:absolute;top:824.39px;font-size:10.2px;line-height:10.2px;color:#20203a;white-space:nowrap;-webkit-text-stroke:0.2px currentColor;left:419.6px;width:400px;text-align:right;"><span style="display:inline-block;transform:scaleX(0.86);transform-origin:right 50%;">7.58274</span></div>
<div style="position:absolute;top:824.39px;font-size:10.2px;line-height:10.2px;color:#20203a;white-space:nowrap;-webkit-text-stroke:0.2px currentColor;left:487.20000000000005px;width:400px;text-align:right;"><span style="display:inline-block;transform:scaleX(0.86);transform-origin:right 50%;">1.59374</span></div>
<div style="position:absolute;left:4px;top:849.8399999999999px;width:1235px;height:1px;background:#e6e6e6;"></div>
<div style="position:absolute;left:36.5px;top:836.3399999999999px;width:123.5px;height:14px;overflow:hidden;"><div style="position:absolute;top:2.07px;font-size:10.2px;line-height:10.2px;color:#20203a;white-space:nowrap;-webkit-text-stroke:0.2px currentColor;left:0px;"><span style="display:inline-block;transform:scaleX(0.915);transform-origin:left 50%;">AudioIPC Server (TID:8727)</span></div></div>
<svg style="position:absolute;left:19px;top:837.3399999999999px" width="14" height="13" viewBox="0 0 14 13"><circle cx="10" cy="4.7" r="2.6" fill="#d8c000" stroke="#44446a" stroke-width="0.9"/><circle cx="10" cy="4.7" r="0.9" fill="#5050a0"/><circle cx="5" cy="7.9" r="3.7" fill="#e4d000" stroke="#44446a" stroke-width="0.9"/><circle cx="5" cy="7.9" r="1.35" fill="#dcdcff" stroke="#8a8060" stroke-width="0.4"/></svg>
<div style="position:absolute;top:839.11px;font-size:10.2px;line-height:10.2px;color:#20203a;white-space:nowrap;-webkit-text-stroke:0.2px currentColor;left:-134.10000000000002px;width:400px;text-align:right;"><span style="display:inline-block;transform:scaleX(0.86);transform-origin:right 50%;">0.66 %</span></div>
<div style="position:absolute;top:839.11px;font-size:10.2px;line-height:10.2px;color:#20203a;white-space:nowrap;-webkit-text-stroke:0.2px currentColor;left:-48.5px;width:400px;text-align:right;"><span style="display:inline-block;transform:scaleX(0.86);transform-origin:right 50%;">0.29 %</span></div>
<div style="position:absolute;top:839.11px;font-size:10.2px;line-height:10.2px;color:#20203a;white-space:nowrap;-webkit-text-stroke:0.2px currentColor;left:38.599999999999966px;width:400px;text-align:right;"><span style="display:inline-block;transform:scaleX(0.86);transform-origin:right 50%;">0.96 %</span></div>
<div style="position:absolute;top:839.11px;font-size:10.2px;line-height:10.2px;color:#20203a;white-space:nowrap;-webkit-text-stroke:0.2px currentColor;left:125.60000000000002px;width:400px;text-align:right;"><span style="display:inline-block;transform:scaleX(0.86);transform-origin:right 50%;">0.27 %</span></div>
<div style="position:absolute;top:839.11px;font-size:10.2px;line-height:10.2px;color:#20203a;white-space:nowrap;-webkit-text-stroke:0.2px currentColor;left:211.0px;width:400px;text-align:right;"><span style="display:inline-block;transform:scaleX(0.86);transform-origin:right 50%;">1.12 %</span></div>
<div style="position:absolute;top:839.11px;font-size:10.2px;line-height:10.2px;color:#20203a;white-space:nowrap;-webkit-text-stroke:0.2px currentColor;left:282.20000000000005px;width:400px;text-align:right;"><span style="display:inline-block;transform:scaleX(0.86);transform-origin:right 50%;">0.00343</span></div>
<div style="position:absolute;top:839.11px;font-size:10.2px;line-height:10.2px;color:#20203a;white-space:nowrap;-webkit-text-stroke:0.2px currentColor;left:354.70000000000005px;width:400px;text-align:right;"><span style="display:inline-block;transform:scaleX(0.86);transform-origin:right 50%;">1.44056</span></div>
<div style="position:absolute;top:839.11px;font-size:10.2px;line-height:10.2px;color:#20203a;white-space:nowrap;-webkit-text-stroke:0.2px currentColor;left:419.6px;width:400px;text-align:right;"><span style="display:inline-block;transform:scaleX(0.86);transform-origin:right 50%;">3.32181</span></div>
<div style="position:absolute;top:839.11px;font-size:10.2px;line-height:10.2px;color:#20203a;white-space:nowrap;-webkit-text-stroke:0.2px currentColor;left:487.20000000000005px;width:400px;text-align:right;"><span style="display:inline-block;transform:scaleX(0.86);transform-origin:right 50%;">2.70730</span></div>
<div style="position:absolute;left:4px;top:864.56px;width:1235px;height:1px;background:#e6e6e6;"></div>
<div style="position:absolute;left:36.5px;top:851.06px;width:123.5px;height:14px;overflow:hidden;"><div style="position:absolute;top:2.07px;font-size:10.2px;line-height:10.2px;color:#20203a;white-space:nowrap;-webkit-text-stroke:0.2px currentColor;left:0px;"><span style="display:inline-block;transform:scaleX(0.915);transform-origin:left 50%;">firefox (TID:8635)</span></div></div>
<svg style="position:absolute;left:19px;top:852.06px" width="14" height="13" viewBox="0 0 14 13"><circle cx="10" cy="4.7" r="2.6" fill="#d8c000" stroke="#44446a" stroke-width="0.9"/><circle cx="10" cy="4.7" r="0.9" fill="#5050a0"/><circle cx="5" cy="7.9" r="3.7" fill="#e4d000" stroke="#44446a" stroke-width="0.9"/><circle cx="5" cy="7.9" r="1.35" fill="#dcdcff" stroke="#8a8060" stroke-width="0.4"/></svg>
<div style="position:absolute;top:853.83px;font-size:10.2px;line-height:10.2px;color:#20203a;white-space:nowrap;-webkit-text-stroke:0.2px currentColor;left:-134.10000000000002px;width:400px;text-align:right;"><span style="display:inline-block;transform:scaleX(0.86);transform-origin:right 50%;">0.60 %</span></div>
<div style="position:absolute;top:853.83px;font-size:10.2px;line-height:10.2px;color:#20203a;white-space:nowrap;-webkit-text-stroke:0.2px currentColor;left:-48.5px;width:400px;text-align:right;"><span style="display:inline-block;transform:scaleX(0.86);transform-origin:right 50%;">0.27 %</span></div>
<div style="position:absolute;top:853.83px;font-size:10.2px;line-height:10.2px;color:#20203a;white-space:nowrap;-webkit-text-stroke:0.2px currentColor;left:38.599999999999966px;width:400px;text-align:right;"><span style="display:inline-block;transform:scaleX(0.86);transform-origin:right 50%;">1.16 %</span></div>
<div style="position:absolute;top:853.83px;font-size:10.2px;line-height:10.2px;color:#20203a;white-space:nowrap;-webkit-text-stroke:0.2px currentColor;left:125.60000000000002px;width:400px;text-align:right;"><span style="display:inline-block;transform:scaleX(0.86);transform-origin:right 50%;">0.23 %</span></div>
<div style="position:absolute;top:853.83px;font-size:10.2px;line-height:10.2px;color:#20203a;white-space:nowrap;-webkit-text-stroke:0.2px currentColor;left:211.0px;width:400px;text-align:right;"><span style="display:inline-block;transform:scaleX(0.86);transform-origin:right 50%;">0.74 %</span></div>
<div style="position:absolute;top:853.83px;font-size:10.2px;line-height:10.2px;color:#20203a;white-space:nowrap;-webkit-text-stroke:0.2px currentColor;left:282.20000000000005px;width:400px;text-align:right;"><span style="display:inline-block;transform:scaleX(0.86);transform-origin:right 50%;">0.00340</span></div>
<div style="position:absolute;top:853.83px;font-size:10.2px;line-height:10.2px;color:#20203a;white-space:nowrap;-webkit-text-stroke:0.2px currentColor;left:354.70000000000005px;width:400px;text-align:right;"><span style="display:inline-block;transform:scaleX(0.86);transform-origin:right 50%;">8.89598</span></div>
<div style="position:absolute;top:853.83px;font-size:10.2px;line-height:10.2px;color:#20203a;white-space:nowrap;-webkit-text-stroke:0.2px currentColor;left:419.6px;width:400px;text-align:right;"><span style="display:inline-block;transform:scaleX(0.86);transform-origin:right 50%;">9.64375</span></div>
<div style="position:absolute;top:853.83px;font-size:10.2px;line-height:10.2px;color:#20203a;white-space:nowrap;-webkit-text-stroke:0.2px currentColor;left:487.20000000000005px;width:400px;text-align:right;"><span style="display:inline-block;transform:scaleX(0.86);transform-origin:right 50%;">4.22999</span></div>
<div style="position:absolute;left:4px;top:879.28px;width:1235px;height:1px;background:#e6e6e6;"></div>
<div style="position:absolute;left:36.5px;top:865.78px;width:123.5px;height:14px;overflow:hidden;"><div style="position:absolute;top:2.07px;font-size:10.2px;line-height:10.2px;color:#20203a;white-space:nowrap;-webkit-text-stroke:0.2px currentColor;left:0px;"><span style="display:inline-block;transform:scaleX(0.915);transform-origin:left 50%;">MediaDe~hine #1 (TID:8894)</span></div></div>
<svg style="position:absolute;left:19px;top:866.78px" width="14" height="13" viewBox="0 0 14 13"><circle cx="10" cy="4.7" r="2.6" fill="#d8c000" stroke="#44446a" stroke-width="0.9"/><circle cx="10" cy="4.7" r="0.9" fill="#5050a0"/><circle cx="5" cy="7.9" r="3.7" fill="#e4d000" stroke="#44446a" stroke-width="0.9"/><circle cx="5" cy="7.9" r="1.35" fill="#dcdcff" stroke="#8a8060" stroke-width="0.4"/></svg>
<div style="position:absolute;top:868.55px;font-size:10.2px;line-height:10.2px;color:#20203a;white-space:nowrap;-webkit-text-stroke:0.2px currentColor;left:-134.10000000000002px;width:400px;text-align:right;"><span style="display:inline-block;transform:scaleX(0.86);transform-origin:right 50%;">0.51 %</span></div>
<div style="position:absolute;top:868.55px;font-size:10.2px;line-height:10.2px;color:#20203a;white-space:nowrap;-webkit-text-stroke:0.2px currentColor;left:-48.5px;width:400px;text-align:right;"><span style="display:inline-block;transform:scaleX(0.86);transform-origin:right 50%;">0.27 %</span></div>
<div style="position:absolute;top:868.55px;font-size:10.2px;line-height:10.2px;color:#20203a;white-space:nowrap;-webkit-text-stroke:0.2px currentColor;left:38.599999999999966px;width:400px;text-align:right;"><span style="display:inline-block;transform:scaleX(0.86);transform-origin:right 50%;">0.36 %</span></div>
<div style="position:absolute;top:868.55px;font-size:10.2px;line-height:10.2px;color:#20203a;white-space:nowrap;-webkit-text-stroke:0.2px currentColor;left:125.60000000000002px;width:400px;text-align:right;"><span style="display:inline-block;transform:scaleX(0.86);transform-origin:right 50%;">0.25 %</span></div>
<div style="position:absolute;top:868.55px;font-size:10.2px;line-height:10.2px;color:#20203a;white-space:nowrap;-webkit-text-stroke:0.2px currentColor;left:211.0px;width:400px;text-align:right;"><span style="display:inline-block;transform:scaleX(0.86);transform-origin:right 50%;">1.17 %</span></div>
<div style="position:absolute;top:868.55px;font-size:10.2px;line-height:10.2px;color:#20203a;white-space:nowrap;-webkit-text-stroke:0.2px currentColor;left:282.20000000000005px;width:400px;text-align:right;"><span style="display:inline-block;transform:scaleX(0.86);transform-origin:right 50%;">0.00362</span></div>
<div style="position:absolute;top:868.55px;font-size:10.2px;line-height:10.2px;color:#20203a;white-space:nowrap;-webkit-text-stroke:0.2px currentColor;left:354.70000000000005px;width:400px;text-align:right;"><span style="display:inline-block;transform:scaleX(0.86);transform-origin:right 50%;">0.82905</span></div>
<div style="position:absolute;top:868.55px;font-size:10.2px;line-height:10.2px;color:#20203a;white-space:nowrap;-webkit-text-stroke:0.2px currentColor;left:419.6px;width:400px;text-align:right;"><span style="display:inline-block;transform:scaleX(0.86);transform-origin:right 50%;">10.30418</span></div>
<div style="position:absolute;top:868.55px;font-size:10.2px;line-height:10.2px;color:#20203a;white-space:nowrap;-webkit-text-stroke:0.2px currentColor;left:487.20000000000005px;width:400px;text-align:right;"><span style="display:inline-block;transform:scaleX(0.86);transform-origin:right 50%;">2.14228</span></div>
<div style="position:absolute;left:36.5px;top:880.5px;width:123.5px;height:14px;overflow:hidden;"><div style="position:absolute;top:2.07px;font-size:10.2px;line-height:10.2px;color:#20203a;white-space:nowrap;-webkit-text-stroke:0.2px currentColor;left:0px;"><span style="display:inline-block;transform:scaleX(0.915);transform-origin:left 50%;">perf (TID:8946)</span></div></div>
<svg style="position:absolute;left:19px;top:881.5px" width="14" height="13" viewBox="0 0 14 13"><circle cx="10" cy="4.7" r="2.6" fill="#d8c000" stroke="#44446a" stroke-width="0.9"/><circle cx="10" cy="4.7" r="0.9" fill="#5050a0"/><circle cx="5" cy="7.9" r="3.7" fill="#e4d000" stroke="#44446a" stroke-width="0.9"/><circle cx="5" cy="7.9" r="1.35" fill="#dcdcff" stroke="#8a8060" stroke-width="0.4"/></svg>
<div style="position:absolute;top:883.27px;font-size:10.2px;line-height:10.2px;color:#20203a;white-space:nowrap;-webkit-text-stroke:0.2px currentColor;left:-134.10000000000002px;width:400px;text-align:right;"><span style="display:inline-block;transform:scaleX(0.86);transform-origin:right 50%;">0.43 %</span></div>
<div style="position:absolute;top:883.27px;font-size:10.2px;line-height:10.2px;color:#20203a;white-space:nowrap;-webkit-text-stroke:0.2px currentColor;left:-48.5px;width:400px;text-align:right;"><span style="display:inline-block;transform:scaleX(0.86);transform-origin:right 50%;">0.38 %</span></div>
<div style="position:absolute;top:883.27px;font-size:10.2px;line-height:10.2px;color:#20203a;white-space:nowrap;-webkit-text-stroke:0.2px currentColor;left:38.599999999999966px;width:400px;text-align:right;"><span style="display:inline-block;transform:scaleX(0.86);transform-origin:right 50%;">0.37 %</span></div>
<div style="position:absolute;top:883.27px;font-size:10.2px;line-height:10.2px;color:#20203a;white-space:nowrap;-webkit-text-stroke:0.2px currentColor;left:125.60000000000002px;width:400px;text-align:right;"><span style="display:inline-block;transform:scaleX(0.86);transform-origin:right 50%;">0.55 %</span></div>
<div style="position:absolute;top:883.27px;font-size:10.2px;line-height:10.2px;color:#20203a;white-space:nowrap;-webkit-text-stroke:0.2px currentColor;left:211.0px;width:400px;text-align:right;"><span style="display:inline-block;transform:scaleX(0.86);transform-origin:right 50%;">0.41 %</span></div>
<div style="position:absolute;top:883.27px;font-size:10.2px;line-height:10.2px;color:#20203a;white-space:nowrap;-webkit-text-stroke:0.2px currentColor;left:282.20000000000005px;width:400px;text-align:right;"><span style="display:inline-block;transform:scaleX(0.86);transform-origin:right 50%;">0.01087</span></div>
<div style="position:absolute;top:883.27px;font-size:10.2px;line-height:10.2px;color:#20203a;white-space:nowrap;-webkit-text-stroke:0.2px currentColor;left:354.70000000000005px;width:400px;text-align:right;"><span style="display:inline-block;transform:scaleX(0.86);transform-origin:right 50%;">88.68191</span></div>
<div style="position:absolute;top:883.27px;font-size:10.2px;line-height:10.2px;color:#20203a;white-space:nowrap;-webkit-text-stroke:0.2px currentColor;left:419.6px;width:400px;text-align:right;"><span style="display:inline-block;transform:scaleX(0.86);transform-origin:right 50%;">88.68191</span></div>
<div style="position:absolute;top:883.27px;font-size:10.2px;line-height:10.2px;color:#20203a;white-space:nowrap;-webkit-text-stroke:0.2px currentColor;left:487.20000000000005px;width:400px;text-align:right;"><span style="display:inline-block;transform:scaleX(0.86);transform-origin:right 50%;">0.44425</span></div>
<div style="position:absolute;left:822.4px;top:762.52px;width:67.1px;height:13.72px;background:#f0f0f0;"></div>
<svg style="position:absolute;left:1206px;top:675.5px" width="14" height="15" viewBox="0 0 14 15"><rect x="0.8" y="0.8" width="8" height="11" fill="#c0d4e8" stroke="#b09868" stroke-width="0.9"/><path d="M4,3 h6 l3,3 v8 h-9 z" fill="#e4eef8" stroke="#b09868" stroke-width="0.9"/><path d="M5.5,7 h6 M5.5,9 h6 M5.5,11 h6" stroke="#7a9ac0" stroke-width="0.8"/></svg>
<svg style="position:absolute;left:1224px;top:674.5px" width="15" height="16" viewBox="0 0 15 16"><rect x="2.5" y="2.5" width="12" height="12" fill="#e8f0f4" stroke="#a0a0a0" stroke-width="0.9"/><rect x="8" y="3" width="6" height="2.5" fill="#40c8f8"/><rect x="3" y="9" width="2.5" height="5" fill="#40c8f8"/><path d="M8,6 v8 M3,9 h11" stroke="#c8d0d8" stroke-width="0.6"/><rect x="0.5" y="0.5" width="8" height="8" rx="1.2" fill="#8ccc64" stroke="#4a9a3a" stroke-width="0.9"/><path d="M2.5,2.5 L6.5,4.5 L2.5,6.5" fill="none" stroke="#2a7a2a" stroke-width="0.9"/></svg>
</body></html>
